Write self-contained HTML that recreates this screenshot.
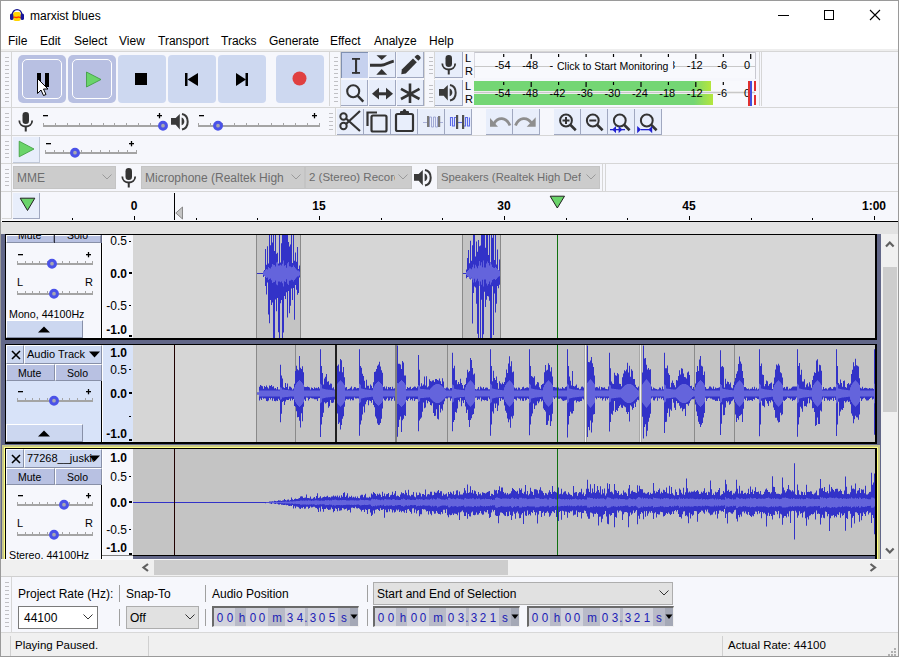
<!DOCTYPE html>
<html><head><meta charset="utf-8"><style>
html,body{margin:0;padding:0;width:899px;height:657px;overflow:hidden;background:#fff;}
body>div,body>svg{position:absolute;}
.t{position:absolute;font-family:"Liberation Sans", sans-serif;white-space:nowrap;line-height:1;}
svg{position:absolute;}
</style></head><body>
<div style="left:0px;top:0px;width:899px;height:657px;background:#fff;"></div>
<svg style="left:8px;top:8px" width="18" height="15" viewBox="0 0 18 15">
<path d="M4.3 7 C4.3 -0.2 13.8 -0.2 13.8 7" fill="none" stroke="#14148c" stroke-width="1.4"/>
<rect x="5.2" y="4" width="7.6" height="9" rx="2.2" fill="#ffd400"/>
<path d="M5.2 9.3 C7 8.6 8.5 10.2 9.5 9.2 C10.5 8.5 11.5 9.8 12.8 9.3" stroke="#ff3000" stroke-width="1.4" fill="none"/>
<rect x="2" y="5.5" width="3.4" height="6.5" rx="1.6" fill="#16169c"/>
<rect x="12.6" y="5.5" width="3.4" height="6.5" rx="1.6" fill="#16169c"/>
</svg>
<div class="t" style="left:30px;top:10px;font-size:12px;color:#000;">marxist blues</div>
<div style="left:778px;top:15px;width:11px;height:1px;background:#000;"></div>
<div style="left:824px;top:10px;width:10px;height:10px;border:1px solid #000;box-sizing:border-box;"></div>
<svg style="left:869px;top:9px" width="12" height="12"><path d="M1 1 L11 11 M11 1 L1 11" stroke="#000" stroke-width="1.1"/></svg>
<div class="t" style="left:8px;top:35px;font-size:12px;">File</div>
<div class="t" style="left:40px;top:35px;font-size:12px;">Edit</div>
<div class="t" style="left:74px;top:35px;font-size:12px;">Select</div>
<div class="t" style="left:119px;top:35px;font-size:12px;">View</div>
<div class="t" style="left:158px;top:35px;font-size:12px;">Transport</div>
<div class="t" style="left:221px;top:35px;font-size:12px;">Tracks</div>
<div class="t" style="left:269px;top:35px;font-size:12px;">Generate</div>
<div class="t" style="left:330px;top:35px;font-size:12px;">Effect</div>
<div class="t" style="left:374px;top:35px;font-size:12px;">Analyze</div>
<div class="t" style="left:429px;top:35px;font-size:12px;">Help</div>
<div style="left:1px;top:49px;width:897px;height:143px;background:#f6f7fc;"></div>
<div style="left:1px;top:49px;width:897px;height:2px;background:#eeeeee;"></div>
<div style="left:1px;top:51px;width:897px;height:1px;background:#d6d6d6;"></div>
<div style="left:1px;top:107px;width:897px;height:1px;background:#d6d6d6;"></div>
<div style="left:1px;top:135px;width:897px;height:1px;background:#d6d6d6;"></div>
<div style="left:1px;top:163px;width:897px;height:1px;background:#d6d6d6;"></div>
<div style="left:1px;top:191px;width:897px;height:1px;background:#d6d6d6;"></div>
<div style="left:1px;top:52px;width:10px;height:55px;background:#f6f7fc;"></div>
<div style="left:11px;top:52px;width:1px;height:55px;background:#d6d6d6;"></div>
<svg style="left:0;top:0" width="899" height="657"><rect x="5" y="57" width="4" height="1" fill="#c0c0c4"/><rect x="5" y="61" width="4" height="1" fill="#c0c0c4"/><rect x="5" y="65" width="4" height="1" fill="#c0c0c4"/><rect x="5" y="69" width="4" height="1" fill="#c0c0c4"/><rect x="5" y="73" width="4" height="1" fill="#c0c0c4"/><rect x="5" y="77" width="4" height="1" fill="#c0c0c4"/><rect x="5" y="81" width="4" height="1" fill="#c0c0c4"/><rect x="5" y="85" width="4" height="1" fill="#c0c0c4"/><rect x="5" y="89" width="4" height="1" fill="#c0c0c4"/><rect x="5" y="93" width="4" height="1" fill="#c0c0c4"/><rect x="5" y="97" width="4" height="1" fill="#c0c0c4"/><rect x="5" y="101" width="4" height="1" fill="#c0c0c4"/></svg>
<div style="left:18px;top:55px;width:48px;height:48px;background:#b8c0e2;border-radius:5px;"></div>
<div style="left:22px;top:59px;width:40px;height:40px;border:1px solid #fff;border-radius:5px;box-sizing:border-box;"></div>
<div style="left:68px;top:55px;width:48px;height:48px;background:#b8c0e2;border-radius:5px;"></div>
<div style="left:72px;top:59px;width:40px;height:40px;border:1px solid #fff;border-radius:5px;box-sizing:border-box;"></div>
<div style="left:118px;top:55px;width:48px;height:48px;background:#cdd8f0;border-radius:4px;"></div>
<div style="left:168px;top:55px;width:48px;height:48px;background:#cdd8f0;border-radius:4px;"></div>
<div style="left:218px;top:55px;width:48px;height:48px;background:#cdd8f0;border-radius:4px;"></div>
<div style="left:276px;top:55px;width:48px;height:48px;background:#cdd8f0;border-radius:4px;"></div>
<div style="left:37px;top:73px;width:4px;height:14px;background:#000;"></div>
<div style="left:45px;top:73px;width:4px;height:14px;background:#000;"></div>
<svg style="left:85px;top:71px" width="17" height="18"><path d="M1.5 1 L16 8.5 L1.5 16 Z" fill="#6ad46a" stroke="#3a9a3a" stroke-width="0.8"/></svg>
<div style="left:135px;top:73px;width:12px;height:12px;background:#000;"></div>
<svg style="left:185px;top:73px" width="14" height="14"><rect x="0" y="0" width="2.5" height="13" fill="#000"/><path d="M2.5 6.5 L13 0 L13 13 Z" fill="#000"/></svg>
<svg style="left:236px;top:73px" width="14" height="14"><path d="M0 0 L10 6.5 L0 13 Z" fill="#000"/><rect x="9.5" y="0" width="2.5" height="13" fill="#000"/></svg>
<svg style="left:292px;top:71px" width="16" height="16"><circle cx="7.5" cy="7.5" r="7" fill="#e04040"/></svg>
<svg style="left:36px;top:77px" width="14" height="22"><path d="M1.5 1.5 L1.5 16.5 L5 13 L7.5 18.5 L10 17.5 L7.5 12 L12 12 Z" fill="#fff" stroke="#000" stroke-width="1"/></svg>
<div style="left:329px;top:51px;width:1px;height:55px;background:#d6d6d6;"></div>
<div style="left:330px;top:52px;width:10px;height:55px;background:#f6f7fc;"></div>
<div style="left:340px;top:52px;width:1px;height:55px;background:#d6d6d6;"></div>
<svg style="left:0;top:0" width="899" height="657"><rect x="334" y="57" width="4" height="1" fill="#c0c0c4"/><rect x="334" y="61" width="4" height="1" fill="#c0c0c4"/><rect x="334" y="65" width="4" height="1" fill="#c0c0c4"/><rect x="334" y="69" width="4" height="1" fill="#c0c0c4"/><rect x="334" y="73" width="4" height="1" fill="#c0c0c4"/><rect x="334" y="77" width="4" height="1" fill="#c0c0c4"/><rect x="334" y="81" width="4" height="1" fill="#c0c0c4"/><rect x="334" y="85" width="4" height="1" fill="#c0c0c4"/><rect x="334" y="89" width="4" height="1" fill="#c0c0c4"/><rect x="334" y="93" width="4" height="1" fill="#c0c0c4"/><rect x="334" y="97" width="4" height="1" fill="#c0c0c4"/><rect x="334" y="101" width="4" height="1" fill="#c0c0c4"/></svg>
<div style="left:341px;top:52px;width:27px;height:26px;background:#c6d1ee;border-left:1px solid #8090b0;border-top:1px solid #8090b0;box-sizing:border-box;"></div>
<div style="left:341px;top:80px;width:27px;height:26px;background:#e8eefb;border-right:1px solid #a0a8c0;border-bottom:1px solid #a0a8c0;box-sizing:border-box;"></div>
<div style="left:369px;top:52px;width:27px;height:26px;background:#e8eefb;border-right:1px solid #a0a8c0;border-bottom:1px solid #a0a8c0;box-sizing:border-box;"></div>
<div style="left:369px;top:80px;width:27px;height:26px;background:#e8eefb;border-right:1px solid #a0a8c0;border-bottom:1px solid #a0a8c0;box-sizing:border-box;"></div>
<div style="left:397px;top:52px;width:27px;height:26px;background:#e8eefb;border-right:1px solid #a0a8c0;border-bottom:1px solid #a0a8c0;box-sizing:border-box;"></div>
<div style="left:397px;top:80px;width:27px;height:26px;background:#e8eefb;border-right:1px solid #a0a8c0;border-bottom:1px solid #a0a8c0;box-sizing:border-box;"></div>
<div style="left:424px;top:51px;width:1px;height:55px;background:#d6d6d6;"></div>
<div style="left:425px;top:52px;width:9px;height:27px;background:#f6f7fc;"></div>
<div style="left:434px;top:52px;width:1px;height:27px;background:#d6d6d6;"></div>
<svg style="left:0;top:0" width="899" height="657"><rect x="429" y="57" width="4" height="1" fill="#c0c0c4"/><rect x="429" y="61" width="4" height="1" fill="#c0c0c4"/><rect x="429" y="65" width="4" height="1" fill="#c0c0c4"/><rect x="429" y="69" width="4" height="1" fill="#c0c0c4"/><rect x="429" y="73" width="4" height="1" fill="#c0c0c4"/></svg>
<div style="left:425px;top:80px;width:9px;height:27px;background:#f6f7fc;"></div>
<div style="left:434px;top:80px;width:1px;height:27px;background:#d6d6d6;"></div>
<svg style="left:0;top:0" width="899" height="657"><rect x="429" y="85" width="4" height="1" fill="#c0c0c4"/><rect x="429" y="89" width="4" height="1" fill="#c0c0c4"/><rect x="429" y="93" width="4" height="1" fill="#c0c0c4"/><rect x="429" y="97" width="4" height="1" fill="#c0c0c4"/><rect x="429" y="101" width="4" height="1" fill="#c0c0c4"/></svg>
<div style="left:435px;top:52px;width:28px;height:26px;background:#e8eefb;border-right:1px solid #a0a8c0;border-bottom:1px solid #a0a8c0;box-sizing:border-box;"></div>
<div style="left:435px;top:80px;width:28px;height:26px;background:#e8eefb;border-right:1px solid #a0a8c0;border-bottom:1px solid #a0a8c0;box-sizing:border-box;"></div>
<svg style="left:0;top:0" width="899" height="657">
<g fill="#333">
<rect x="352" y="58" width="8" height="1.8"/><rect x="352" y="72" width="8" height="1.8"/><rect x="355" y="58" width="2.1" height="15.5"/>
<path d="M376.5 55.3 H387 L381.7 60 Z"/><path d="M376.3 74.8 H387.2 L381.7 69 Z"/>
<path d="M370 63.8 H381 C385 63.5 389 61 393.5 59.8 L394 62.5 C389 64 385 66.5 381 66.8 H370 Z"/>
<path d="M401.3 74.3 L401.8 69.5 L413 58.5 L416.8 62.3 L405.8 73.5 Z"/><path d="M414.5 57 L416.3 55.2 C417 54.5 418 54.5 418.8 55.2 L420.1 56.5 C420.8 57.3 420.8 58.3 420.1 59 L418.3 60.8 Z"/>
<path d="M372 93.7 L379 87.8 V99.6 Z"/><path d="M393 93.7 L386 87.8 V99.6 Z"/><rect x="378" y="92.3" width="9" height="3"/>
</g>
<g fill="none" stroke="#333">
<circle cx="353.2" cy="91.3" r="6" stroke-width="2.1"/><path d="M357.8 95.9 L363.3 101.6" stroke-width="2.4"/>
<path d="M410 83.6 V103 M401 88.8 L419.5 99 M419.5 88.8 L401 99" stroke-width="2.6"/>
</g>
</svg>
<svg style="left:441px;top:55px" width="16" height="21" viewBox="0 0 16 21"><rect x="4.5" y="0" width="6.5" height="12" rx="3.25" fill="#333"/><path d="M1.3 8.5 C1.3 16.5 14.2 16.5 14.2 8.5" fill="none" stroke="#333" stroke-width="1.8"/><rect x="6.75" y="14.5" width="2" height="5" fill="#333"/></svg>
<svg style="left:439px;top:84px" width="19" height="18" viewBox="0 0 19 18"><path d="M0 5 H4.7 L8.8 1 V16.5 L4.7 11.8 H0 Z" fill="#3a3a3a"/><path d="M10.6 4.6 C14.2 5.6 14.2 11.4 10.6 12.3 Z" fill="#3a3a3a"/><path d="M11 1 C18.6 2.6 18.6 14.8 11 16.5" fill="none" stroke="#3a3a3a" stroke-width="2"/></svg>
<div class="t" style="left:465px;top:53px;font-size:11px;color:#000;">L</div>
<div class="t" style="left:465px;top:66px;font-size:11px;color:#000;">R</div>
<div class="t" style="left:465px;top:81px;font-size:11px;color:#000;">L</div>
<div class="t" style="left:465px;top:94px;font-size:11px;color:#000;">R</div>
<div style="left:474px;top:52px;width:281px;height:26px;background:#f8f9fd;border-top:1px solid #c4c4cc;border-left:1px solid #d8d8e0;box-sizing:border-box;"></div>
<div style="left:474px;top:66px;width:281px;height:1px;background:#c8c8c8;"></div>
<div style="left:755px;top:52px;width:1px;height:27px;background:#c8c8d0;"></div>
<div style="left:474px;top:81px;width:281px;height:25px;background:#f8f9fd;"></div>
<div style="left:474px;top:81px;width:237px;height:10px;background:linear-gradient(to right,#74d674 0%,#74d674 92%,#b4e63c 100%);"></div>
<div style="left:474px;top:94px;width:239px;height:11px;background:linear-gradient(to right,#74d674 0%,#74d674 92%,#b4e63c 100%);"></div>
<div style="left:474px;top:91px;width:281px;height:3px;background:#ececec;"></div>
<div style="left:474px;top:92px;width:281px;height:1px;background:#c8c8c8;"></div>
<div class="t" style="left:490.6px;top:60px;width:24px;text-align:center;font-size:11px;color:#000;">-54</div>
<div class="t" style="left:490.6px;top:88px;width:24px;text-align:center;font-size:11px;color:#000;">-54</div>
<div class="t" style="left:518.1px;top:60px;width:24px;text-align:center;font-size:11px;color:#000;">-48</div>
<div class="t" style="left:518.1px;top:88px;width:24px;text-align:center;font-size:11px;color:#000;">-48</div>
<div class="t" style="left:545.5px;top:60px;width:24px;text-align:center;font-size:11px;color:#000;">-42</div>
<div class="t" style="left:545.5px;top:88px;width:24px;text-align:center;font-size:11px;color:#000;">-42</div>
<div class="t" style="left:573.0px;top:60px;width:24px;text-align:center;font-size:11px;color:#000;">-36</div>
<div class="t" style="left:573.0px;top:88px;width:24px;text-align:center;font-size:11px;color:#000;">-36</div>
<div class="t" style="left:600.4px;top:60px;width:24px;text-align:center;font-size:11px;color:#000;">-30</div>
<div class="t" style="left:600.4px;top:88px;width:24px;text-align:center;font-size:11px;color:#000;">-30</div>
<div class="t" style="left:627.9px;top:60px;width:24px;text-align:center;font-size:11px;color:#000;">-24</div>
<div class="t" style="left:627.9px;top:88px;width:24px;text-align:center;font-size:11px;color:#000;">-24</div>
<div class="t" style="left:655.3px;top:60px;width:24px;text-align:center;font-size:11px;color:#000;">-18</div>
<div class="t" style="left:655.3px;top:88px;width:24px;text-align:center;font-size:11px;color:#000;">-18</div>
<div class="t" style="left:682.8px;top:60px;width:24px;text-align:center;font-size:11px;color:#000;">-12</div>
<div class="t" style="left:682.8px;top:88px;width:24px;text-align:center;font-size:11px;color:#000;">-12</div>
<div class="t" style="left:710.2px;top:60px;width:24px;text-align:center;font-size:11px;color:#000;">-6</div>
<div class="t" style="left:710.2px;top:88px;width:24px;text-align:center;font-size:11px;color:#000;">-6</div>
<div class="t" style="left:735.0px;top:60px;width:24px;text-align:center;font-size:11px;color:#000;">0</div>
<div class="t" style="left:735.0px;top:88px;width:24px;text-align:center;font-size:11px;color:#000;">0</div>
<svg style="left:0;top:0" width="899" height="657"><rect x="503.1" y="54" width="1.2" height="3" fill="#000"/><rect x="503.1" y="82" width="1.2" height="3" fill="#000"/><rect x="530.6" y="54" width="1.2" height="5" fill="#000"/><rect x="530.6" y="82" width="1.2" height="5" fill="#000"/><rect x="558.0" y="54" width="1.2" height="3" fill="#000"/><rect x="558.0" y="82" width="1.2" height="3" fill="#000"/><rect x="585.5" y="54" width="1.2" height="5" fill="#000"/><rect x="585.5" y="82" width="1.2" height="5" fill="#000"/><rect x="612.9" y="54" width="1.2" height="3" fill="#000"/><rect x="612.9" y="82" width="1.2" height="3" fill="#000"/><rect x="640.4" y="54" width="1.2" height="5" fill="#000"/><rect x="640.4" y="82" width="1.2" height="5" fill="#000"/><rect x="667.8" y="54" width="1.2" height="3" fill="#000"/><rect x="667.8" y="82" width="1.2" height="3" fill="#000"/><rect x="695.2" y="54" width="1.2" height="5" fill="#000"/><rect x="695.2" y="82" width="1.2" height="5" fill="#000"/><rect x="722.7" y="54" width="1.2" height="3" fill="#000"/><rect x="722.7" y="82" width="1.2" height="3" fill="#000"/><rect x="750.1" y="54" width="1.2" height="5" fill="#000"/><rect x="750.1" y="82" width="1.2" height="5" fill="#000"/></svg>
<div style="left:553px;top:57px;width:120px;height:19px;background:#f8f9fd;"></div>
<div class="t" style="left:557px;top:61px;font-size:10.5px;color:#000;">Click to Start Monitoring</div>
<div style="left:748px;top:81px;width:2px;height:25px;background:#e03030;"></div>
<div style="left:750px;top:81px;width:2px;height:25px;background:#4050e0;"></div>
<div style="left:754px;top:81px;width:2px;height:10px;background:#e03030;"></div>
<div style="left:754px;top:95px;width:2px;height:10px;background:#e03030;"></div>
<div style="left:759px;top:51px;width:1px;height:55px;background:#d6d6d6;"></div>
<div style="left:761px;top:51px;width:1px;height:55px;background:#d6d6d6;"></div>
<div style="left:1px;top:108px;width:10px;height:27px;background:#f6f7fc;"></div>
<div style="left:11px;top:108px;width:1px;height:27px;background:#d6d6d6;"></div>
<svg style="left:0;top:0" width="899" height="657"><rect x="5" y="113" width="4" height="1" fill="#c0c0c4"/><rect x="5" y="117" width="4" height="1" fill="#c0c0c4"/><rect x="5" y="121" width="4" height="1" fill="#c0c0c4"/><rect x="5" y="125" width="4" height="1" fill="#c0c0c4"/><rect x="5" y="129" width="4" height="1" fill="#c0c0c4"/></svg>
<svg style="left:18px;top:112px" width="16" height="21" viewBox="0 0 16 21"><rect x="4.5" y="0" width="6.5" height="12" rx="3.25" fill="#333"/><path d="M1.3 8.5 C1.3 16.5 14.2 16.5 14.2 8.5" fill="none" stroke="#333" stroke-width="1.8"/><rect x="6.75" y="14.5" width="2" height="5" fill="#333"/></svg>
<svg style="left:0;top:0" width="899" height="657"><rect x="43" y="125" width="120" height="2" fill="#a4a4a4"/><rect x="43" y="123" width="1" height="2" fill="#a4a4a4"/><rect x="55" y="123" width="1" height="2" fill="#a4a4a4"/><rect x="67" y="123" width="1" height="2" fill="#a4a4a4"/><rect x="79" y="123" width="1" height="2" fill="#a4a4a4"/><rect x="91" y="123" width="1" height="2" fill="#a4a4a4"/><rect x="103" y="123" width="1" height="2" fill="#a4a4a4"/><rect x="114" y="123" width="1" height="2" fill="#a4a4a4"/><rect x="126" y="123" width="1" height="2" fill="#a4a4a4"/><rect x="138" y="123" width="1" height="2" fill="#a4a4a4"/><rect x="150" y="123" width="1" height="2" fill="#a4a4a4"/><rect x="162" y="123" width="1" height="2" fill="#a4a4a4"/><circle cx="163" cy="125.7" r="3.4" fill="#a8a8b0" stroke="#4a52e8" stroke-width="3.1"/></svg>
<svg style="left:0;top:0" width="899" height="657"><rect x="43" y="115" width="5" height="1.3" fill="#000"/></svg>
<svg style="left:0;top:0" width="899" height="657"><rect x="157" y="115" width="5" height="1.3" fill="#000"/><rect x="158.85" y="113" width="1.3" height="5.3" fill="#000"/></svg>
<svg style="left:171px;top:113px" width="19" height="18" viewBox="0 0 19 18"><path d="M0 5 H4.7 L8.8 1 V16.5 L4.7 11.8 H0 Z" fill="#3a3a3a"/><path d="M10.6 4.6 C14.2 5.6 14.2 11.4 10.6 12.3 Z" fill="#3a3a3a"/><path d="M11 1 C18.6 2.6 18.6 14.8 11 16.5" fill="none" stroke="#3a3a3a" stroke-width="2"/></svg>
<svg style="left:0;top:0" width="899" height="657"><rect x="198" y="125" width="122" height="2" fill="#a4a4a4"/><rect x="198" y="123" width="1" height="2" fill="#a4a4a4"/><rect x="210" y="123" width="1" height="2" fill="#a4a4a4"/><rect x="222" y="123" width="1" height="2" fill="#a4a4a4"/><rect x="234" y="123" width="1" height="2" fill="#a4a4a4"/><rect x="246" y="123" width="1" height="2" fill="#a4a4a4"/><rect x="258" y="123" width="1" height="2" fill="#a4a4a4"/><rect x="271" y="123" width="1" height="2" fill="#a4a4a4"/><rect x="283" y="123" width="1" height="2" fill="#a4a4a4"/><rect x="295" y="123" width="1" height="2" fill="#a4a4a4"/><rect x="307" y="123" width="1" height="2" fill="#a4a4a4"/><rect x="319" y="123" width="1" height="2" fill="#a4a4a4"/><circle cx="218" cy="125.7" r="3.4" fill="#a8a8b0" stroke="#4a52e8" stroke-width="3.1"/></svg>
<svg style="left:0;top:0" width="899" height="657"><rect x="199" y="115" width="5" height="1.3" fill="#000"/></svg>
<svg style="left:0;top:0" width="899" height="657"><rect x="312" y="115" width="5" height="1.3" fill="#000"/><rect x="313.85" y="113" width="1.3" height="5.3" fill="#000"/></svg>
<div style="left:325px;top:107px;width:1px;height:28px;background:#d6d6d6;"></div>
<div style="left:325px;top:108px;width:10px;height:27px;background:#f6f7fc;"></div>
<div style="left:335px;top:108px;width:1px;height:27px;background:#d6d6d6;"></div>
<svg style="left:0;top:0" width="899" height="657"><rect x="329" y="113" width="4" height="1" fill="#c0c0c4"/><rect x="329" y="117" width="4" height="1" fill="#c0c0c4"/><rect x="329" y="121" width="4" height="1" fill="#c0c0c4"/><rect x="329" y="125" width="4" height="1" fill="#c0c0c4"/><rect x="329" y="129" width="4" height="1" fill="#c0c0c4"/></svg>
<div style="left:337px;top:109px;width:27px;height:26px;background:#e8eefb;border-right:1px solid #a0a8c0;border-bottom:1px solid #a0a8c0;box-sizing:border-box;"></div>
<div style="left:364px;top:109px;width:27px;height:26px;background:#e8eefb;border-right:1px solid #a0a8c0;border-bottom:1px solid #a0a8c0;box-sizing:border-box;"></div>
<div style="left:391px;top:109px;width:27px;height:26px;background:#e8eefb;border-right:1px solid #a0a8c0;border-bottom:1px solid #a0a8c0;box-sizing:border-box;"></div>
<div style="left:418px;top:109px;width:27px;height:26px;background:#e8eefb;border-right:1px solid #a0a8c0;border-bottom:1px solid #a0a8c0;box-sizing:border-box;"></div>
<div style="left:445px;top:109px;width:27px;height:26px;background:#e8eefb;border-right:1px solid #a0a8c0;border-bottom:1px solid #a0a8c0;box-sizing:border-box;"></div>
<div style="left:486px;top:109px;width:27px;height:26px;background:#e8eefb;border-right:1px solid #a0a8c0;border-bottom:1px solid #a0a8c0;box-sizing:border-box;"></div>
<div style="left:513px;top:109px;width:27px;height:26px;background:#e8eefb;border-right:1px solid #a0a8c0;border-bottom:1px solid #a0a8c0;box-sizing:border-box;"></div>
<div style="left:554px;top:109px;width:27px;height:26px;background:#e8eefb;border-right:1px solid #a0a8c0;border-bottom:1px solid #a0a8c0;box-sizing:border-box;"></div>
<div style="left:581px;top:109px;width:27px;height:26px;background:#e8eefb;border-right:1px solid #a0a8c0;border-bottom:1px solid #a0a8c0;box-sizing:border-box;"></div>
<div style="left:608px;top:109px;width:27px;height:26px;background:#e8eefb;border-right:1px solid #a0a8c0;border-bottom:1px solid #a0a8c0;box-sizing:border-box;"></div>
<div style="left:635px;top:109px;width:27px;height:26px;background:#e8eefb;border-right:1px solid #a0a8c0;border-bottom:1px solid #a0a8c0;box-sizing:border-box;"></div>
<svg style="left:0;top:0" width="899" height="657">
<g fill="none" stroke="#333" stroke-width="2">
<circle cx="343.5" cy="126" r="3.2"/><circle cx="343.5" cy="116.5" r="3.2"/>
<path d="M346 124 L360 111 M346 118.5 L360 131" stroke-width="2.2"/>
<path d="M367.5 126 V112.5 H377" stroke-width="2.2"/>
<rect x="371.5" y="115.5" width="15" height="16" rx="1.5" stroke-width="2.2"/>
<rect x="396" y="114" width="17" height="17" rx="1.5" stroke-width="2.2"/>
</g>
<rect x="400" y="111" width="9" height="4" rx="1" fill="#333"/>
<circle cx="404.5" cy="110.5" r="1.6" fill="#333"/>
<path d="M423 122.5 H427 M440 122.5 H443" stroke="#a8b0d8" stroke-width="1.2"/>
<path d="M429.5 127 V117 H431.5 V127 H433.5 V117 H435.5 V127 H437.5 V117" fill="none" stroke="#98a0d0" stroke-width="0.9"/>
<rect x="427" y="116" width="2.2" height="11" fill="#7a7a7a"/><rect x="438" y="116" width="2.2" height="11" fill="#7a7a7a"/>
<path d="M450.5 126 V117.5 H452.5 V126 H454.5 V117.5 H456 M464 126 H465.5 V117.5 H467.5 V126 H469.5 V117.5" fill="none" stroke="#5a6ae8" stroke-width="1.1"/>
<path d="M458 122.5 H462" stroke="#5a6ae8" stroke-width="1.1"/>
<rect x="456" y="115" width="2.2" height="14" fill="#505050"/><rect x="462" y="115" width="2.2" height="14" fill="#505050"/>
<path d="M490 118 V126.7 H498 Z" fill="#8e8e8e"/>
<path d="M494 123.5 C498 117 506 116.5 510 125.5" fill="none" stroke="#8e8e8e" stroke-width="2.8"/>
<path d="M535.7 117.3 V126.7 H526.7 Z" fill="#8e8e8e"/>
<path d="M515.5 125.5 C519 117 527 116.5 531.5 123" fill="none" stroke="#8e8e8e" stroke-width="2.8"/>
<g fill="none" stroke="#333" stroke-width="2">
<circle cx="566" cy="120.5" r="5.9"/><path d="M570.3 124.8 L575.8 130.2" stroke-width="2.6"/>
<path d="M562.5 120.5 H569.5 M566 117 V124"/>
<circle cx="592.8" cy="120.5" r="5.9"/><path d="M597.1 124.8 L602.6 130.2" stroke-width="2.6"/>
<path d="M589.3 120.5 H596.3"/>
<circle cx="619.8" cy="120.5" r="5.9"/><path d="M624.1 124.8 L629.6 130.2" stroke-width="2.6"/>
<circle cx="646.8" cy="120.5" r="5.9"/><path d="M651.1 124.8 L656.6 130.2" stroke-width="2.6"/>
</g>
<g fill="#2020d0">
<rect x="610" y="129" width="15" height="1.3"/>
<path d="M612.3 129.6 L616 126 V133.2 Z"/><path d="M622.3 129.6 L618.6 126 V133.2 Z"/>
<rect x="641" y="129" width="10" height="1.3"/>
<path d="M637.2 126 V133.2 L641 129.6 Z"/><path d="M652.2 126 V133.2 L648.4 129.6 Z"/>
</g>
</svg>
<div style="left:1px;top:136px;width:10px;height:27px;background:#f6f7fc;"></div>
<div style="left:11px;top:136px;width:1px;height:27px;background:#d6d6d6;"></div>
<svg style="left:0;top:0" width="899" height="657"><rect x="5" y="141" width="4" height="1" fill="#c0c0c4"/><rect x="5" y="145" width="4" height="1" fill="#c0c0c4"/><rect x="5" y="149" width="4" height="1" fill="#c0c0c4"/><rect x="5" y="153" width="4" height="1" fill="#c0c0c4"/><rect x="5" y="157" width="4" height="1" fill="#c0c0c4"/></svg>
<div style="left:13px;top:137px;width:27px;height:26px;background:#e8eefb;border-right:1px solid #c0c8d8;border-bottom:1px solid #c0c8d8;box-sizing:border-box;"></div>
<svg style="left:18px;top:140px" width="18" height="19"><path d="M1.2 1.2 L16 9 L1.2 16.8 Z" fill="#6ad46a" stroke="#3a9a3a" stroke-width="0.8"/></svg>
<svg style="left:0;top:0" width="899" height="657"><rect x="45" y="152" width="92" height="2" fill="#a4a4a4"/><rect x="45" y="150" width="1" height="2" fill="#a4a4a4"/><rect x="54" y="150" width="1" height="2" fill="#a4a4a4"/><rect x="63" y="150" width="1" height="2" fill="#a4a4a4"/><rect x="72" y="150" width="1" height="2" fill="#a4a4a4"/><rect x="81" y="150" width="1" height="2" fill="#a4a4a4"/><rect x="91" y="150" width="1" height="2" fill="#a4a4a4"/><rect x="100" y="150" width="1" height="2" fill="#a4a4a4"/><rect x="109" y="150" width="1" height="2" fill="#a4a4a4"/><rect x="118" y="150" width="1" height="2" fill="#a4a4a4"/><rect x="127" y="150" width="1" height="2" fill="#a4a4a4"/><rect x="136" y="150" width="1" height="2" fill="#a4a4a4"/><circle cx="75" cy="152.7" r="3.4" fill="#a8a8b0" stroke="#4a52e8" stroke-width="3.1"/></svg>
<svg style="left:0;top:0" width="899" height="657"><rect x="46" y="143" width="5" height="1.3" fill="#000"/></svg>
<svg style="left:0;top:0" width="899" height="657"><rect x="129" y="143" width="5" height="1.3" fill="#000"/><rect x="130.85" y="141" width="1.3" height="5.3" fill="#000"/></svg>
<div style="left:1px;top:164px;width:10px;height:27px;background:#f6f7fc;"></div>
<div style="left:11px;top:164px;width:1px;height:27px;background:#d6d6d6;"></div>
<svg style="left:0;top:0" width="899" height="657"><rect x="5" y="169" width="4" height="1" fill="#c0c0c4"/><rect x="5" y="173" width="4" height="1" fill="#c0c0c4"/><rect x="5" y="177" width="4" height="1" fill="#c0c0c4"/><rect x="5" y="181" width="4" height="1" fill="#c0c0c4"/><rect x="5" y="185" width="4" height="1" fill="#c0c0c4"/></svg>
<div style="left:13px;top:166px;width:103px;height:23px;background:#cccccc;border:1px solid #c4c4c4;box-sizing:border-box;"></div>
<div style="left:17px;top:166px;width:81px;height:23px;overflow:hidden;"><div class="t" style="left:0;top:6px;font-size:12px;color:#6d6d6d;">MME</div></div>
<svg style="left:102px;top:174px" width="10" height="6"><path d="M0.5 0.5 L5 5 L9.5 0.5" fill="none" stroke="#9a9a9a" stroke-width="1"/></svg>
<svg style="left:121px;top:168px" width="16" height="21" viewBox="0 0 16 21"><rect x="4.5" y="0" width="6.5" height="12" rx="3.25" fill="#333"/><path d="M1.3 8.5 C1.3 16.5 14.2 16.5 14.2 8.5" fill="none" stroke="#333" stroke-width="1.8"/><rect x="6.75" y="14.5" width="2" height="5" fill="#333"/></svg>
<div style="left:141px;top:166px;width:164px;height:23px;background:#cccccc;border:1px solid #c4c4c4;box-sizing:border-box;"></div>
<div style="left:145px;top:166px;width:141px;height:23px;overflow:hidden;"><div class="t" style="left:0;top:6px;font-size:12px;color:#6d6d6d;">Microphone (Realtek High</div></div>
<svg style="left:291px;top:174px" width="10" height="6"><path d="M0.5 0.5 L5 5 L9.5 0.5" fill="none" stroke="#9a9a9a" stroke-width="1"/></svg>
<div style="left:305px;top:166px;width:107px;height:23px;background:#cccccc;border:1px solid #c4c4c4;box-sizing:border-box;"></div>
<div style="left:309px;top:166px;width:86px;height:23px;overflow:hidden;"><div class="t" style="left:0;top:6px;font-size:11.5px;color:#6d6d6d;">2 (Stereo) Recording Control</div></div>
<svg style="left:398px;top:174px" width="10" height="6"><path d="M0.5 0.5 L5 5 L9.5 0.5" fill="none" stroke="#9a9a9a" stroke-width="1"/></svg>
<svg style="left:414px;top:169px" width="19" height="18" viewBox="0 0 19 18"><path d="M0 5 H4.7 L8.8 1 V16.5 L4.7 11.8 H0 Z" fill="#3a3a3a"/><path d="M10.6 4.6 C14.2 5.6 14.2 11.4 10.6 12.3 Z" fill="#3a3a3a"/><path d="M11 1 C18.6 2.6 18.6 14.8 11 16.5" fill="none" stroke="#3a3a3a" stroke-width="2"/></svg>
<div style="left:437px;top:166px;width:163px;height:23px;background:#cccccc;border:1px solid #c4c4c4;box-sizing:border-box;"></div>
<div style="left:441px;top:166px;width:140px;height:23px;overflow:hidden;"><div class="t" style="left:0;top:6px;font-size:11.3px;color:#6d6d6d;">Speakers (Realtek High Definition Audio)</div></div>
<svg style="left:586px;top:174px" width="10" height="6"><path d="M0.5 0.5 L5 5 L9.5 0.5" fill="none" stroke="#9a9a9a" stroke-width="1"/></svg>
<div style="left:602px;top:164px;width:1px;height:27px;background:#d6d6d6;"></div>
<div style="left:605px;top:164px;width:1px;height:27px;background:#d6d6d6;"></div>
<div style="left:1px;top:192px;width:897px;height:28px;background:#f6f7fc;"></div>
<div style="left:11px;top:192px;width:1px;height:27px;background:#d6d6d6;"></div>
<div style="left:2px;top:218px;width:9px;height:1px;background:#d6d6d6;"></div>
<div style="left:13px;top:193px;width:27px;height:26px;background:#e8eefb;border-right:1px solid #a0a8c0;border-bottom:1px solid #a0a8c0;box-sizing:border-box;"></div>
<svg style="left:19px;top:197px" width="18" height="15"><path d="M1.2 1.2 L15.8 1.2 L8.5 13.5 Z" fill="#6ad46a" stroke="#202020" stroke-width="1"/></svg>
<div style="left:2px;top:220px;width:896px;height:1px;background:#fcfcfe;"></div>
<div style="left:2px;top:221px;width:896px;height:1px;background:#000;"></div>
<svg style="left:0;top:0" width="899" height="657"><rect x="72" y="218" width="1" height="2" fill="#000"/><rect x="134" y="216" width="1" height="4" fill="#000"/><rect x="196" y="218" width="1" height="2" fill="#000"/><rect x="257" y="218" width="1" height="2" fill="#000"/><rect x="319" y="216" width="1" height="4" fill="#000"/><rect x="381" y="218" width="1" height="2" fill="#000"/><rect x="442" y="218" width="1" height="2" fill="#000"/><rect x="504" y="216" width="1" height="4" fill="#000"/><rect x="566" y="218" width="1" height="2" fill="#000"/><rect x="627" y="218" width="1" height="2" fill="#000"/><rect x="689" y="216" width="1" height="4" fill="#000"/><rect x="751" y="218" width="1" height="2" fill="#000"/><rect x="812" y="218" width="1" height="2" fill="#000"/><rect x="874" y="216" width="1" height="4" fill="#000"/></svg>
<div class="t" style="left:104px;top:200px;width:60px;text-align:center;font-size:12px;font-weight:bold;">0</div>
<div class="t" style="left:289px;top:200px;width:60px;text-align:center;font-size:12px;font-weight:bold;">15</div>
<div class="t" style="left:474px;top:200px;width:60px;text-align:center;font-size:12px;font-weight:bold;">30</div>
<div class="t" style="left:659px;top:200px;width:60px;text-align:center;font-size:12px;font-weight:bold;">45</div>
<div class="t" style="left:844px;top:200px;width:60px;text-align:center;font-size:12px;font-weight:bold;">1:00</div>
<div style="left:174px;top:193px;width:1px;height:27px;background:#000;"></div>
<svg style="left:175px;top:206px" width="9" height="15"><path d="M0.8 7 L7.5 1 V13 Z" fill="#c4c4c4" stroke="#808080" stroke-width="0.9"/></svg>
<svg style="left:549px;top:195px" width="17" height="15"><path d="M1.2 1.2 L15.5 1.2 L8.3 13 Z" fill="#6ad46a" stroke="#202020" stroke-width="1"/></svg>
<div style="left:1px;top:222px;width:897px;height:12px;background:#e2e2e2;"></div>
<div style="left:1px;top:234px;width:880px;height:325px;background:#626788;"></div>
<div style="left:881px;top:234px;width:17px;height:325px;background:#f0f0f0;"></div>
<div style="left:883px;top:267px;width:14px;height:145px;background:#cdcdcd;"></div>
<svg style="left:885px;top:240px" width="10" height="8"><path d="M1 6.5 L4.8 2.5 L8.6 6.5" fill="none" stroke="#606060" stroke-width="2.2"/></svg>
<svg style="left:885px;top:547px" width="10" height="8"><path d="M1 1.5 L4.8 5.5 L8.6 1.5" fill="none" stroke="#606060" stroke-width="2.2"/></svg>
<div style="left:5px;top:234px;width:872px;height:1px;background:#000;"></div>
<div style="left:5px;top:234px;width:1px;height:106px;background:#000;"></div>
<div style="left:5px;top:338px;width:872px;height:2px;background:#000;"></div>
<div style="left:875px;top:234px;width:2px;height:106px;background:#000;"></div>
<div style="left:6px;top:235px;width:95px;height:103px;background:#f6f7fc;"></div>
<div style="left:101px;top:243px;width:1px;height:95px;background:#000;"></div>
<div style="left:102px;top:235px;width:31px;height:103px;background:#f6f7fc;border-left:1px solid #fff;box-sizing:border-box;"></div>
<div style="left:6px;top:235px;width:48px;height:8px;background:#b8c1e2;border-left:1px solid #fff;border-top:1px solid #fff;border-right:1px solid #8890a8;border-bottom:1px solid #8890a8;box-sizing:border-box;"></div>
<div style="left:54px;top:235px;width:47px;height:8px;background:#b8c1e2;border-left:1px solid #fff;border-top:1px solid #fff;border-right:1px solid #8890a8;border-bottom:1px solid #8890a8;box-sizing:border-box;"></div>
<div style="left:54px;top:235px;width:1px;height:8px;background:#303040;"></div>
<div style="left:6px;top:235px;width:95px;height:7px;overflow:hidden;"><div class="t" style="left:12px;top:-5px;font-size:10.5px;">Mute</div><div class="t" style="left:61px;top:-5px;font-size:10.5px;">Solo</div></div>
<div style="left:5px;top:234px;width:872px;height:1px;background:#000;"></div>
<svg style="left:0;top:0" width="899" height="657"><rect x="17" y="263" width="76" height="2" fill="#a4a4a4"/><rect x="17" y="261" width="1" height="2" fill="#a4a4a4"/><rect x="25" y="261" width="1" height="2" fill="#a4a4a4"/><rect x="32" y="261" width="1" height="2" fill="#a4a4a4"/><rect x="39" y="261" width="1" height="2" fill="#a4a4a4"/><rect x="47" y="261" width="1" height="2" fill="#a4a4a4"/><rect x="55" y="261" width="1" height="2" fill="#a4a4a4"/><rect x="62" y="261" width="1" height="2" fill="#a4a4a4"/><rect x="69" y="261" width="1" height="2" fill="#a4a4a4"/><rect x="77" y="261" width="1" height="2" fill="#a4a4a4"/><rect x="85" y="261" width="1" height="2" fill="#a4a4a4"/><rect x="92" y="261" width="1" height="2" fill="#a4a4a4"/><circle cx="52" cy="263.7" r="3.4" fill="#a8a8b0" stroke="#4a52e8" stroke-width="3.1"/></svg>
<svg style="left:0;top:0" width="899" height="657"><rect x="18" y="254" width="5" height="1.3" fill="#000"/></svg>
<svg style="left:0;top:0" width="899" height="657"><rect x="86" y="254" width="5" height="1.3" fill="#000"/><rect x="87.85" y="252" width="1.3" height="5.3" fill="#000"/></svg>
<svg style="left:0;top:0" width="899" height="657"><rect x="17" y="293" width="76" height="2" fill="#a4a4a4"/><rect x="17" y="291" width="1" height="2" fill="#a4a4a4"/><rect x="25" y="291" width="1" height="2" fill="#a4a4a4"/><rect x="32" y="291" width="1" height="2" fill="#a4a4a4"/><rect x="39" y="291" width="1" height="2" fill="#a4a4a4"/><rect x="47" y="291" width="1" height="2" fill="#a4a4a4"/><rect x="55" y="291" width="1" height="2" fill="#a4a4a4"/><rect x="62" y="291" width="1" height="2" fill="#a4a4a4"/><rect x="69" y="291" width="1" height="2" fill="#a4a4a4"/><rect x="77" y="291" width="1" height="2" fill="#a4a4a4"/><rect x="85" y="291" width="1" height="2" fill="#a4a4a4"/><rect x="92" y="291" width="1" height="2" fill="#a4a4a4"/><circle cx="54" cy="293.7" r="3.4" fill="#a8a8b0" stroke="#4a52e8" stroke-width="3.1"/></svg>
<div class="t" style="left:17px;top:277px;font-size:11px;">L</div>
<div class="t" style="left:85px;top:277px;font-size:11px;">R</div>
<div class="t" style="left:9px;top:309px;font-size:10.7px;">Mono, 44100Hz</div>
<div style="left:6px;top:320px;width:77px;height:18px;background:#ccd7f0;border-left:1px solid #fff;border-top:1px solid #fff;border-right:1px solid #8890a8;border-bottom:1px solid #8890a8;box-sizing:border-box;"></div>
<svg style="left:38px;top:326px" width="12" height="7"><path d="M0 6.5 L6 0.5 L12 6.5 Z" fill="#000"/></svg>
<div class="t" style="left:97px;top:235.0px;width:30px;text-align:right;font-size:12px;font-weight:normal;">0.5</div>
<div class="t" style="left:97px;top:268.2px;width:30px;text-align:right;font-size:12px;font-weight:bold;">0.0</div>
<div class="t" style="left:97px;top:299.5px;width:30px;text-align:right;font-size:12px;font-weight:normal;">-0.5</div>
<div class="t" style="left:97px;top:323.5px;width:30px;text-align:right;font-size:12px;font-weight:bold;">-1.0</div>
<svg style="left:0;top:0" width="899" height="657"><rect x="129" y="241" width="2" height="1" fill="#000"/><rect x="129" y="272" width="3" height="2" fill="#000"/><rect x="129" y="305" width="2" height="1" fill="#000"/><rect x="129" y="335" width="3" height="2" fill="#000"/></svg>
<div style="left:5px;top:344px;width:872px;height:1px;background:#000;"></div>
<div style="left:5px;top:344px;width:1px;height:100px;background:#000;"></div>
<div style="left:5px;top:442px;width:872px;height:2px;background:#000;"></div>
<div style="left:875px;top:344px;width:2px;height:100px;background:#000;"></div>
<div style="left:6px;top:345px;width:95px;height:97px;background:#d8e3f9;"></div>
<div style="left:101px;top:345px;width:1px;height:97px;background:#000;"></div>
<div style="left:102px;top:345px;width:31px;height:97px;background:#d8e3f9;border-left:1px solid #fff;box-sizing:border-box;"></div>
<div style="left:6px;top:345px;width:18px;height:19px;background:#ccd7f0;border-left:1px solid #fff;border-top:1px solid #fff;border-right:1px solid #8890a8;border-bottom:1px solid #8890a8;box-sizing:border-box;"></div>
<div style="left:24px;top:345px;width:78px;height:19px;background:#ccd7f0;border-left:1px solid #fff;border-top:1px solid #fff;border-right:1px solid #8890a8;border-bottom:1px solid #8890a8;box-sizing:border-box;"></div>
<svg style="left:11px;top:350px" width="10" height="10"><path d="M1 1 L9 9 M9 1 L1 9" stroke="#000" stroke-width="1.6"/></svg>
<div class="t" style="left:27px;top:349px;font-size:11px;">Audio Track</div>
<svg style="left:89px;top:351px" width="11" height="7"><path d="M0 0.5 H11 L5.5 6.5 Z" fill="#000"/></svg>
<div style="left:6px;top:364px;width:49px;height:17px;background:#b8c1e2;border-left:1px solid #fff;border-top:1px solid #fff;border-right:1px solid #8890a8;border-bottom:1px solid #8890a8;box-sizing:border-box;"></div>
<div style="left:55px;top:364px;width:47px;height:17px;background:#b8c1e2;border-left:1px solid #fff;border-top:1px solid #fff;border-right:1px solid #8890a8;border-bottom:1px solid #8890a8;box-sizing:border-box;"></div>
<div class="t" style="left:18px;top:368px;font-size:10.5px;">Mute</div>
<div class="t" style="left:67px;top:368px;font-size:10.5px;">Solo</div>
<svg style="left:0;top:0" width="899" height="657"><rect x="17" y="400" width="76" height="2" fill="#a4a4a4"/><rect x="17" y="398" width="1" height="2" fill="#a4a4a4"/><rect x="25" y="398" width="1" height="2" fill="#a4a4a4"/><rect x="32" y="398" width="1" height="2" fill="#a4a4a4"/><rect x="39" y="398" width="1" height="2" fill="#a4a4a4"/><rect x="47" y="398" width="1" height="2" fill="#a4a4a4"/><rect x="55" y="398" width="1" height="2" fill="#a4a4a4"/><rect x="62" y="398" width="1" height="2" fill="#a4a4a4"/><rect x="69" y="398" width="1" height="2" fill="#a4a4a4"/><rect x="77" y="398" width="1" height="2" fill="#a4a4a4"/><rect x="85" y="398" width="1" height="2" fill="#a4a4a4"/><rect x="92" y="398" width="1" height="2" fill="#a4a4a4"/><circle cx="54" cy="400.7" r="3.4" fill="#a8a8b0" stroke="#4a52e8" stroke-width="3.1"/></svg>
<svg style="left:0;top:0" width="899" height="657"><rect x="18" y="391" width="5" height="1.3" fill="#000"/></svg>
<svg style="left:0;top:0" width="899" height="657"><rect x="86" y="391" width="5" height="1.3" fill="#000"/><rect x="87.85" y="389" width="1.3" height="5.3" fill="#000"/></svg>
<div style="left:6px;top:424px;width:77px;height:18px;background:#ccd7f0;border-left:1px solid #fff;border-top:1px solid #fff;border-right:1px solid #8890a8;border-bottom:1px solid #8890a8;box-sizing:border-box;"></div>
<svg style="left:38px;top:430px" width="12" height="7"><path d="M0 6.5 L6 0.5 L12 6.5 Z" fill="#000"/></svg>
<div class="t" style="left:97px;top:347.2px;width:30px;text-align:right;font-size:12px;font-weight:bold;">1.0</div>
<div class="t" style="left:97px;top:363.5px;width:30px;text-align:right;font-size:12px;font-weight:normal;">0.5</div>
<div class="t" style="left:97px;top:387.5px;width:30px;text-align:right;font-size:12px;font-weight:bold;">0.0</div>
<div class="t" style="left:97px;top:427.5px;width:30px;text-align:right;font-size:12px;font-weight:bold;">-1.0</div>
<svg style="left:0;top:0" width="899" height="657"><rect x="129" y="369" width="2" height="1" fill="#000"/><rect x="129" y="392" width="3" height="2" fill="#000"/><rect x="129" y="416" width="2" height="1" fill="#000"/><rect x="129" y="439" width="3" height="2" fill="#000"/></svg>
<div style="left:2px;top:445px;width:878px;height:3px;background:#c8c88c;"></div>
<div style="left:2px;top:445px;width:3px;height:114px;background:#c8c88c;"></div>
<div style="left:877px;top:445px;width:3px;height:114px;background:#c8c88c;"></div>
<div style="left:4px;top:447px;width:874px;height:1px;background:#ffff80;"></div>
<div style="left:4px;top:447px;width:1px;height:112px;background:#ffff80;"></div>
<div style="left:877px;top:447px;width:1px;height:112px;background:#ffff80;"></div>
<div style="left:5px;top:448px;width:872px;height:1px;background:#000;"></div>
<div style="left:5px;top:448px;width:1px;height:111px;background:#000;"></div>
<div style="left:875px;top:448px;width:2px;height:111px;background:#000;"></div>
<div style="left:6px;top:449px;width:95px;height:110px;background:#f6f7fc;"></div>
<div style="left:101px;top:449px;width:1px;height:110px;background:#000;"></div>
<div style="left:102px;top:449px;width:31px;height:110px;background:#f6f7fc;border-left:1px solid #fff;box-sizing:border-box;"></div>
<div style="left:6px;top:449px;width:18px;height:19px;background:#ccd7f0;border-left:1px solid #fff;border-top:1px solid #fff;border-right:1px solid #8890a8;border-bottom:1px solid #8890a8;box-sizing:border-box;"></div>
<div style="left:24px;top:449px;width:78px;height:19px;background:#ccd7f0;border-left:1px solid #fff;border-top:1px solid #fff;border-right:1px solid #8890a8;border-bottom:1px solid #8890a8;box-sizing:border-box;"></div>
<svg style="left:11px;top:454px" width="10" height="10"><path d="M1 1 L9 9 M9 1 L1 9" stroke="#000" stroke-width="1.6"/></svg>
<div style="left:24px;top:449px;width:70px;height:18px;overflow:hidden;"><div class="t" style="left:3px;top:4px;font-size:11px;">77268__juskiddink__...</div></div>
<svg style="left:89px;top:455px" width="11" height="7"><path d="M0 0.5 H11 L5.5 6.5 Z" fill="#000"/></svg>
<div style="left:6px;top:468px;width:49px;height:17px;background:#b8c1e2;border-left:1px solid #fff;border-top:1px solid #fff;border-right:1px solid #8890a8;border-bottom:1px solid #8890a8;box-sizing:border-box;"></div>
<div style="left:55px;top:468px;width:47px;height:17px;background:#b8c1e2;border-left:1px solid #fff;border-top:1px solid #fff;border-right:1px solid #8890a8;border-bottom:1px solid #8890a8;box-sizing:border-box;"></div>
<div class="t" style="left:18px;top:472px;font-size:10.5px;">Mute</div>
<div class="t" style="left:67px;top:472px;font-size:10.5px;">Solo</div>
<svg style="left:0;top:0" width="899" height="657"><rect x="17" y="504" width="76" height="2" fill="#a4a4a4"/><rect x="17" y="502" width="1" height="2" fill="#a4a4a4"/><rect x="25" y="502" width="1" height="2" fill="#a4a4a4"/><rect x="32" y="502" width="1" height="2" fill="#a4a4a4"/><rect x="39" y="502" width="1" height="2" fill="#a4a4a4"/><rect x="47" y="502" width="1" height="2" fill="#a4a4a4"/><rect x="55" y="502" width="1" height="2" fill="#a4a4a4"/><rect x="62" y="502" width="1" height="2" fill="#a4a4a4"/><rect x="69" y="502" width="1" height="2" fill="#a4a4a4"/><rect x="77" y="502" width="1" height="2" fill="#a4a4a4"/><rect x="85" y="502" width="1" height="2" fill="#a4a4a4"/><rect x="92" y="502" width="1" height="2" fill="#a4a4a4"/><circle cx="64" cy="504.7" r="3.4" fill="#a8a8b0" stroke="#4a52e8" stroke-width="3.1"/></svg>
<svg style="left:0;top:0" width="899" height="657"><rect x="18" y="495" width="5" height="1.3" fill="#000"/></svg>
<svg style="left:0;top:0" width="899" height="657"><rect x="86" y="495" width="5" height="1.3" fill="#000"/><rect x="87.85" y="493" width="1.3" height="5.3" fill="#000"/></svg>
<svg style="left:0;top:0" width="899" height="657"><rect x="17" y="534" width="76" height="2" fill="#a4a4a4"/><rect x="17" y="532" width="1" height="2" fill="#a4a4a4"/><rect x="25" y="532" width="1" height="2" fill="#a4a4a4"/><rect x="32" y="532" width="1" height="2" fill="#a4a4a4"/><rect x="39" y="532" width="1" height="2" fill="#a4a4a4"/><rect x="47" y="532" width="1" height="2" fill="#a4a4a4"/><rect x="55" y="532" width="1" height="2" fill="#a4a4a4"/><rect x="62" y="532" width="1" height="2" fill="#a4a4a4"/><rect x="69" y="532" width="1" height="2" fill="#a4a4a4"/><rect x="77" y="532" width="1" height="2" fill="#a4a4a4"/><rect x="85" y="532" width="1" height="2" fill="#a4a4a4"/><rect x="92" y="532" width="1" height="2" fill="#a4a4a4"/><circle cx="54" cy="534.7" r="3.4" fill="#a8a8b0" stroke="#4a52e8" stroke-width="3.1"/></svg>
<div class="t" style="left:17px;top:518px;font-size:11px;">L</div>
<div class="t" style="left:85px;top:518px;font-size:11px;">R</div>
<div class="t" style="left:9px;top:550px;font-size:10.7px;">Stereo, 44100Hz</div>
<div class="t" style="left:97px;top:452.2px;width:30px;text-align:right;font-size:12px;font-weight:bold;">1.0</div>
<div class="t" style="left:97px;top:470.5px;width:30px;text-align:right;font-size:12px;font-weight:normal;">0.5</div>
<div class="t" style="left:97px;top:497.0px;width:30px;text-align:right;font-size:12px;font-weight:bold;">0.0</div>
<div class="t" style="left:97px;top:523.5px;width:30px;text-align:right;font-size:12px;font-weight:normal;">-0.5</div>
<div class="t" style="left:97px;top:541.8px;width:30px;text-align:right;font-size:12px;font-weight:bold;">-1.0</div>
<svg style="left:0;top:0" width="899" height="657"><rect x="129" y="476" width="2" height="1" fill="#000"/><rect x="129" y="501" width="3" height="2" fill="#000"/><rect x="129" y="529" width="2" height="1" fill="#000"/><rect x="129" y="553" width="3" height="2" fill="#000"/></svg>
<div style="left:133px;top:555px;width:742px;height:1px;background:#000;"></div>
<div style="left:133px;top:556px;width:742px;height:3px;background:#626788;"></div>
<div style="left:102px;top:555px;width:31px;height:1px;background:#808080;"></div>
<svg style="left:0;top:0" width="899" height="657"><rect x="133" y="235" width="742" height="103" fill="#d6d6d6"/><rect x="257" y="235" width="43" height="103" fill="#c4c4c4"/><rect x="463" y="235" width="37" height="103" fill="#c4c4c4"/><rect x="256" y="235" width="1" height="103" fill="#8a8a8a"/><rect x="300" y="235" width="1" height="103" fill="#8a8a8a"/><rect x="462" y="235" width="1" height="103" fill="#8a8a8a"/><rect x="500" y="235" width="1" height="103" fill="#8a8a8a"/><polygon points="257,273.0 258,273.0 258,273.0 259,273.0 259,273.0 260,273.0 260,273.0 261,273.0 261,273.0 262,273.0 262,273.0 263,273.0 263,271.5 264,271.5 264,269.9 265,269.9 265,248.9 266,248.9 266,264.7 267,264.7 267,246.3 268,246.3 268,263.6 269,263.6 269,235.0 270,235.0 270,245.3 271,245.3 271,235.0 272,235.0 272,242.4 273,242.4 273,235.0 274,235.0 274,251.1 275,251.1 275,235.0 276,235.0 276,253.8 277,253.8 277,252.8 278,252.8 278,263.4 279,263.4 279,235.0 280,235.0 280,262.4 281,262.4 281,243.2 282,243.2 282,235.0 283,235.0 283,235.0 284,235.0 284,235.0 285,235.0 285,235.0 286,235.0 286,235.0 287,235.0 287,235.0 288,235.0 288,242.0 289,242.0 289,246.4 290,246.4 290,244.6 291,244.6 291,235.0 292,235.0 292,263.1 293,263.1 293,235.0 294,235.0 294,260.7 295,260.7 295,252.6 296,252.6 296,261.7 297,261.7 297,247.1 298,247.1 298,269.0 299,269.0 299,265.6 300,265.6 300,277.4 299,277.4 299,293.1 298,293.1 298,294.8 297,294.8 297,289.7 296,289.7 296,285.0 295,285.0 295,319.7 294,319.7 294,288.1 293,288.1 293,300.1 292,300.1 292,288.4 291,288.4 291,305.7 290,305.7 290,313.2 289,313.2 289,291.1 288,291.1 288,317.6 287,317.6 287,292.3 286,292.3 286,299.0 285,299.0 285,295.9 284,295.9 284,332.5 283,332.5 283,338.0 282,338.0 282,300.0 281,300.0 281,303.2 280,303.2 280,338.0 279,338.0 279,332.3 278,332.3 278,298.1 277,298.1 277,311.3 276,311.3 276,299.6 275,299.6 275,338.0 274,338.0 274,338.0 273,338.0 273,302.6 272,302.6 272,304.9 271,304.9 271,300.0 270,300.0 270,323.3 269,323.3 269,314.4 268,314.4 268,282.5 267,282.5 267,294.5 266,294.5 266,285.9 265,285.9 265,275.7 264,275.7 264,277.0 263,277.0 263,274.0 262,274.0 262,274.0 261,274.0 261,274.0 260,274.0 260,274.0 259,274.0 259,274.0 258,274.0 258,274.0 257,274.0" fill="#3232c8"/><polygon points="257,273.5 258,273.5 258,273.5 259,273.5 259,273.5 260,273.5 260,273.5 261,273.5 261,273.5 262,273.5 262,273.5 263,273.5 263,271.9 264,271.9 264,271.3 265,271.3 265,270.1 266,270.1 266,269.1 267,269.1 267,269.6 268,269.6 268,267.0 269,267.0 269,268.0 270,268.0 270,268.5 271,268.5 271,266.7 272,266.7 272,263.9 273,263.9 273,264.7 274,264.7 274,265.0 275,265.0 275,266.5 276,266.5 276,262.6 277,262.6 277,261.7 278,261.7 278,265.6 279,265.6 279,265.6 280,265.6 280,264.8 281,264.8 281,265.5 282,265.5 282,263.8 283,263.8 283,260.6 284,260.6 284,265.7 285,265.7 285,264.9 286,264.9 286,267.8 287,267.8 287,263.3 288,263.3 288,261.9 289,261.9 289,266.3 290,266.3 290,266.5 291,266.5 291,267.3 292,267.3 292,267.0 293,267.0 293,265.6 294,265.6 294,267.1 295,267.1 295,268.2 296,268.2 296,269.6 297,269.6 297,270.5 298,270.5 298,270.5 299,270.5 299,271.4 300,271.4 300,275.6 299,275.6 299,276.5 298,276.5 298,276.5 297,276.5 297,277.4 296,277.4 296,278.8 295,278.8 295,279.9 294,279.9 294,281.4 293,281.4 293,280.0 292,280.0 292,279.7 291,279.7 291,280.5 290,280.5 290,280.7 289,280.7 289,285.1 288,285.1 288,283.7 287,283.7 287,279.2 286,279.2 286,282.1 285,282.1 285,281.3 284,281.3 284,286.4 283,286.4 283,283.2 282,283.2 282,281.5 281,281.5 281,282.2 280,282.2 280,281.4 279,281.4 279,281.4 278,281.4 278,285.3 277,285.3 277,284.4 276,284.4 276,280.5 275,280.5 275,282.0 274,282.0 274,282.3 273,282.3 273,283.1 272,283.1 272,280.3 271,280.3 271,278.5 270,278.5 270,279.0 269,279.0 269,280.0 268,280.0 268,277.4 267,277.4 267,277.9 266,277.9 266,276.9 265,276.9 265,275.7 264,275.7 264,275.1 263,275.1 263,273.5 262,273.5 262,273.5 261,273.5 261,273.5 260,273.5 260,273.5 259,273.5 259,273.5 258,273.5 258,273.5 257,273.5" fill="#6464dc"/><polygon points="463,273.0 464,273.0 464,273.0 465,273.0 465,273.0 466,273.0 466,269.5 467,269.5 467,257.9 468,257.9 468,250.0 469,250.0 469,263.3 470,263.3 470,240.7 471,240.7 471,260.7 472,260.7 472,245.2 473,245.2 473,235.0 474,235.0 474,235.0 475,235.0 475,256.6 476,256.6 476,241.5 477,241.5 477,251.8 478,251.8 478,240.1 479,240.1 479,246.2 480,246.2 480,245.5 481,245.5 481,235.0 482,235.0 482,235.0 483,235.0 483,235.0 484,235.0 484,235.0 485,235.0 485,247.8 486,247.8 486,235.0 487,235.0 487,235.0 488,235.0 488,254.9 489,254.9 489,235.0 490,235.0 490,262.2 491,262.2 491,235.0 492,235.0 492,237.8 493,237.8 493,235.0 494,235.0 494,260.0 495,260.0 495,235.0 496,235.0 496,264.6 497,264.6 497,249.4 498,249.4 498,270.3 499,270.3 499,259.5 500,259.5 500,284.8 499,284.8 499,288.3 498,288.3 498,286.1 497,286.1 497,303.8 496,303.8 496,312.6 495,312.6 495,293.5 494,293.5 494,335.0 493,335.0 493,286.2 492,286.2 492,338.0 491,338.0 491,338.0 490,338.0 490,300.7 489,300.7 489,296.6 488,296.6 488,296.0 487,296.0 487,299.7 486,299.7 486,306.9 485,306.9 485,291.8 484,291.8 484,334.2 483,334.2 483,338.0 482,338.0 482,299.8 481,299.8 481,338.0 480,338.0 480,285.9 479,285.9 479,338.0 478,338.0 478,333.8 477,333.8 477,303.8 476,303.8 476,287.5 475,287.5 475,286.4 474,286.4 474,292.9 473,292.9 473,323.6 472,323.6 472,278.5 471,278.5 471,279.4 470,279.4 470,278.6 469,278.6 469,276.9 468,276.9 468,277.0 467,277.0 467,278.2 466,278.2 466,274.0 465,274.0 465,274.0 464,274.0 464,274.0 463,274.0" fill="#3232c8"/><polygon points="463,273.5 464,273.5 464,273.5 465,273.5 465,273.5 466,273.5 466,271.9 467,271.9 467,270.9 468,270.9 468,270.1 469,270.1 469,268.4 470,268.4 470,268.4 471,268.4 471,269.2 472,269.2 472,267.3 473,267.3 473,264.5 474,264.5 474,268.3 475,268.3 475,264.8 476,264.8 476,266.6 477,266.6 477,268.3 478,268.3 478,265.7 479,265.7 479,261.1 480,261.1 480,265.5 481,265.5 481,262.2 482,262.2 482,267.3 483,267.3 483,260.6 484,260.6 484,267.4 485,267.4 485,267.6 486,267.6 486,263.5 487,263.5 487,261.4 488,261.4 488,263.1 489,263.1 489,265.5 490,265.5 490,262.2 491,262.2 491,264.5 492,264.5 492,267.0 493,267.0 493,267.7 494,267.7 494,268.1 495,268.1 495,267.1 496,267.1 496,267.9 497,267.9 497,269.3 498,269.3 498,270.3 499,270.3 499,270.8 500,270.8 500,276.2 499,276.2 499,276.7 498,276.7 498,277.7 497,277.7 497,279.1 496,279.1 496,279.9 495,279.9 495,278.9 494,278.9 494,279.3 493,279.3 493,280.0 492,280.0 492,282.5 491,282.5 491,284.8 490,284.8 490,281.5 489,281.5 489,283.9 488,283.9 488,285.6 487,285.6 487,283.5 486,283.5 486,279.4 485,279.4 485,279.6 484,279.6 484,286.4 483,286.4 483,279.7 482,279.7 482,284.8 481,284.8 481,281.5 480,281.5 480,285.9 479,285.9 479,281.3 478,281.3 478,278.7 477,278.7 477,280.4 476,280.4 476,282.2 475,282.2 475,278.7 474,278.7 474,282.5 473,282.5 473,279.7 472,279.7 472,277.8 471,277.8 471,278.6 470,278.6 470,278.6 469,278.6 469,276.9 468,276.9 468,276.1 467,276.1 467,275.1 466,275.1 466,273.5 465,273.5 465,273.5 464,273.5 464,273.5 463,273.5" fill="#6464dc"/><rect x="133" y="345" width="742" height="97" fill="#d6d6d6"/><rect x="257" y="345" width="618" height="97" fill="#c4c4c4"/><rect x="256" y="345" width="1" height="97" fill="#8a8a8a"/><rect x="295" y="345" width="1" height="97" fill="#8a8a8a"/><rect x="447" y="345" width="1" height="97" fill="#8a8a8a"/><rect x="694" y="345" width="1" height="97" fill="#8a8a8a"/><rect x="734" y="345" width="1" height="97" fill="#8a8a8a"/><polygon points="257,392.5 258,392.5 258,392.5 259,392.5 259,386.8 260,386.8 260,385.0 261,385.0 261,385.8 262,385.8 262,386.2 263,386.2 263,388.8 264,388.8 264,385.9 265,385.9 265,386.9 266,386.9 266,385.5 267,385.5 267,387.3 268,387.3 268,388.6 269,388.6 269,385.4 270,385.4 270,386.0 271,386.0 271,385.0 272,385.0 272,386.7 273,386.7 273,386.3 274,386.3 274,388.6 275,388.6 275,388.1 276,388.1 276,389.2 277,389.2 277,386.9 278,386.9 278,389.6 279,389.6 279,389.5 280,389.5 280,364.7 281,364.7 281,375.6 282,375.6 282,378.5 283,378.5 283,387.2 284,387.2 284,387.9 285,387.9 285,383.0 286,383.0 286,386.9 287,386.9 287,383.4 288,383.4 288,389.2 289,389.2 289,386.6 290,386.6 290,386.8 291,386.8 291,387.7 292,387.7 292,389.6 293,389.6 293,388.5 294,388.5 294,383.7 295,383.7 295,370.9 296,370.9 296,365.8 297,365.8 297,369.3 298,369.3 298,370.3 299,370.3 299,356.0 300,356.0 300,367.8 301,367.8 301,369.1 302,369.1 302,366.3 303,366.3 303,372.2 304,372.2 304,386.8 305,386.8 305,387.0 306,387.0 306,386.9 307,386.9 307,386.5 308,386.5 308,387.1 309,387.1 309,387.5 310,387.5 310,389.4 311,389.4 311,387.5 312,387.5 312,387.9 313,387.9 313,389.1 314,389.1 314,387.2 315,387.2 315,388.3 316,388.3 316,387.8 317,387.8 317,388.2 318,388.2 318,387.1 319,387.1 319,388.6 320,388.6 320,349.3 321,349.3 321,366.1 322,366.1 322,373.0 323,373.0 323,384.4 324,384.4 324,378.5 325,378.5 325,376.8 326,376.8 326,373.9 327,373.9 327,381.8 328,381.8 328,381.3 329,381.3 329,384.7 330,384.7 330,383.5 331,383.5 331,383.7 332,383.7 332,388.2 333,388.2 333,387.3 334,387.3 334,389.6 335,389.6 335,379.5 336,379.5 336,373.1 337,373.1 337,365.7 338,365.7 338,364.6 339,364.6 339,371.6 340,371.6 340,358.9 341,358.9 341,360.2 342,360.2 342,372.3 343,372.3 343,367.0 344,367.0 344,377.2 345,377.2 345,387.5 346,387.5 346,387.0 347,387.0 347,389.5 348,389.5 348,389.0 349,389.0 349,388.8 350,388.8 350,387.8 351,387.8 351,386.4 352,386.4 352,389.6 353,389.6 353,388.5 354,388.5 354,386.9 355,386.9 355,387.2 356,387.2 356,388.6 357,388.6 357,387.9 358,387.9 358,388.0 359,388.0 359,349.3 360,349.3 360,366.1 361,366.1 361,367.7 362,367.7 362,373.8 363,373.8 363,376.0 364,376.0 364,380.8 365,380.8 365,387.8 366,387.8 366,379.8 367,379.8 367,385.7 368,385.7 368,385.7 369,385.7 369,388.6 370,388.6 370,384.5 371,384.5 371,385.7 372,385.7 372,387.9 373,387.9 373,382.2 374,382.2 374,372.0 375,372.0 375,371.4 376,371.4 376,369.1 377,369.1 377,365.7 378,365.7 378,364.6 379,364.6 379,361.7 380,361.7 380,366.6 381,366.6 381,370.3 382,370.3 382,372.7 383,372.7 383,387.1 384,387.1 384,386.4 385,386.4 385,388.6 386,388.6 386,386.6 387,386.6 387,389.2 388,389.2 388,386.9 389,386.9 389,387.5 390,387.5 390,387.0 391,387.0 391,388.9 392,388.9 392,386.8 393,386.8 393,388.8 394,388.8 394,388.3 395,388.3 395,389.0 396,389.0 396,378.9 397,378.9 397,345.5 398,345.5 398,363.7 399,363.7 399,363.8 400,363.8 400,364.5 401,364.5 401,368.9 402,368.9 402,361.1 403,361.1 403,362.5 404,362.5 404,375.4 405,375.4 405,375.4 406,375.4 406,389.0 407,389.0 407,387.0 408,387.0 408,388.0 409,388.0 409,387.5 410,387.5 410,386.7 411,386.7 411,388.9 412,388.9 412,388.0 413,388.0 413,387.3 414,387.3 414,386.5 415,386.5 415,386.8 416,386.8 416,388.1 417,388.1 417,386.4 418,386.4 418,355.1 419,355.1 419,369.7 420,369.7 420,386.5 421,386.5 421,383.3 422,383.3 422,385.7 423,385.7 423,384.6 424,384.6 424,376.5 425,376.5 425,385.6 426,385.6 426,376.3 427,376.3 427,387.3 428,387.3 428,386.3 429,386.3 429,379.2 430,379.2 430,380.9 431,380.9 431,381.6 432,381.6 432,380.6 433,380.6 433,380.3 434,380.3 434,382.1 435,382.1 435,378.9 436,378.9 436,379.0 437,379.0 437,380.1 438,380.1 438,380.6 439,380.6 439,378.6 440,378.6 440,381.3 441,381.3 441,384.0 442,384.0 442,378.2 443,378.2 443,381.4 444,381.4 444,388.2 445,388.2 445,388.5 446,388.5 446,387.6 447,387.6 447,387.5 448,387.5 448,388.5 449,388.5 449,389.4 450,389.4 450,388.1 451,388.1 451,387.9 452,387.9 452,352.7 453,352.7 453,368.2 454,368.2 454,365.8 455,365.8 455,380.3 456,380.3 456,380.1 457,380.1 457,384.3 458,384.3 458,382.0 459,382.0 459,383.9 460,383.9 460,378.8 461,378.8 461,383.0 462,383.0 462,385.1 463,385.1 463,388.4 464,388.4 464,385.0 465,385.0 465,383.9 466,383.9 466,377.8 467,377.8 467,369.8 468,369.8 468,372.2 469,372.2 469,371.1 470,371.1 470,358.0 471,358.0 471,360.0 472,360.0 472,368.0 473,368.0 473,374.6 474,374.6 474,373.6 475,373.6 475,389.0 476,389.0 476,389.6 477,389.6 477,388.8 478,388.8 478,386.9 479,386.9 479,389.5 480,389.5 480,386.5 481,386.5 481,387.5 482,387.5 482,388.6 483,388.6 483,386.9 484,386.9 484,389.1 485,389.1 485,387.7 486,387.7 486,387.6 487,387.6 487,387.7 488,387.7 488,389.3 489,389.3 489,389.2 490,389.2 490,349.3 491,349.3 491,366.1 492,366.1 492,381.3 493,381.3 493,370.7 494,370.7 494,377.9 495,377.9 495,380.1 496,380.1 496,376.6 497,376.6 497,382.9 498,382.9 498,388.8 499,388.8 499,381.2 500,381.2 500,383.3 501,383.3 501,384.3 502,384.3 502,382.4 503,382.4 503,384.1 504,384.1 504,381.9 505,381.9 505,377.4 506,377.4 506,369.4 507,369.4 507,373.1 508,373.1 508,363.4 509,363.4 509,356.2 510,356.2 510,366.3 511,366.3 511,361.3 512,361.3 512,372.2 513,372.2 513,371.4 514,371.4 514,387.5 515,387.5 515,388.5 516,388.5 516,387.7 517,387.7 517,389.5 518,389.5 518,387.6 519,387.6 519,387.7 520,387.7 520,389.5 521,389.5 521,389.0 522,389.0 522,387.2 523,387.2 523,386.8 524,386.8 524,388.6 525,388.6 525,388.1 526,388.1 526,387.5 527,387.5 527,387.3 528,387.3 528,387.8 529,387.8 529,349.3 530,349.3 530,366.1 531,366.1 531,376.1 532,376.1 532,376.7 533,376.7 533,377.7 534,377.7 534,376.3 535,376.3 535,385.5 536,385.5 536,384.3 537,384.3 537,381.9 538,381.9 538,382.6 539,382.6 539,387.3 540,387.3 540,388.8 541,388.8 541,384.9 542,384.9 542,383.9 543,383.9 543,383.4 544,383.4 544,372.2 545,372.2 545,365.0 546,365.0 546,370.6 547,370.6 547,369.8 548,369.8 548,363.2 549,363.2 549,365.0 550,365.0 550,371.6 551,371.6 551,367.3 552,367.3 552,376.4 553,376.4 553,387.0 554,387.0 554,387.1 555,387.1 555,387.4 556,387.4 556,387.5 557,387.5 557,388.7 558,388.7 558,387.5 559,387.5 559,388.8 560,388.8 560,388.6 561,388.6 561,388.8 562,388.8 562,387.1 563,387.1 563,388.3 564,388.3 564,388.5 565,388.5 565,386.9 566,386.9 566,386.6 567,386.6 567,349.3 568,349.3 568,366.1 569,366.1 569,376.6 570,376.6 570,380.8 571,380.8 571,385.5 572,385.5 572,371.0 573,371.0 573,385.9 574,385.9 574,386.6 575,386.6 575,385.8 576,385.8 576,384.4 577,384.4 577,387.9 578,387.9 578,387.8 579,387.8 579,389.2 580,389.2 580,388.8 581,388.8 581,386.7 582,386.7 582,386.6 583,386.6 583,387.5 584,387.5 584,387.9 585,387.9 585,382.7 586,382.7 586,373.6 587,373.6 587,345.5 588,345.5 588,362.1 589,362.1 589,362.3 590,362.3 590,360.4 591,360.4 591,357.0 592,357.0 592,363.2 593,363.2 593,367.0 594,367.0 594,375.4 595,375.4 595,387.4 596,387.4 596,387.1 597,387.1 597,387.3 598,387.3 598,388.3 599,388.3 599,386.5 600,386.5 600,389.6 601,389.6 601,386.9 602,386.9 602,387.4 603,387.4 603,387.7 604,387.7 604,387.2 605,387.2 605,388.8 606,388.8 606,388.9 607,388.9 607,389.2 608,389.2 608,386.5 609,386.5 609,352.7 610,352.7 610,368.2 611,368.2 611,381.6 612,381.6 612,383.6 613,383.6 613,383.9 614,383.9 614,372.7 615,372.7 615,375.3 616,375.3 616,375.8 617,375.8 617,373.0 618,373.0 618,374.2 619,374.2 619,383.8 620,383.8 620,384.1 621,384.1 621,386.3 622,386.3 622,377.2 623,377.2 623,373.5 624,373.5 624,370.3 625,370.3 625,371.3 626,371.3 626,369.5 627,369.5 627,362.8 628,362.8 628,372.6 629,372.6 629,365.7 630,365.7 630,376.8 631,376.8 631,369.3 632,369.3 632,370.7 633,370.7 633,379.1 634,379.1 634,379.0 635,379.0 635,384.7 636,384.7 636,387.0 637,387.0 637,387.7 638,387.7 638,386.6 639,386.6 639,388.6 640,388.6 640,388.5 641,388.5 641,383.4 642,383.4 642,372.4 643,372.4 643,345.5 644,345.5 644,358.6 645,358.6 645,358.1 646,358.1 646,364.8 647,364.8 647,369.5 648,369.5 648,368.1 649,368.1 649,369.7 650,369.7 650,369.3 651,369.3 651,386.6 652,386.6 652,389.2 653,389.2 653,387.5 654,387.5 654,388.2 655,388.2 655,388.8 656,388.8 656,388.9 657,388.9 657,389.6 658,389.6 658,389.2 659,389.2 659,387.5 660,387.5 660,387.8 661,387.8 661,389.5 662,389.5 662,386.5 663,386.5 663,389.2 664,389.2 664,352.7 665,352.7 665,368.2 666,368.2 666,368.3 667,368.3 667,365.4 668,365.4 668,373.3 669,373.3 669,375.0 670,375.0 670,387.3 671,387.3 671,382.7 672,382.7 672,380.4 673,380.4 673,383.0 674,383.0 674,385.3 675,385.3 675,387.3 676,387.3 676,380.1 677,380.1 677,380.4 678,380.4 678,375.9 679,375.9 679,370.2 680,370.2 680,374.4 681,374.4 681,368.3 682,368.3 682,368.7 683,368.7 683,373.6 684,373.6 684,377.0 685,377.0 685,377.3 686,377.3 686,378.4 687,378.4 687,372.5 688,372.5 688,371.4 689,371.4 689,375.0 690,375.0 690,386.1 691,386.1 691,385.7 692,385.7 692,388.8 693,388.8 693,387.1 694,387.1 694,389.5 695,389.5 695,383.6 696,383.6 696,371.9 697,371.9 697,365.9 698,365.9 698,371.1 699,371.1 699,359.6 700,359.6 700,355.9 701,355.9 701,365.8 702,365.8 702,366.5 703,366.5 703,374.9 704,374.9 704,371.6 705,371.6 705,386.9 706,386.9 706,388.8 707,388.8 707,388.9 708,388.9 708,388.6 709,388.6 709,386.6 710,386.6 710,386.5 711,386.5 711,387.4 712,387.4 712,388.7 713,388.7 713,386.5 714,386.5 714,389.0 715,389.0 715,387.4 716,387.4 716,388.3 717,388.3 717,388.1 718,388.1 718,387.8 719,387.8 719,387.3 720,387.3 720,350.3 721,350.3 721,366.7 722,366.7 722,366.1 723,366.1 723,367.2 724,367.2 724,387.4 725,387.4 725,378.7 726,378.7 726,383.7 727,383.7 727,381.4 728,381.4 728,381.9 729,381.9 729,384.3 730,384.3 730,382.4 731,382.4 731,387.5 732,387.5 732,388.2 733,388.2 733,384.9 734,384.9 734,381.6 735,381.6 735,378.0 736,378.0 736,373.8 737,373.8 737,371.2 738,371.2 738,364.1 739,364.1 739,356.5 740,356.5 740,361.5 741,361.5 741,363.8 742,363.8 742,371.0 743,371.0 743,378.0 744,378.0 744,386.9 745,386.9 745,387.1 746,387.1 746,388.3 747,388.3 747,388.9 748,388.9 748,388.5 749,388.5 749,389.4 750,389.4 750,388.7 751,388.7 751,388.7 752,388.7 752,387.3 753,387.3 753,389.0 754,389.0 754,386.7 755,386.7 755,389.3 756,389.3 756,387.7 757,387.7 757,389.4 758,389.4 758,388.7 759,388.7 759,349.3 760,349.3 760,366.1 761,366.1 761,363.4 762,363.4 762,374.6 763,374.6 763,375.0 764,375.0 764,386.3 765,386.3 765,384.0 766,384.0 766,380.4 767,380.4 767,381.3 768,381.3 768,385.7 769,385.7 769,384.0 770,384.0 770,383.2 771,383.2 771,382.4 772,382.4 772,389.0 773,389.0 773,383.8 774,383.8 774,377.6 775,377.6 775,369.5 776,369.5 776,364.4 777,364.4 777,365.5 778,365.5 778,363.7 779,363.7 779,365.5 780,365.5 780,372.2 781,372.2 781,373.2 782,373.2 782,377.6 783,377.6 783,387.7 784,387.7 784,386.9 785,386.9 785,388.7 786,388.7 786,386.7 787,386.7 787,386.7 788,386.7 788,389.4 789,389.4 789,388.5 790,388.5 790,388.8 791,388.8 791,387.7 792,387.7 792,386.7 793,386.7 793,386.4 794,386.4 794,386.4 795,386.4 795,386.5 796,386.5 796,386.4 797,386.4 797,349.3 798,349.3 798,366.1 799,366.1 799,363.1 800,363.1 800,374.7 801,374.7 801,369.7 802,369.7 802,381.5 803,381.5 803,381.6 804,381.6 804,379.3 805,379.3 805,387.2 806,387.2 806,384.5 807,384.5 807,383.2 808,383.2 808,386.5 809,386.5 809,382.3 810,382.3 810,384.4 811,384.4 811,387.8 812,387.8 812,379.9 813,379.9 813,375.8 814,375.8 814,372.3 815,372.3 815,373.0 816,373.0 816,360.6 817,360.6 817,359.3 818,359.3 818,371.6 819,371.6 819,364.7 820,364.7 820,365.2 821,365.2 821,370.8 822,370.8 822,389.4 823,389.4 823,386.9 824,386.9 824,389.1 825,389.1 825,388.2 826,388.2 826,388.4 827,388.4 827,389.6 828,389.6 828,388.3 829,388.3 829,387.4 830,387.4 830,386.9 831,386.9 831,388.4 832,388.4 832,388.9 833,388.9 833,387.3 834,387.3 834,386.7 835,386.7 835,387.2 836,387.2 836,349.3 837,349.3 837,366.1 838,366.1 838,383.0 839,383.0 839,384.6 840,384.6 840,379.4 841,379.4 841,383.0 842,383.0 842,386.8 843,386.8 843,380.9 844,380.9 844,380.4 845,380.4 845,386.9 846,386.9 846,387.8 847,387.8 847,384.0 848,384.0 848,383.0 849,383.0 849,384.5 850,384.5 850,383.6 851,383.6 851,374.0 852,374.0 852,369.8 853,369.8 853,362.3 854,362.3 854,366.2 855,366.2 855,358.7 856,358.7 856,365.2 857,365.2 857,365.8 858,365.8 858,366.6 859,366.6 859,378.3 860,378.3 860,387.8 861,387.8 861,388.4 862,388.4 862,386.7 863,386.7 863,388.7 864,388.7 864,387.9 865,387.9 865,387.8 866,387.8 866,388.1 867,388.1 867,388.4 868,388.4 868,388.8 869,388.8 869,388.1 870,388.1 870,388.4 871,388.4 871,388.5 872,388.5 872,388.3 873,388.3 873,389.1 874,389.1 874,349.3 875,349.3 875,434.7 874,434.7 874,398.7 873,398.7 873,399.6 872,399.6 872,397.4 871,397.4 871,398.1 870,398.1 870,399.0 869,399.0 869,400.3 868,400.3 868,400.5 867,400.5 867,400.4 866,400.4 866,399.3 865,399.3 865,397.7 864,397.7 864,398.2 863,398.2 863,399.2 862,399.2 862,401.1 861,401.1 861,398.3 860,398.3 860,414.6 859,414.6 859,419.8 858,419.8 858,417.6 857,417.6 857,417.2 856,417.2 856,415.8 855,415.8 855,419.3 854,419.3 854,423.3 853,423.3 853,415.8 852,415.8 852,413.4 851,413.4 851,404.3 850,404.3 850,401.5 849,401.5 849,401.9 848,401.9 848,400.6 847,400.6 847,401.5 846,401.5 846,402.5 845,402.5 845,400.9 844,400.9 844,407.9 843,407.9 843,409.9 842,409.9 842,409.4 841,409.4 841,411.6 840,411.6 840,415.7 839,415.7 839,401.7 838,401.7 838,424.4 837,424.4 837,436.0 836,436.0 836,400.1 835,400.1 835,397.7 834,397.7 834,401.0 833,401.0 833,398.0 832,398.0 832,399.7 831,399.7 831,399.5 830,399.5 830,401.0 829,401.0 829,399.7 828,399.7 828,400.5 827,400.5 827,398.6 826,398.6 826,398.1 825,398.1 825,400.9 824,400.9 824,397.6 823,397.6 823,399.6 822,399.6 822,411.6 821,411.6 821,410.6 820,410.6 820,424.0 819,424.0 819,423.9 818,423.9 818,417.5 817,417.5 817,425.1 816,425.1 816,426.1 815,426.1 815,412.1 814,412.1 814,408.0 813,408.0 813,408.3 812,408.3 812,400.5 811,400.5 811,399.4 810,399.4 810,403.3 809,403.3 809,398.3 808,398.3 808,403.6 807,403.6 807,406.8 806,406.8 806,406.1 805,406.1 805,406.2 804,406.2 804,401.1 803,401.1 803,411.8 802,411.8 802,408.6 801,408.6 801,406.8 800,406.8 800,417.3 799,417.3 799,424.4 798,424.4 798,436.8 797,436.8 797,397.4 796,397.4 796,399.2 795,399.2 795,400.2 794,400.2 794,400.1 793,400.1 793,401.1 792,401.1 792,398.5 791,398.5 791,399.4 790,399.4 790,398.2 789,398.2 789,398.1 788,398.1 788,397.6 787,397.6 787,398.9 786,398.9 786,399.9 785,399.9 785,401.0 784,401.0 784,400.6 783,400.6 783,414.2 782,414.2 782,415.2 781,415.2 781,412.8 780,412.8 780,421.9 779,421.9 779,422.5 778,422.5 778,420.6 777,420.6 777,417.7 776,417.7 776,417.7 775,417.7 775,410.1 774,410.1 774,407.5 773,407.5 773,401.4 772,401.4 772,400.2 771,400.2 771,402.4 770,402.4 770,401.0 769,401.0 769,406.0 768,406.0 768,403.5 767,403.5 767,401.0 766,401.0 766,399.5 765,399.5 765,407.2 764,407.2 764,406.1 763,406.1 763,405.5 762,405.5 762,400.8 761,400.8 761,424.4 760,424.4 760,436.3 759,436.3 759,399.2 758,399.2 758,399.1 757,399.1 757,397.9 756,397.9 756,397.7 755,397.7 755,399.8 754,399.8 754,398.9 753,398.9 753,401.1 752,401.1 752,400.2 751,400.2 751,399.9 750,399.9 750,400.4 749,400.4 749,400.3 748,400.3 748,401.0 747,401.0 747,397.8 746,397.8 746,400.3 745,400.3 745,398.8 744,398.8 744,408.8 743,408.8 743,422.0 742,422.0 742,414.3 741,414.3 741,415.3 740,415.3 740,416.0 739,416.0 739,419.8 738,419.8 738,418.1 737,418.1 737,422.1 736,422.1 736,414.4 735,414.4 735,402.5 734,402.5 734,399.2 733,399.2 733,400.5 732,400.5 732,401.3 731,401.3 731,403.8 730,403.8 730,404.7 729,404.7 729,401.3 728,401.3 728,402.4 727,402.4 727,401.0 726,401.0 726,407.6 725,407.6 725,414.9 724,414.9 724,415.3 723,415.3 723,404.5 722,404.5 722,423.7 721,423.7 721,434.9 720,434.9 720,400.9 719,400.9 719,398.4 718,398.4 718,401.1 717,401.1 717,400.8 716,400.8 716,401.1 715,401.1 715,399.7 714,399.7 714,399.8 713,399.8 713,399.6 712,399.6 712,398.6 711,398.6 711,398.6 710,398.6 710,397.7 709,397.7 709,397.9 708,397.9 708,398.8 707,398.8 707,400.9 706,400.9 706,397.8 705,397.8 705,413.0 704,413.0 704,417.4 703,417.4 703,423.0 702,423.0 702,424.8 701,424.8 701,427.0 700,427.0 700,424.1 699,424.1 699,421.8 698,421.8 698,415.9 697,415.9 697,411.5 696,411.5 696,404.4 695,404.4 695,398.4 694,398.4 694,399.2 693,399.2 693,399.2 692,399.2 692,399.5 691,399.5 691,400.8 690,400.8 690,403.3 689,403.3 689,405.7 688,405.7 688,404.3 687,404.3 687,404.0 686,404.0 686,416.1 685,416.1 685,408.8 684,408.8 684,409.2 683,409.2 683,411.3 682,411.3 682,407.8 681,407.8 681,408.4 680,408.4 680,405.8 679,405.8 679,403.1 678,403.1 678,403.2 677,403.2 677,401.0 676,401.0 676,409.9 675,409.9 675,407.8 674,407.8 674,402.7 673,402.7 673,398.9 672,398.9 672,410.8 671,410.8 671,409.4 670,409.4 670,416.7 669,416.7 669,408.4 668,408.4 668,413.1 667,413.1 667,421.7 666,421.7 666,422.1 665,422.1 665,433.0 664,433.0 664,400.3 663,400.3 663,398.0 662,398.0 662,399.2 661,399.2 661,397.5 660,397.5 660,398.6 659,398.6 659,397.7 658,397.7 658,400.7 657,400.7 657,397.4 656,397.4 656,398.6 655,398.6 655,400.4 654,400.4 654,400.3 653,400.3 653,397.6 652,397.6 652,398.6 651,398.6 651,413.7 650,413.7 650,417.7 649,417.7 649,421.8 648,421.8 648,430.8 647,430.8 647,436.2 646,436.2 646,424.2 645,424.2 645,427.1 644,427.1 644,438.5 643,438.5 643,416.8 642,416.8 642,406.2 641,406.2 641,398.3 640,398.3 640,399.0 639,399.0 639,400.2 638,400.2 638,399.8 637,399.8 637,401.7 636,401.7 636,407.0 635,407.0 635,403.5 634,403.5 634,408.0 633,408.0 633,409.8 632,409.8 632,406.6 631,406.6 631,405.2 630,405.2 630,421.4 629,421.4 629,412.0 628,412.0 628,414.1 627,414.1 627,412.1 626,412.1 626,407.2 625,407.2 625,406.5 624,406.5 624,405.5 623,405.5 623,407.9 622,407.9 622,407.6 621,407.6 621,404.8 620,404.8 620,405.9 619,405.9 619,408.1 618,408.1 618,410.9 617,410.9 617,409.9 616,409.9 616,411.9 615,411.9 615,401.0 614,401.0 614,410.8 613,410.8 613,414.8 612,414.8 612,413.7 611,413.7 611,422.1 610,422.1 610,431.6 609,431.6 609,397.9 608,397.9 608,399.4 607,399.4 607,398.3 606,398.3 606,400.7 605,400.7 605,397.8 604,397.8 604,398.8 603,398.8 603,400.4 602,400.4 602,398.1 601,398.1 601,398.6 600,398.6 600,397.5 599,397.5 599,398.1 598,398.1 598,397.4 597,397.4 597,399.2 596,399.2 596,397.7 595,397.7 595,414.1 594,414.1 594,414.4 593,414.4 593,422.6 592,422.6 592,432.4 591,432.4 591,420.4 590,420.4 590,430.3 589,430.3 589,427.1 588,427.1 588,437.0 587,437.0 587,409.6 586,409.6 586,406.5 585,406.5 585,399.4 584,399.4 584,399.5 583,399.5 583,398.4 582,398.4 582,401.1 581,401.1 581,401.0 580,401.0 580,401.7 579,401.7 579,401.4 578,401.4 578,400.9 577,400.9 577,402.4 576,402.4 576,400.3 575,400.3 575,400.8 574,400.8 574,410.9 573,410.9 573,413.6 572,413.6 572,413.6 571,413.6 571,411.7 570,411.7 570,416.1 569,416.1 569,424.4 568,424.4 568,437.5 567,437.5 567,399.7 566,399.7 566,400.2 565,400.2 565,400.5 564,400.5 564,401.0 563,401.0 563,400.5 562,400.5 562,399.2 561,399.2 561,398.2 560,398.2 560,398.7 559,398.7 559,398.7 558,398.7 558,399.7 557,399.7 557,397.6 556,397.6 556,397.4 555,397.4 555,398.9 554,398.9 554,397.4 553,397.4 553,413.8 552,413.8 552,421.2 551,421.2 551,426.1 550,426.1 550,415.3 549,415.3 549,420.8 548,420.8 548,424.7 547,424.7 547,424.9 546,424.9 546,411.6 545,411.6 545,409.9 544,409.9 544,408.5 543,408.5 543,400.4 542,400.4 542,401.6 541,401.6 541,399.1 540,399.1 540,401.4 539,401.4 539,403.2 538,403.2 538,401.2 537,401.2 537,405.3 536,405.3 536,405.4 535,405.4 535,408.9 534,408.9 534,403.6 533,403.6 533,413.4 532,413.4 532,416.2 531,416.2 531,424.4 530,424.4 530,435.2 529,435.2 529,399.0 528,399.0 528,398.2 527,398.2 527,399.7 526,399.7 526,400.5 525,400.5 525,398.2 524,398.2 524,400.9 523,400.9 523,400.8 522,400.8 522,398.6 521,398.6 521,400.5 520,400.5 520,398.8 519,398.8 519,398.4 518,398.4 518,397.7 517,397.7 517,400.6 516,400.6 516,399.4 515,399.4 515,398.9 514,398.9 514,415.8 513,415.8 513,418.6 512,418.6 512,416.5 511,416.5 511,427.7 510,427.7 510,419.5 509,419.5 509,422.3 508,422.3 508,418.5 507,418.5 507,412.8 506,412.8 506,410.7 505,410.7 505,405.5 504,405.5 504,399.5 503,399.5 503,399.8 502,399.8 502,398.3 501,398.3 501,401.1 500,401.1 500,398.0 499,398.0 499,405.4 498,405.4 498,410.9 497,410.9 497,403.5 496,403.5 496,408.1 495,408.1 495,403.5 494,403.5 494,413.5 493,413.5 493,411.5 492,411.5 492,424.4 491,424.4 491,435.7 490,435.7 490,399.3 489,399.3 489,397.4 488,397.4 488,400.9 487,400.9 487,400.5 486,400.5 486,399.9 485,399.9 485,400.4 484,400.4 484,399.9 483,399.9 483,399.6 482,399.6 482,401.2 481,401.2 481,397.4 480,397.4 480,399.5 479,399.5 479,398.8 478,398.8 478,400.1 477,400.1 477,397.5 476,397.5 476,397.8 475,397.8 475,408.5 474,408.5 474,413.9 473,413.9 473,414.7 472,414.7 472,418.2 471,418.2 471,420.1 470,420.1 470,427.1 469,427.1 469,420.0 468,420.0 468,409.7 467,409.7 467,413.0 466,413.0 466,406.4 465,406.4 465,399.9 464,399.9 464,402.9 463,402.9 463,400.5 462,400.5 462,406.3 461,406.3 461,398.1 460,398.1 460,401.4 459,401.4 459,400.0 458,400.0 458,408.6 457,408.6 457,412.8 456,412.8 456,411.9 455,411.9 455,419.9 454,419.9 454,422.1 453,422.1 453,431.2 452,431.2 452,398.6 451,398.6 451,400.7 450,400.7 450,397.4 449,397.4 449,397.4 448,397.4 448,398.5 447,398.5 447,398.5 446,398.5 446,398.2 445,398.2 445,401.2 444,401.2 444,404.3 443,404.3 443,410.5 442,410.5 442,408.8 441,408.8 441,412.4 440,412.4 440,405.1 439,405.1 439,419.5 438,419.5 438,418.7 437,418.7 437,409.3 436,409.3 436,415.7 435,415.7 435,416.1 434,416.1 434,413.1 433,413.1 433,403.3 432,403.3 432,405.5 431,405.5 431,404.9 430,404.9 430,401.9 429,401.9 429,400.9 428,400.9 428,403.3 427,403.3 427,400.3 426,400.3 426,407.6 425,407.6 425,408.3 424,408.3 424,402.6 423,402.6 423,411.8 422,411.8 422,417.4 421,417.4 421,418.7 420,418.7 420,420.4 419,420.4 419,431.2 418,431.2 418,399.2 417,399.2 417,398.9 416,398.9 416,399.2 415,399.2 415,400.9 414,400.9 414,398.3 413,398.3 413,400.6 412,400.6 412,398.9 411,398.9 411,400.3 410,400.3 410,397.8 409,397.8 409,399.0 408,399.0 408,400.9 407,400.9 407,400.1 406,400.1 406,415.9 405,415.9 405,415.3 404,415.3 404,418.7 403,418.7 403,420.3 402,420.3 402,432.1 401,432.1 401,416.6 400,416.6 400,419.8 399,419.8 399,427.1 398,427.1 398,436.8 397,436.8 397,406.2 396,406.2 396,398.6 395,398.6 395,400.8 394,400.8 394,397.6 393,397.6 393,399.0 392,399.0 392,400.7 391,400.7 391,398.3 390,398.3 390,400.3 389,400.3 389,400.7 388,400.7 388,397.7 387,397.7 387,399.3 386,399.3 386,400.7 385,400.7 385,400.2 384,400.2 384,398.6 383,398.6 383,408.5 382,408.5 382,418.7 381,418.7 381,423.0 380,423.0 380,424.8 379,424.8 379,425.1 378,425.1 378,423.4 377,423.4 377,418.5 376,418.5 376,416.4 375,416.4 375,407.3 374,407.3 374,404.9 373,404.9 373,400.1 372,400.1 372,402.7 371,402.7 371,401.0 370,401.0 370,400.4 369,400.4 369,405.2 368,405.2 368,399.9 367,399.9 367,401.6 366,401.6 366,404.3 365,404.3 365,412.5 364,412.5 364,406.6 363,406.6 363,414.6 362,414.6 362,420.6 361,420.6 361,424.4 360,424.4 360,435.8 359,435.8 359,398.4 358,398.4 358,398.3 357,398.3 357,398.6 356,398.6 356,398.4 355,398.4 355,397.5 354,397.5 354,400.2 353,400.2 353,400.2 352,400.2 352,398.9 351,398.9 351,400.5 350,400.5 350,398.7 349,398.7 349,399.4 348,399.4 348,399.4 347,399.4 347,399.0 346,399.0 346,400.6 345,400.6 345,406.7 344,406.7 344,416.2 343,416.2 343,418.8 342,418.8 342,424.9 341,424.9 341,429.5 340,429.5 340,422.6 339,422.6 339,424.0 338,424.0 338,413.5 337,413.5 337,412.3 336,412.3 336,404.8 335,404.8 335,399.6 334,399.6 334,402.5 333,402.5 333,403.1 332,403.1 332,402.8 331,402.8 331,400.0 330,400.0 330,406.3 329,406.3 329,407.8 328,407.8 328,402.1 327,402.1 327,402.8 326,402.8 326,403.4 325,403.4 325,402.3 324,402.3 324,412.8 323,412.8 323,417.1 322,417.1 322,424.4 321,424.4 321,436.9 320,436.9 320,398.1 319,398.1 319,398.2 318,398.2 318,401.1 317,401.1 317,399.3 316,399.3 316,399.2 315,399.2 315,399.2 314,399.2 314,398.5 313,398.5 313,398.4 312,398.4 312,398.3 311,398.3 311,397.7 310,397.7 310,398.9 309,398.9 309,400.6 308,400.6 308,397.7 307,397.7 307,397.5 306,397.5 306,400.9 305,400.9 305,399.4 304,399.4 304,406.7 303,406.7 303,421.2 302,421.2 302,413.3 301,413.3 301,427.6 300,427.6 300,420.7 299,420.7 299,417.0 298,417.0 298,417.3 297,417.3 297,411.2 296,411.2 296,406.8 295,406.8 295,406.0 294,406.0 294,399.1 293,399.1 293,400.2 292,400.2 292,398.4 291,398.4 291,400.8 290,400.8 290,398.7 289,398.7 289,399.9 288,399.9 288,400.0 287,400.0 287,399.7 286,399.7 286,401.4 285,401.4 285,405.1 284,405.1 284,401.0 283,401.0 283,401.9 282,401.9 282,413.7 281,413.7 281,422.3 280,422.3 280,400.2 279,400.2 279,398.8 278,398.8 278,400.9 277,400.9 277,400.5 276,400.5 276,401.2 275,401.2 275,400.9 274,400.9 274,398.5 273,398.5 273,400.7 272,400.7 272,398.1 271,398.1 271,399.5 270,399.5 270,397.9 269,397.9 269,400.5 268,400.5 268,401.2 267,401.2 267,401.0 266,401.0 266,398.6 265,398.6 265,398.3 264,398.3 264,398.8 263,398.8 263,397.8 262,397.8 262,400.0 261,400.0 261,398.5 260,398.5 260,400.4 259,400.4 259,394.5 258,394.5 258,394.5 257,394.5" fill="#3232c8"/><polygon points="257,393.0 258,393.0 258,393.0 259,393.0 259,390.6 260,390.6 260,390.6 261,390.6 261,390.6 262,390.6 262,390.6 263,390.6 263,390.6 264,390.6 264,390.6 265,390.6 265,390.6 266,390.6 266,390.6 267,390.6 267,390.6 268,390.6 268,390.6 269,390.6 269,390.6 270,390.6 270,390.6 271,390.6 271,390.6 272,390.6 272,390.6 273,390.6 273,390.6 274,390.6 274,390.6 275,390.6 275,390.6 276,390.6 276,390.6 277,390.6 277,390.6 278,390.6 278,390.6 279,390.6 279,390.6 280,390.6 280,387.2 281,387.2 281,387.7 282,387.7 282,389.4 283,389.4 283,389.6 284,389.6 284,389.7 285,389.7 285,389.9 286,389.9 286,390.0 287,390.0 287,390.1 288,390.1 288,390.2 289,390.2 289,390.3 290,390.3 290,390.4 291,390.4 291,390.4 292,390.4 292,390.5 293,390.5 293,390.6 294,390.6 294,387.2 295,387.2 295,384.7 296,384.7 296,383.2 297,383.2 297,382.0 298,382.0 298,380.9 299,380.9 299,380.1 300,380.1 300,380.9 301,380.9 301,382.0 302,382.0 302,383.2 303,383.2 303,384.7 304,384.7 304,390.6 305,390.6 305,390.6 306,390.6 306,390.6 307,390.6 307,390.6 308,390.6 308,390.6 309,390.6 309,390.6 310,390.6 310,390.6 311,390.6 311,390.6 312,390.6 312,390.6 313,390.6 313,390.6 314,390.6 314,390.6 315,390.6 315,390.6 316,390.6 316,390.6 317,390.6 317,390.6 318,390.6 318,390.6 319,390.6 319,390.6 320,390.6 320,383.8 321,383.8 321,384.7 322,384.7 322,388.6 323,388.6 323,388.8 324,388.8 324,389.0 325,389.0 325,389.2 326,389.2 326,389.4 327,389.4 327,389.6 328,389.6 328,389.7 329,389.7 329,389.8 330,389.8 330,390.0 331,390.0 331,390.1 332,390.1 332,390.2 333,390.2 333,390.3 334,390.3 334,390.3 335,390.3 335,387.3 336,387.3 336,384.9 337,384.9 337,383.4 338,383.4 338,382.2 339,382.2 339,381.2 340,381.2 340,380.3 341,380.3 341,381.2 342,381.2 342,382.2 343,382.2 343,383.4 344,383.4 344,384.9 345,384.9 345,390.6 346,390.6 346,390.6 347,390.6 347,390.6 348,390.6 348,390.6 349,390.6 349,390.6 350,390.6 350,390.6 351,390.6 351,390.6 352,390.6 352,390.6 353,390.6 353,390.6 354,390.6 354,390.6 355,390.6 355,390.6 356,390.6 356,390.6 357,390.6 357,390.6 358,390.6 358,390.6 359,390.6 359,383.8 360,383.8 360,384.7 361,384.7 361,388.6 362,388.6 362,388.8 363,388.8 363,389.0 364,389.0 364,389.2 365,389.2 365,389.4 366,389.4 366,389.6 367,389.6 367,389.7 368,389.7 368,389.8 369,389.8 369,390.0 370,390.0 370,390.1 371,390.1 371,390.2 372,390.2 372,390.3 373,390.3 373,387.6 374,387.6 374,385.4 375,385.4 375,384.0 376,384.0 376,382.9 377,382.9 377,382.0 378,382.0 378,381.2 379,381.2 379,382.0 380,382.0 380,382.9 381,382.9 381,384.0 382,384.0 382,385.4 383,385.4 383,390.6 384,390.6 384,390.6 385,390.6 385,390.6 386,390.6 386,390.6 387,390.6 387,390.6 388,390.6 388,390.6 389,390.6 389,390.6 390,390.6 390,390.6 391,390.6 391,390.6 392,390.6 392,390.6 393,390.6 393,390.6 394,390.6 394,390.6 395,390.6 395,390.6 396,390.6 396,387.2 397,387.2 397,382.9 398,382.9 398,383.2 399,383.2 399,382.0 400,382.0 400,380.9 401,380.9 401,380.1 402,380.1 402,380.9 403,380.9 403,382.0 404,382.0 404,383.2 405,383.2 405,384.7 406,384.7 406,390.6 407,390.6 407,390.6 408,390.6 408,390.6 409,390.6 409,390.6 410,390.6 410,390.6 411,390.6 411,390.6 412,390.6 412,390.6 413,390.6 413,390.6 414,390.6 414,390.6 415,390.6 415,390.6 416,390.6 416,390.6 417,390.6 417,390.6 418,390.6 418,385.1 419,385.1 419,385.8 420,385.8 420,388.7 421,388.7 421,388.9 422,388.9 422,389.0 423,389.0 423,389.1 424,389.1 424,389.2 425,389.2 425,389.3 426,389.3 426,389.4 427,389.4 427,389.5 428,389.5 428,389.6 429,389.6 429,389.7 430,389.7 430,388.6 431,388.6 431,387.5 432,387.5 432,386.5 433,386.5 433,385.6 434,385.6 434,384.9 435,384.9 435,384.3 436,384.3 436,384.0 437,384.0 437,383.9 438,383.9 438,384.0 439,384.0 439,384.3 440,384.3 440,384.9 441,384.9 441,385.6 442,385.6 442,386.5 443,386.5 443,387.5 444,387.5 444,388.6 445,388.6 445,389.8 446,389.8 446,390.6 447,390.6 447,390.6 448,390.6 448,390.6 449,390.6 449,390.6 450,390.6 450,390.6 451,390.6 451,390.6 452,390.6 452,384.5 453,384.5 453,385.3 454,385.3 454,388.8 455,388.8 455,389.0 456,389.0 456,389.2 457,389.2 457,389.4 458,389.4 458,389.5 459,389.5 459,389.7 460,389.7 460,389.8 461,389.8 461,389.9 462,389.9 462,390.0 463,390.0 463,390.1 464,390.1 464,390.2 465,390.2 465,387.3 466,387.3 466,384.9 467,384.9 467,383.4 468,383.4 468,382.2 469,382.2 469,381.2 470,381.2 470,380.3 471,380.3 471,381.2 472,381.2 472,382.2 473,382.2 473,383.4 474,383.4 474,384.9 475,384.9 475,390.6 476,390.6 476,390.6 477,390.6 477,390.6 478,390.6 478,390.6 479,390.6 479,390.6 480,390.6 480,390.6 481,390.6 481,390.6 482,390.6 482,390.6 483,390.6 483,390.6 484,390.6 484,390.6 485,390.6 485,390.6 486,390.6 486,390.6 487,390.6 487,390.6 488,390.6 488,390.6 489,390.6 489,390.6 490,390.6 490,383.8 491,383.8 491,384.7 492,384.7 492,388.6 493,388.6 493,388.8 494,388.8 494,389.0 495,389.0 495,389.2 496,389.2 496,389.4 497,389.4 497,389.6 498,389.6 498,389.7 499,389.7 499,389.8 500,389.8 500,390.0 501,390.0 501,390.1 502,390.1 502,390.2 503,390.2 503,390.3 504,390.3 504,387.3 505,387.3 505,384.9 506,384.9 506,383.4 507,383.4 507,382.2 508,382.2 508,381.2 509,381.2 509,380.3 510,380.3 510,381.2 511,381.2 511,382.2 512,382.2 512,383.4 513,383.4 513,384.9 514,384.9 514,390.6 515,390.6 515,390.6 516,390.6 516,390.6 517,390.6 517,390.6 518,390.6 518,390.6 519,390.6 519,390.6 520,390.6 520,390.6 521,390.6 521,390.6 522,390.6 522,390.6 523,390.6 523,390.6 524,390.6 524,390.6 525,390.6 525,390.6 526,390.6 526,390.6 527,390.6 527,390.6 528,390.6 528,390.6 529,390.6 529,383.8 530,383.8 530,384.7 531,384.7 531,388.6 532,388.6 532,388.8 533,388.8 533,389.0 534,389.0 534,389.2 535,389.2 535,389.4 536,389.4 536,389.6 537,389.6 537,389.7 538,389.7 538,389.8 539,389.8 539,390.0 540,390.0 540,390.1 541,390.1 541,390.2 542,390.2 542,390.3 543,390.3 543,387.3 544,387.3 544,384.9 545,384.9 545,383.4 546,383.4 546,382.2 547,382.2 547,381.2 548,381.2 548,380.3 549,380.3 549,381.2 550,381.2 550,382.2 551,382.2 551,383.4 552,383.4 552,384.9 553,384.9 553,390.6 554,390.6 554,390.6 555,390.6 555,390.6 556,390.6 556,390.6 557,390.6 557,390.6 558,390.6 558,390.6 559,390.6 559,390.6 560,390.6 560,390.6 561,390.6 561,390.6 562,390.6 562,390.6 563,390.6 563,390.6 564,390.6 564,390.6 565,390.6 565,390.6 566,390.6 566,390.6 567,390.6 567,383.8 568,383.8 568,384.7 569,384.7 569,388.6 570,388.6 570,388.8 571,388.8 571,389.0 572,389.0 572,389.2 573,389.2 573,389.4 574,389.4 574,389.6 575,389.6 575,389.7 576,389.7 576,389.8 577,389.8 577,390.0 578,390.0 578,390.1 579,390.1 579,390.2 580,390.2 580,390.3 581,390.3 581,390.3 582,390.3 582,390.6 583,390.6 583,390.6 584,390.6 584,390.6 585,390.6 585,386.9 586,386.9 586,384.3 587,384.3 587,382.7 588,382.7 588,381.4 589,381.4 589,380.3 590,380.3 590,379.3 591,379.3 591,380.3 592,380.3 592,381.4 593,381.4 593,382.7 594,382.7 594,384.3 595,384.3 595,390.6 596,390.6 596,390.6 597,390.6 597,390.6 598,390.6 598,390.6 599,390.6 599,390.6 600,390.6 600,390.6 601,390.6 601,390.6 602,390.6 602,390.6 603,390.6 603,390.6 604,390.6 604,390.6 605,390.6 605,390.6 606,390.6 606,390.6 607,390.6 607,390.6 608,390.6 608,390.6 609,390.6 609,384.5 610,384.5 610,385.3 611,385.3 611,388.6 612,388.6 612,388.7 613,388.7 613,388.8 614,388.8 614,389.0 615,389.0 615,389.1 616,389.1 616,389.2 617,389.2 617,389.3 618,389.3 618,389.4 619,389.4 619,389.5 620,389.5 620,389.6 621,389.6 621,388.8 622,388.8 622,387.7 623,387.7 623,386.7 624,386.7 624,385.8 625,385.8 625,385.1 626,385.1 626,384.5 627,384.5 627,384.1 628,384.1 628,383.9 629,383.9 629,383.9 630,383.9 630,384.1 631,384.1 631,384.5 632,384.5 632,385.1 633,385.1 633,385.8 634,385.8 634,386.7 635,386.7 635,387.7 636,387.7 636,388.8 637,388.8 637,389.9 638,389.9 638,390.6 639,390.6 639,390.6 640,390.6 640,390.6 641,390.6 641,386.9 642,386.9 642,384.3 643,384.3 643,382.7 644,382.7 644,381.4 645,381.4 645,380.3 646,380.3 646,379.3 647,379.3 647,380.3 648,380.3 648,381.4 649,381.4 649,382.7 650,382.7 650,384.3 651,384.3 651,390.6 652,390.6 652,390.6 653,390.6 653,390.6 654,390.6 654,390.6 655,390.6 655,390.6 656,390.6 656,390.6 657,390.6 657,390.6 658,390.6 658,390.6 659,390.6 659,390.6 660,390.6 660,390.6 661,390.6 661,390.6 662,390.6 662,390.6 663,390.6 663,390.6 664,390.6 664,384.5 665,384.5 665,385.3 666,385.3 666,388.6 667,388.6 667,388.7 668,388.7 668,388.8 669,388.8 669,389.0 670,389.0 670,389.1 671,389.1 671,389.2 672,389.2 672,389.3 673,389.3 673,389.4 674,389.4 674,389.5 675,389.5 675,389.6 676,389.6 676,388.8 677,388.8 677,387.7 678,387.7 678,386.7 679,386.7 679,385.8 680,385.8 680,385.1 681,385.1 681,384.5 682,384.5 682,384.1 683,384.1 683,383.9 684,383.9 684,383.9 685,383.9 685,384.1 686,384.1 686,384.5 687,384.5 687,385.1 688,385.1 688,385.8 689,385.8 689,386.7 690,386.7 690,387.7 691,387.7 691,388.8 692,388.8 692,389.9 693,389.9 693,390.6 694,390.6 694,390.6 695,390.6 695,387.2 696,387.2 696,384.7 697,384.7 697,383.2 698,383.2 698,382.0 699,382.0 699,380.9 700,380.9 700,380.1 701,380.1 701,380.9 702,380.9 702,382.0 703,382.0 703,383.2 704,383.2 704,384.7 705,384.7 705,390.6 706,390.6 706,390.6 707,390.6 707,390.6 708,390.6 708,390.6 709,390.6 709,390.6 710,390.6 710,390.6 711,390.6 711,390.6 712,390.6 712,390.6 713,390.6 713,390.6 714,390.6 714,390.6 715,390.6 715,390.6 716,390.6 716,390.6 717,390.6 717,390.6 718,390.6 718,390.6 719,390.6 719,390.6 720,390.6 720,384.0 721,384.0 721,384.9 722,384.9 722,388.6 723,388.6 723,388.9 724,388.9 724,389.1 725,389.1 725,389.3 726,389.3 726,389.4 727,389.4 727,389.6 728,389.6 728,389.7 729,389.7 729,389.9 730,389.9 730,390.0 731,390.0 731,390.1 732,390.1 732,390.2 733,390.2 733,390.3 734,390.3 734,387.3 735,387.3 735,384.9 736,384.9 736,383.4 737,383.4 737,382.2 738,382.2 738,381.2 739,381.2 739,380.3 740,380.3 740,381.2 741,381.2 741,382.2 742,382.2 742,383.4 743,383.4 743,384.9 744,384.9 744,390.6 745,390.6 745,390.6 746,390.6 746,390.6 747,390.6 747,390.6 748,390.6 748,390.6 749,390.6 749,390.6 750,390.6 750,390.6 751,390.6 751,390.6 752,390.6 752,390.6 753,390.6 753,390.6 754,390.6 754,390.6 755,390.6 755,390.6 756,390.6 756,390.6 757,390.6 757,390.6 758,390.6 758,390.6 759,390.6 759,383.8 760,383.8 760,384.7 761,384.7 761,388.6 762,388.6 762,388.8 763,388.8 763,389.0 764,389.0 764,389.2 765,389.2 765,389.4 766,389.4 766,389.6 767,389.6 767,389.7 768,389.7 768,389.8 769,389.8 769,390.0 770,390.0 770,390.1 771,390.1 771,390.2 772,390.2 772,390.3 773,390.3 773,387.3 774,387.3 774,384.9 775,384.9 775,383.4 776,383.4 776,382.2 777,382.2 777,381.2 778,381.2 778,380.3 779,380.3 779,381.2 780,381.2 780,382.2 781,382.2 781,383.4 782,383.4 782,384.9 783,384.9 783,390.6 784,390.6 784,390.6 785,390.6 785,390.6 786,390.6 786,390.6 787,390.6 787,390.6 788,390.6 788,390.6 789,390.6 789,390.6 790,390.6 790,390.6 791,390.6 791,390.6 792,390.6 792,390.6 793,390.6 793,390.6 794,390.6 794,390.6 795,390.6 795,390.6 796,390.6 796,390.6 797,390.6 797,383.8 798,383.8 798,384.7 799,384.7 799,388.6 800,388.6 800,388.8 801,388.8 801,389.0 802,389.0 802,389.2 803,389.2 803,389.4 804,389.4 804,389.6 805,389.6 805,389.7 806,389.7 806,389.8 807,389.8 807,390.0 808,390.0 808,390.1 809,390.1 809,390.2 810,390.2 810,390.3 811,390.3 811,390.3 812,390.3 812,387.3 813,387.3 813,384.9 814,384.9 814,383.4 815,383.4 815,382.2 816,382.2 816,381.2 817,381.2 817,380.3 818,380.3 818,381.2 819,381.2 819,382.2 820,382.2 820,383.4 821,383.4 821,384.9 822,384.9 822,390.6 823,390.6 823,390.6 824,390.6 824,390.6 825,390.6 825,390.6 826,390.6 826,390.6 827,390.6 827,390.6 828,390.6 828,390.6 829,390.6 829,390.6 830,390.6 830,390.6 831,390.6 831,390.6 832,390.6 832,390.6 833,390.6 833,390.6 834,390.6 834,390.6 835,390.6 835,390.6 836,390.6 836,383.8 837,383.8 837,384.7 838,384.7 838,388.6 839,388.6 839,388.8 840,388.8 840,389.0 841,389.0 841,389.2 842,389.2 842,389.4 843,389.4 843,389.6 844,389.6 844,389.7 845,389.7 845,389.8 846,389.8 846,390.0 847,390.0 847,390.1 848,390.1 848,390.2 849,390.2 849,390.3 850,390.3 850,387.3 851,387.3 851,384.9 852,384.9 852,383.4 853,383.4 853,382.2 854,382.2 854,381.2 855,381.2 855,380.3 856,380.3 856,381.2 857,381.2 857,382.2 858,382.2 858,383.4 859,383.4 859,384.9 860,384.9 860,390.6 861,390.6 861,390.6 862,390.6 862,390.6 863,390.6 863,390.6 864,390.6 864,390.6 865,390.6 865,390.6 866,390.6 866,390.6 867,390.6 867,390.6 868,390.6 868,390.6 869,390.6 869,390.6 870,390.6 870,390.6 871,390.6 871,390.6 872,390.6 872,390.6 873,390.6 873,390.6 874,390.6 874,383.8 875,383.8 875,403.2 874,403.2 874,396.4 873,396.4 873,396.4 872,396.4 872,396.4 871,396.4 871,396.4 870,396.4 870,396.4 869,396.4 869,396.4 868,396.4 868,396.4 867,396.4 867,396.4 866,396.4 866,396.4 865,396.4 865,396.4 864,396.4 864,396.4 863,396.4 863,396.4 862,396.4 862,396.4 861,396.4 861,396.4 860,396.4 860,402.1 859,402.1 859,403.6 858,403.6 858,404.8 857,404.8 857,405.8 856,405.8 856,406.7 855,406.7 855,405.8 854,405.8 854,404.8 853,404.8 853,403.6 852,403.6 852,402.1 851,402.1 851,399.7 850,399.7 850,396.7 849,396.7 849,396.8 848,396.8 848,396.9 847,396.9 847,397.0 846,397.0 846,397.2 845,397.2 845,397.3 844,397.3 844,397.4 843,397.4 843,397.6 842,397.6 842,397.8 841,397.8 841,398.0 840,398.0 840,398.2 839,398.2 839,398.4 838,398.4 838,402.3 837,402.3 837,403.2 836,403.2 836,396.4 835,396.4 835,396.4 834,396.4 834,396.4 833,396.4 833,396.4 832,396.4 832,396.4 831,396.4 831,396.4 830,396.4 830,396.4 829,396.4 829,396.4 828,396.4 828,396.4 827,396.4 827,396.4 826,396.4 826,396.4 825,396.4 825,396.4 824,396.4 824,396.4 823,396.4 823,396.4 822,396.4 822,402.1 821,402.1 821,403.6 820,403.6 820,404.8 819,404.8 819,405.8 818,405.8 818,406.7 817,406.7 817,405.8 816,405.8 816,404.8 815,404.8 815,403.6 814,403.6 814,402.1 813,402.1 813,399.7 812,399.7 812,396.7 811,396.7 811,396.7 810,396.7 810,396.8 809,396.8 809,396.9 808,396.9 808,397.0 807,397.0 807,397.2 806,397.2 806,397.3 805,397.3 805,397.4 804,397.4 804,397.6 803,397.6 803,397.8 802,397.8 802,398.0 801,398.0 801,398.2 800,398.2 800,398.4 799,398.4 799,402.3 798,402.3 798,403.2 797,403.2 797,396.4 796,396.4 796,396.4 795,396.4 795,396.4 794,396.4 794,396.4 793,396.4 793,396.4 792,396.4 792,396.4 791,396.4 791,396.4 790,396.4 790,396.4 789,396.4 789,396.4 788,396.4 788,396.4 787,396.4 787,396.4 786,396.4 786,396.4 785,396.4 785,396.4 784,396.4 784,396.4 783,396.4 783,402.1 782,402.1 782,403.6 781,403.6 781,404.8 780,404.8 780,405.8 779,405.8 779,406.7 778,406.7 778,405.8 777,405.8 777,404.8 776,404.8 776,403.6 775,403.6 775,402.1 774,402.1 774,399.7 773,399.7 773,396.7 772,396.7 772,396.8 771,396.8 771,396.9 770,396.9 770,397.0 769,397.0 769,397.2 768,397.2 768,397.3 767,397.3 767,397.4 766,397.4 766,397.6 765,397.6 765,397.8 764,397.8 764,398.0 763,398.0 763,398.2 762,398.2 762,398.4 761,398.4 761,402.3 760,402.3 760,403.2 759,403.2 759,396.4 758,396.4 758,396.4 757,396.4 757,396.4 756,396.4 756,396.4 755,396.4 755,396.4 754,396.4 754,396.4 753,396.4 753,396.4 752,396.4 752,396.4 751,396.4 751,396.4 750,396.4 750,396.4 749,396.4 749,396.4 748,396.4 748,396.4 747,396.4 747,396.4 746,396.4 746,396.4 745,396.4 745,396.4 744,396.4 744,402.1 743,402.1 743,403.6 742,403.6 742,404.8 741,404.8 741,405.8 740,405.8 740,406.7 739,406.7 739,405.8 738,405.8 738,404.8 737,404.8 737,403.6 736,403.6 736,402.1 735,402.1 735,399.7 734,399.7 734,396.7 733,396.7 733,396.8 732,396.8 732,396.9 731,396.9 731,397.0 730,397.0 730,397.1 729,397.1 729,397.3 728,397.3 728,397.4 727,397.4 727,397.6 726,397.6 726,397.7 725,397.7 725,397.9 724,397.9 724,398.1 723,398.1 723,398.4 722,398.4 722,402.1 721,402.1 721,403.0 720,403.0 720,396.4 719,396.4 719,396.4 718,396.4 718,396.4 717,396.4 717,396.4 716,396.4 716,396.4 715,396.4 715,396.4 714,396.4 714,396.4 713,396.4 713,396.4 712,396.4 712,396.4 711,396.4 711,396.4 710,396.4 710,396.4 709,396.4 709,396.4 708,396.4 708,396.4 707,396.4 707,396.4 706,396.4 706,396.4 705,396.4 705,402.3 704,402.3 704,403.8 703,403.8 703,405.0 702,405.0 702,406.1 701,406.1 701,406.9 700,406.9 700,406.1 699,406.1 699,405.0 698,405.0 698,403.8 697,403.8 697,402.3 696,402.3 696,399.8 695,399.8 695,396.4 694,396.4 694,396.4 693,396.4 693,397.1 692,397.1 692,398.2 691,398.2 691,399.3 690,399.3 690,400.3 689,400.3 689,401.2 688,401.2 688,401.9 687,401.9 687,402.5 686,402.5 686,402.9 685,402.9 685,403.1 684,403.1 684,403.1 683,403.1 683,402.9 682,402.9 682,402.5 681,402.5 681,401.9 680,401.9 680,401.2 679,401.2 679,400.3 678,400.3 678,399.3 677,399.3 677,398.2 676,398.2 676,397.4 675,397.4 675,397.5 674,397.5 674,397.6 673,397.6 673,397.7 672,397.7 672,397.8 671,397.8 671,397.9 670,397.9 670,398.0 669,398.0 669,398.2 668,398.2 668,398.3 667,398.3 667,398.4 666,398.4 666,401.7 665,401.7 665,402.5 664,402.5 664,396.4 663,396.4 663,396.4 662,396.4 662,396.4 661,396.4 661,396.4 660,396.4 660,396.4 659,396.4 659,396.4 658,396.4 658,396.4 657,396.4 657,396.4 656,396.4 656,396.4 655,396.4 655,396.4 654,396.4 654,396.4 653,396.4 653,396.4 652,396.4 652,396.4 651,396.4 651,402.7 650,402.7 650,404.3 649,404.3 649,405.6 648,405.6 648,406.7 647,406.7 647,407.7 646,407.7 646,406.7 645,406.7 645,405.6 644,405.6 644,404.3 643,404.3 643,402.7 642,402.7 642,400.1 641,400.1 641,396.4 640,396.4 640,396.4 639,396.4 639,396.4 638,396.4 638,397.1 637,397.1 637,398.2 636,398.2 636,399.3 635,399.3 635,400.3 634,400.3 634,401.2 633,401.2 633,401.9 632,401.9 632,402.5 631,402.5 631,402.9 630,402.9 630,403.1 629,403.1 629,403.1 628,403.1 628,402.9 627,402.9 627,402.5 626,402.5 626,401.9 625,401.9 625,401.2 624,401.2 624,400.3 623,400.3 623,399.3 622,399.3 622,398.2 621,398.2 621,397.4 620,397.4 620,397.5 619,397.5 619,397.6 618,397.6 618,397.7 617,397.7 617,397.8 616,397.8 616,397.9 615,397.9 615,398.0 614,398.0 614,398.2 613,398.2 613,398.3 612,398.3 612,398.4 611,398.4 611,401.7 610,401.7 610,402.5 609,402.5 609,396.4 608,396.4 608,396.4 607,396.4 607,396.4 606,396.4 606,396.4 605,396.4 605,396.4 604,396.4 604,396.4 603,396.4 603,396.4 602,396.4 602,396.4 601,396.4 601,396.4 600,396.4 600,396.4 599,396.4 599,396.4 598,396.4 598,396.4 597,396.4 597,396.4 596,396.4 596,396.4 595,396.4 595,402.7 594,402.7 594,404.3 593,404.3 593,405.6 592,405.6 592,406.7 591,406.7 591,407.7 590,407.7 590,406.7 589,406.7 589,405.6 588,405.6 588,404.3 587,404.3 587,402.7 586,402.7 586,400.1 585,400.1 585,396.4 584,396.4 584,396.4 583,396.4 583,396.4 582,396.4 582,396.7 581,396.7 581,396.7 580,396.7 580,396.8 579,396.8 579,396.9 578,396.9 578,397.0 577,397.0 577,397.2 576,397.2 576,397.3 575,397.3 575,397.4 574,397.4 574,397.6 573,397.6 573,397.8 572,397.8 572,398.0 571,398.0 571,398.2 570,398.2 570,398.4 569,398.4 569,402.3 568,402.3 568,403.2 567,403.2 567,396.4 566,396.4 566,396.4 565,396.4 565,396.4 564,396.4 564,396.4 563,396.4 563,396.4 562,396.4 562,396.4 561,396.4 561,396.4 560,396.4 560,396.4 559,396.4 559,396.4 558,396.4 558,396.4 557,396.4 557,396.4 556,396.4 556,396.4 555,396.4 555,396.4 554,396.4 554,396.4 553,396.4 553,402.1 552,402.1 552,403.6 551,403.6 551,404.8 550,404.8 550,405.8 549,405.8 549,406.7 548,406.7 548,405.8 547,405.8 547,404.8 546,404.8 546,403.6 545,403.6 545,402.1 544,402.1 544,399.7 543,399.7 543,396.7 542,396.7 542,396.8 541,396.8 541,396.9 540,396.9 540,397.0 539,397.0 539,397.2 538,397.2 538,397.3 537,397.3 537,397.4 536,397.4 536,397.6 535,397.6 535,397.8 534,397.8 534,398.0 533,398.0 533,398.2 532,398.2 532,398.4 531,398.4 531,402.3 530,402.3 530,403.2 529,403.2 529,396.4 528,396.4 528,396.4 527,396.4 527,396.4 526,396.4 526,396.4 525,396.4 525,396.4 524,396.4 524,396.4 523,396.4 523,396.4 522,396.4 522,396.4 521,396.4 521,396.4 520,396.4 520,396.4 519,396.4 519,396.4 518,396.4 518,396.4 517,396.4 517,396.4 516,396.4 516,396.4 515,396.4 515,396.4 514,396.4 514,402.1 513,402.1 513,403.6 512,403.6 512,404.8 511,404.8 511,405.8 510,405.8 510,406.7 509,406.7 509,405.8 508,405.8 508,404.8 507,404.8 507,403.6 506,403.6 506,402.1 505,402.1 505,399.7 504,399.7 504,396.7 503,396.7 503,396.8 502,396.8 502,396.9 501,396.9 501,397.0 500,397.0 500,397.2 499,397.2 499,397.3 498,397.3 498,397.4 497,397.4 497,397.6 496,397.6 496,397.8 495,397.8 495,398.0 494,398.0 494,398.2 493,398.2 493,398.4 492,398.4 492,402.3 491,402.3 491,403.2 490,403.2 490,396.4 489,396.4 489,396.4 488,396.4 488,396.4 487,396.4 487,396.4 486,396.4 486,396.4 485,396.4 485,396.4 484,396.4 484,396.4 483,396.4 483,396.4 482,396.4 482,396.4 481,396.4 481,396.4 480,396.4 480,396.4 479,396.4 479,396.4 478,396.4 478,396.4 477,396.4 477,396.4 476,396.4 476,396.4 475,396.4 475,402.1 474,402.1 474,403.6 473,403.6 473,404.8 472,404.8 472,405.8 471,405.8 471,406.7 470,406.7 470,405.8 469,405.8 469,404.8 468,404.8 468,403.6 467,403.6 467,402.1 466,402.1 466,399.7 465,399.7 465,396.8 464,396.8 464,396.9 463,396.9 463,397.0 462,397.0 462,397.1 461,397.1 461,397.2 460,397.2 460,397.3 459,397.3 459,397.5 458,397.5 458,397.6 457,397.6 457,397.8 456,397.8 456,398.0 455,398.0 455,398.2 454,398.2 454,401.7 453,401.7 453,402.5 452,402.5 452,396.4 451,396.4 451,396.4 450,396.4 450,396.4 449,396.4 449,396.4 448,396.4 448,396.4 447,396.4 447,396.4 446,396.4 446,397.2 445,397.2 445,398.4 444,398.4 444,399.5 443,399.5 443,400.5 442,400.5 442,401.4 441,401.4 441,402.1 440,402.1 440,402.7 439,402.7 439,403.0 438,403.0 438,403.1 437,403.1 437,403.0 436,403.0 436,402.7 435,402.7 435,402.1 434,402.1 434,401.4 433,401.4 433,400.5 432,400.5 432,399.5 431,399.5 431,398.4 430,398.4 430,397.3 429,397.3 429,397.4 428,397.4 428,397.5 427,397.5 427,397.6 426,397.6 426,397.7 425,397.7 425,397.8 424,397.8 424,397.9 423,397.9 423,398.0 422,398.0 422,398.1 421,398.1 421,398.3 420,398.3 420,401.2 419,401.2 419,401.9 418,401.9 418,396.4 417,396.4 417,396.4 416,396.4 416,396.4 415,396.4 415,396.4 414,396.4 414,396.4 413,396.4 413,396.4 412,396.4 412,396.4 411,396.4 411,396.4 410,396.4 410,396.4 409,396.4 409,396.4 408,396.4 408,396.4 407,396.4 407,396.4 406,396.4 406,402.3 405,402.3 405,403.8 404,403.8 404,405.0 403,405.0 403,406.1 402,406.1 402,406.9 401,406.9 401,406.1 400,406.1 400,405.0 399,405.0 399,403.8 398,403.8 398,404.1 397,404.1 397,399.8 396,399.8 396,396.4 395,396.4 395,396.4 394,396.4 394,396.4 393,396.4 393,396.4 392,396.4 392,396.4 391,396.4 391,396.4 390,396.4 390,396.4 389,396.4 389,396.4 388,396.4 388,396.4 387,396.4 387,396.4 386,396.4 386,396.4 385,396.4 385,396.4 384,396.4 384,396.4 383,396.4 383,401.6 382,401.6 382,403.0 381,403.0 381,404.1 380,404.1 380,405.0 379,405.0 379,405.8 378,405.8 378,405.0 377,405.0 377,404.1 376,404.1 376,403.0 375,403.0 375,401.6 374,401.6 374,399.4 373,399.4 373,396.7 372,396.7 372,396.8 371,396.8 371,396.9 370,396.9 370,397.0 369,397.0 369,397.2 368,397.2 368,397.3 367,397.3 367,397.4 366,397.4 366,397.6 365,397.6 365,397.8 364,397.8 364,398.0 363,398.0 363,398.2 362,398.2 362,398.4 361,398.4 361,402.3 360,402.3 360,403.2 359,403.2 359,396.4 358,396.4 358,396.4 357,396.4 357,396.4 356,396.4 356,396.4 355,396.4 355,396.4 354,396.4 354,396.4 353,396.4 353,396.4 352,396.4 352,396.4 351,396.4 351,396.4 350,396.4 350,396.4 349,396.4 349,396.4 348,396.4 348,396.4 347,396.4 347,396.4 346,396.4 346,396.4 345,396.4 345,402.1 344,402.1 344,403.6 343,403.6 343,404.8 342,404.8 342,405.8 341,405.8 341,406.7 340,406.7 340,405.8 339,405.8 339,404.8 338,404.8 338,403.6 337,403.6 337,402.1 336,402.1 336,399.7 335,399.7 335,396.7 334,396.7 334,396.7 333,396.7 333,396.8 332,396.8 332,396.9 331,396.9 331,397.0 330,397.0 330,397.2 329,397.2 329,397.3 328,397.3 328,397.4 327,397.4 327,397.6 326,397.6 326,397.8 325,397.8 325,398.0 324,398.0 324,398.2 323,398.2 323,398.4 322,398.4 322,402.3 321,402.3 321,403.2 320,403.2 320,396.4 319,396.4 319,396.4 318,396.4 318,396.4 317,396.4 317,396.4 316,396.4 316,396.4 315,396.4 315,396.4 314,396.4 314,396.4 313,396.4 313,396.4 312,396.4 312,396.4 311,396.4 311,396.4 310,396.4 310,396.4 309,396.4 309,396.4 308,396.4 308,396.4 307,396.4 307,396.4 306,396.4 306,396.4 305,396.4 305,396.4 304,396.4 304,402.3 303,402.3 303,403.8 302,403.8 302,405.0 301,405.0 301,406.1 300,406.1 300,406.9 299,406.9 299,406.1 298,406.1 298,405.0 297,405.0 297,403.8 296,403.8 296,402.3 295,402.3 295,399.8 294,399.8 294,396.4 293,396.4 293,396.5 292,396.5 292,396.6 291,396.6 291,396.6 290,396.6 290,396.7 289,396.7 289,396.8 288,396.8 288,396.9 287,396.9 287,397.0 286,397.0 286,397.1 285,397.1 285,397.3 284,397.3 284,397.4 283,397.4 283,397.6 282,397.6 282,399.3 281,399.3 281,399.8 280,399.8 280,396.4 279,396.4 279,396.4 278,396.4 278,396.4 277,396.4 277,396.4 276,396.4 276,396.4 275,396.4 275,396.4 274,396.4 274,396.4 273,396.4 273,396.4 272,396.4 272,396.4 271,396.4 271,396.4 270,396.4 270,396.4 269,396.4 269,396.4 268,396.4 268,396.4 267,396.4 267,396.4 266,396.4 266,396.4 265,396.4 265,396.4 264,396.4 264,396.4 263,396.4 263,396.4 262,396.4 262,396.4 261,396.4 261,396.4 260,396.4 260,396.4 259,396.4 259,394.0 258,394.0 258,394.0 257,394.0" fill="#6464dc"/><rect x="335" y="345" width="2" height="97" fill="#202020"/><rect x="395" y="345" width="2" height="97" fill="#808080"/><rect x="584" y="345" width="3" height="97" fill="#a8a8a8"/><rect x="585" y="345" width="1" height="97" fill="#f0f0f0"/><rect x="639" y="345" width="3" height="97" fill="#a8a8a8"/><rect x="640" y="345" width="1" height="97" fill="#f0f0f0"/><rect x="133" y="449" width="742" height="106" fill="#c4c4c4"/><polygon points="133,502.0 134,502.0 134,502.0 135,502.0 135,502.0 136,502.0 136,502.0 137,502.0 137,502.0 138,502.0 138,502.0 139,502.0 139,502.0 140,502.0 140,502.0 141,502.0 141,502.0 142,502.0 142,502.0 143,502.0 143,502.0 144,502.0 144,502.0 145,502.0 145,502.0 146,502.0 146,502.0 147,502.0 147,502.0 148,502.0 148,502.0 149,502.0 149,502.0 150,502.0 150,502.0 151,502.0 151,502.0 152,502.0 152,502.0 153,502.0 153,502.0 154,502.0 154,502.0 155,502.0 155,502.0 156,502.0 156,502.0 157,502.0 157,502.0 158,502.0 158,502.0 159,502.0 159,502.0 160,502.0 160,502.0 161,502.0 161,502.0 162,502.0 162,502.0 163,502.0 163,502.0 164,502.0 164,502.0 165,502.0 165,502.0 166,502.0 166,502.0 167,502.0 167,502.0 168,502.0 168,502.0 169,502.0 169,502.0 170,502.0 170,502.0 171,502.0 171,502.0 172,502.0 172,502.0 173,502.0 173,502.0 174,502.0 174,502.0 175,502.0 175,502.0 176,502.0 176,502.0 177,502.0 177,502.0 178,502.0 178,502.0 179,502.0 179,502.0 180,502.0 180,502.0 181,502.0 181,502.0 182,502.0 182,502.0 183,502.0 183,502.0 184,502.0 184,502.0 185,502.0 185,502.0 186,502.0 186,502.0 187,502.0 187,502.0 188,502.0 188,502.0 189,502.0 189,502.0 190,502.0 190,502.0 191,502.0 191,502.0 192,502.0 192,502.0 193,502.0 193,502.0 194,502.0 194,502.0 195,502.0 195,502.0 196,502.0 196,502.0 197,502.0 197,502.0 198,502.0 198,502.0 199,502.0 199,502.0 200,502.0 200,502.0 201,502.0 201,502.0 202,502.0 202,502.0 203,502.0 203,502.0 204,502.0 204,502.0 205,502.0 205,502.0 206,502.0 206,502.0 207,502.0 207,502.0 208,502.0 208,502.0 209,502.0 209,502.0 210,502.0 210,502.0 211,502.0 211,502.0 212,502.0 212,502.0 213,502.0 213,502.0 214,502.0 214,502.0 215,502.0 215,502.0 216,502.0 216,502.0 217,502.0 217,502.0 218,502.0 218,502.0 219,502.0 219,502.0 220,502.0 220,502.0 221,502.0 221,502.0 222,502.0 222,502.0 223,502.0 223,502.0 224,502.0 224,502.0 225,502.0 225,502.0 226,502.0 226,502.0 227,502.0 227,502.0 228,502.0 228,502.0 229,502.0 229,502.0 230,502.0 230,502.0 231,502.0 231,502.0 232,502.0 232,502.0 233,502.0 233,502.0 234,502.0 234,502.0 235,502.0 235,502.0 236,502.0 236,502.0 237,502.0 237,502.0 238,502.0 238,502.0 239,502.0 239,502.0 240,502.0 240,502.0 241,502.0 241,502.0 242,502.0 242,502.0 243,502.0 243,502.0 244,502.0 244,502.0 245,502.0 245,502.0 246,502.0 246,502.0 247,502.0 247,502.0 248,502.0 248,502.0 249,502.0 249,502.0 250,502.0 250,502.0 251,502.0 251,502.0 252,502.0 252,502.0 253,502.0 253,502.0 254,502.0 254,502.0 255,502.0 255,502.0 256,502.0 256,502.0 257,502.0 257,502.0 258,502.0 258,502.0 259,502.0 259,502.0 260,502.0 260,502.0 261,502.0 261,502.0 262,502.0 262,502.0 263,502.0 263,502.0 264,502.0 264,502.0 265,502.0 265,502.1 266,502.1 266,502.0 267,502.0 267,502.0 268,502.0 268,501.9 269,501.9 269,501.4 270,501.4 270,501.6 271,501.6 271,501.6 272,501.6 272,501.3 273,501.3 273,501.4 274,501.4 274,500.7 275,500.7 275,501.1 276,501.1 276,501.3 277,501.3 277,500.9 278,500.9 278,500.2 279,500.2 279,500.4 280,500.4 280,500.5 281,500.5 281,501.0 282,501.0 282,500.4 283,500.4 283,500.2 284,500.2 284,498.9 285,498.9 285,500.1 286,500.1 286,500.6 287,500.6 287,499.7 288,499.7 288,499.4 289,499.4 289,500.4 290,500.4 290,500.1 291,500.1 291,497.5 292,497.5 292,499.3 293,499.3 293,500.1 294,500.1 294,499.0 295,499.0 295,498.4 296,498.4 296,498.9 297,498.9 297,498.9 298,498.9 298,498.4 299,498.4 299,497.9 300,497.9 300,496.4 301,496.4 301,496.2 302,496.2 302,496.5 303,496.5 303,498.0 304,498.0 304,497.8 305,497.8 305,497.6 306,497.6 306,494.4 307,494.4 307,498.1 308,498.1 308,498.1 309,498.1 309,498.3 310,498.3 310,496.5 311,496.5 311,498.8 312,498.8 312,498.8 313,498.8 313,497.7 314,497.7 314,497.1 315,497.1 315,498.4 316,498.4 316,495.9 317,495.9 317,493.2 318,493.2 318,497.9 319,497.9 319,497.4 320,497.4 320,496.3 321,496.3 321,498.3 322,498.3 322,497.4 323,497.4 323,496.9 324,496.9 324,496.5 325,496.5 325,497.0 326,497.0 326,496.4 327,496.4 327,495.8 328,495.8 328,497.3 329,497.3 329,497.0 330,497.0 330,497.6 331,497.6 331,496.5 332,496.5 332,496.6 333,496.6 333,495.5 334,495.5 334,496.4 335,496.4 335,495.7 336,495.7 336,496.7 337,496.7 337,495.4 338,495.4 338,497.2 339,497.2 339,495.7 340,495.7 340,497.8 341,497.8 341,495.3 342,495.3 342,496.7 343,496.7 343,493.1 344,493.1 344,492.3 345,492.3 345,497.0 346,497.0 346,495.6 347,495.6 347,493.2 348,493.2 348,497.8 349,497.8 349,496.4 350,496.4 350,496.9 351,496.9 351,495.8 352,495.8 352,497.6 353,497.6 353,496.7 354,496.7 354,497.4 355,497.4 355,496.4 356,496.4 356,498.1 357,498.1 357,496.6 358,496.6 358,498.0 359,498.0 359,498.2 360,498.2 360,495.6 361,495.6 361,494.7 362,494.7 362,494.8 363,494.8 363,497.2 364,497.2 364,495.2 365,495.2 365,493.7 366,493.7 366,497.5 367,497.5 367,497.6 368,497.6 368,497.7 369,497.7 369,496.8 370,496.8 370,497.5 371,497.5 371,493.6 372,493.6 372,494.6 373,494.6 373,491.9 374,491.9 374,493.0 375,493.0 375,494.0 376,494.0 376,495.7 377,495.7 377,493.7 378,493.7 378,494.7 379,494.7 379,493.6 380,493.6 380,494.8 381,494.8 381,497.0 382,497.0 382,491.7 383,491.7 383,495.9 384,495.9 384,493.5 385,493.5 385,496.3 386,496.3 386,494.3 387,494.3 387,494.0 388,494.0 388,493.0 389,493.0 389,497.0 390,497.0 390,495.3 391,495.3 391,494.7 392,494.7 392,491.7 393,491.7 393,495.1 394,495.1 394,493.4 395,493.4 395,491.1 396,491.1 396,496.3 397,496.3 397,495.4 398,495.4 398,496.1 399,496.1 399,497.0 400,497.0 400,494.5 401,494.5 401,492.3 402,492.3 402,493.3 403,493.3 403,493.1 404,493.1 404,494.2 405,494.2 405,490.3 406,490.3 406,492.8 407,492.8 407,495.2 408,495.2 408,489.7 409,489.7 409,495.2 410,495.2 410,496.2 411,496.2 411,494.8 412,494.8 412,494.8 413,494.8 413,491.9 414,491.9 414,496.6 415,496.6 415,497.2 416,497.2 416,492.6 417,492.6 417,495.2 418,495.2 418,495.1 419,495.1 419,492.6 420,492.6 420,493.5 421,493.5 421,496.4 422,496.4 422,494.1 423,494.1 423,494.0 424,494.0 424,495.1 425,495.1 425,489.4 426,489.4 426,496.5 427,496.5 427,494.4 428,494.4 428,494.1 429,494.1 429,494.5 430,494.5 430,491.8 431,491.8 431,491.7 432,491.7 432,495.3 433,495.3 433,494.9 434,494.9 434,491.8 435,491.8 435,492.8 436,492.8 436,492.7 437,492.7 437,491.2 438,491.2 438,490.1 439,490.1 439,493.0 440,493.0 440,491.3 441,491.3 441,491.3 442,491.3 442,495.8 443,495.8 443,493.5 444,493.5 444,494.8 445,494.8 445,494.3 446,494.3 446,493.6 447,493.6 447,496.5 448,496.5 448,492.1 449,492.1 449,493.9 450,493.9 450,491.7 451,491.7 451,492.8 452,492.8 452,494.3 453,494.3 453,491.3 454,491.3 454,495.0 455,495.0 455,494.2 456,494.2 456,490.5 457,490.5 457,490.3 458,490.3 458,495.2 459,495.2 459,491.6 460,491.6 460,494.4 461,494.4 461,494.4 462,494.4 462,494.4 463,494.4 463,492.7 464,492.7 464,487.9 465,487.9 465,490.4 466,490.4 466,493.3 467,493.3 467,484.6 468,484.6 468,493.0 469,493.0 469,492.3 470,492.3 470,486.3 471,486.3 471,492.7 472,492.7 472,490.0 473,490.0 473,493.4 474,493.4 474,490.5 475,490.5 475,491.3 476,491.3 476,494.1 477,494.1 477,495.4 478,495.4 478,491.9 479,491.9 479,494.3 480,494.3 480,493.4 481,493.4 481,495.2 482,495.2 482,492.2 483,492.2 483,492.7 484,492.7 484,492.9 485,492.9 485,493.5 486,493.5 486,492.8 487,492.8 487,492.0 488,492.0 488,491.5 489,491.5 489,491.1 490,491.1 490,496.0 491,496.0 491,493.7 492,493.7 492,494.1 493,494.1 493,495.1 494,495.1 494,489.8 495,489.8 495,490.4 496,490.4 496,489.9 497,489.9 497,493.6 498,493.6 498,490.1 499,490.1 499,486.3 500,486.3 500,491.2 501,491.2 501,487.5 502,487.5 502,487.4 503,487.4 503,492.1 504,492.1 504,493.5 505,493.5 505,492.8 506,492.8 506,494.4 507,494.4 507,492.9 508,492.9 508,494.4 509,494.4 509,493.8 510,493.8 510,493.3 511,493.3 511,491.2 512,491.2 512,488.1 513,488.1 513,488.9 514,488.9 514,490.1 515,490.1 515,491.0 516,491.0 516,491.8 517,491.8 517,490.7 518,490.7 518,493.8 519,493.8 519,488.2 520,488.2 520,490.0 521,490.0 521,488.6 522,488.6 522,492.9 523,492.9 523,493.7 524,493.7 524,491.7 525,491.7 525,485.0 526,485.0 526,494.3 527,494.3 527,491.1 528,491.1 528,495.2 529,495.2 529,493.8 530,493.8 530,487.7 531,487.7 531,491.2 532,491.2 532,491.9 533,491.9 533,494.9 534,494.9 534,489.2 535,489.2 535,489.3 536,489.3 536,489.4 537,489.4 537,490.2 538,490.2 538,493.4 539,493.4 539,489.8 540,489.8 540,487.3 541,487.3 541,490.4 542,490.4 542,491.3 543,491.3 543,493.1 544,493.1 544,495.2 545,495.2 545,493.1 546,493.1 546,493.5 547,493.5 547,494.7 548,494.7 548,492.5 549,492.5 549,490.2 550,490.2 550,491.9 551,491.9 551,493.9 552,493.9 552,485.9 553,485.9 553,492.1 554,492.1 554,491.2 555,491.2 555,492.1 556,492.1 556,492.4 557,492.4 557,483.5 558,483.5 558,487.5 559,487.5 559,494.3 560,494.3 560,493.7 561,493.7 561,488.8 562,488.8 562,494.2 563,494.2 563,492.4 564,492.4 564,491.4 565,491.4 565,491.2 566,491.2 566,493.8 567,493.8 567,494.7 568,494.7 568,492.2 569,492.2 569,493.7 570,493.7 570,494.7 571,494.7 571,495.1 572,495.1 572,496.2 573,496.2 573,486.1 574,486.1 574,492.7 575,492.7 575,492.2 576,492.2 576,491.9 577,491.9 577,495.7 578,495.7 578,493.2 579,493.2 579,492.0 580,492.0 580,492.3 581,492.3 581,488.8 582,488.8 582,494.3 583,494.3 583,492.4 584,492.4 584,495.9 585,495.9 585,494.3 586,494.3 586,488.7 587,488.7 587,479.7 588,479.7 588,488.8 589,488.8 589,492.1 590,492.1 590,484.3 591,484.3 591,493.2 592,493.2 592,488.4 593,488.4 593,492.2 594,492.2 594,483.9 595,483.9 595,493.0 596,493.0 596,491.6 597,491.6 597,486.1 598,486.1 598,490.1 599,490.1 599,492.4 600,492.4 600,486.2 601,486.2 601,494.5 602,494.5 602,489.3 603,489.3 603,493.3 604,493.3 604,488.6 605,488.6 605,495.4 606,495.4 606,493.6 607,493.6 607,483.2 608,483.2 608,488.8 609,488.8 609,484.0 610,484.0 610,491.9 611,491.9 611,491.5 612,491.5 612,492.4 613,492.4 613,494.3 614,494.3 614,484.0 615,484.0 615,490.1 616,490.1 616,490.7 617,490.7 617,492.9 618,492.9 618,491.0 619,491.0 619,494.9 620,494.9 620,494.5 621,494.5 621,493.5 622,493.5 622,494.9 623,494.9 623,490.4 624,490.4 624,492.6 625,492.6 625,492.3 626,492.3 626,493.4 627,493.4 627,496.1 628,496.1 628,488.4 629,488.4 629,485.1 630,485.1 630,493.8 631,493.8 631,491.2 632,491.2 632,490.5 633,490.5 633,492.0 634,492.0 634,492.0 635,492.0 635,492.5 636,492.5 636,492.9 637,492.9 637,485.3 638,485.3 638,491.6 639,491.6 639,485.8 640,485.8 640,488.9 641,488.9 641,489.3 642,489.3 642,489.2 643,489.2 643,492.8 644,492.8 644,492.5 645,492.5 645,493.4 646,493.4 646,493.8 647,493.8 647,492.7 648,492.7 648,491.9 649,491.9 649,494.8 650,494.8 650,492.8 651,492.8 651,494.1 652,494.1 652,493.4 653,493.4 653,482.9 654,482.9 654,490.7 655,490.7 655,493.3 656,493.3 656,491.6 657,491.6 657,491.9 658,491.9 658,489.9 659,489.9 659,488.5 660,488.5 660,493.6 661,493.6 661,491.7 662,491.7 662,493.0 663,493.0 663,489.8 664,489.8 664,490.3 665,490.3 665,491.9 666,491.9 666,487.6 667,487.6 667,493.2 668,493.2 668,493.6 669,493.6 669,485.7 670,485.7 670,493.9 671,493.9 671,487.1 672,487.1 672,493.3 673,493.3 673,494.8 674,494.8 674,495.4 675,495.4 675,489.5 676,489.5 676,492.1 677,492.1 677,495.0 678,495.0 678,494.9 679,494.9 679,488.5 680,488.5 680,489.8 681,489.8 681,492.8 682,492.8 682,494.2 683,494.2 683,487.7 684,487.7 684,494.7 685,494.7 685,492.3 686,492.3 686,478.6 687,478.6 687,488.2 688,488.2 688,492.5 689,492.5 689,491.5 690,491.5 690,492.6 691,492.6 691,491.5 692,491.5 692,491.8 693,491.8 693,491.4 694,491.4 694,490.5 695,490.5 695,492.0 696,492.0 696,491.0 697,491.0 697,490.0 698,490.0 698,491.6 699,491.6 699,494.1 700,494.1 700,493.8 701,493.8 701,491.8 702,491.8 702,492.8 703,492.8 703,491.3 704,491.3 704,488.3 705,488.3 705,493.0 706,493.0 706,492.2 707,492.2 707,494.9 708,494.9 708,491.8 709,491.8 709,492.2 710,492.2 710,480.6 711,480.6 711,489.3 712,489.3 712,494.9 713,494.9 713,493.6 714,493.6 714,494.9 715,494.9 715,491.7 716,491.7 716,492.4 717,492.4 717,492.0 718,492.0 718,490.0 719,490.0 719,488.0 720,488.0 720,495.6 721,495.6 721,494.5 722,494.5 722,494.1 723,494.1 723,491.0 724,491.0 724,492.6 725,492.6 725,479.7 726,479.7 726,484.2 727,484.2 727,491.1 728,491.1 728,489.7 729,489.7 729,491.9 730,491.9 730,491.0 731,491.0 731,490.8 732,490.8 732,494.8 733,494.8 733,493.3 734,493.3 734,493.5 735,493.5 735,491.5 736,491.5 736,479.8 737,479.8 737,488.7 738,488.7 738,493.4 739,493.4 739,485.8 740,485.8 740,493.4 741,493.4 741,490.7 742,490.7 742,490.8 743,490.8 743,493.9 744,493.9 744,492.9 745,492.9 745,492.8 746,492.8 746,494.3 747,494.3 747,492.9 748,492.9 748,488.7 749,488.7 749,494.0 750,494.0 750,486.5 751,486.5 751,491.9 752,491.9 752,489.5 753,489.5 753,493.9 754,493.9 754,490.9 755,490.9 755,487.2 756,487.2 756,492.0 757,492.0 757,492.0 758,492.0 758,491.4 759,491.4 759,493.8 760,493.8 760,490.9 761,490.9 761,494.4 762,494.4 762,494.8 763,494.8 763,493.9 764,493.9 764,491.7 765,491.7 765,489.4 766,489.4 766,488.4 767,488.4 767,490.1 768,490.1 768,492.0 769,492.0 769,491.9 770,491.9 770,493.6 771,493.6 771,492.3 772,492.3 772,476.3 773,476.3 773,486.8 774,486.8 774,487.0 775,487.0 775,491.9 776,491.9 776,493.8 777,493.8 777,493.7 778,493.7 778,493.7 779,493.7 779,494.0 780,494.0 780,494.5 781,494.5 781,493.6 782,493.6 782,477.6 783,477.6 783,487.6 784,487.6 784,490.3 785,490.3 785,492.5 786,492.5 786,491.2 787,491.2 787,488.9 788,488.9 788,484.9 789,484.9 789,489.5 790,489.5 790,490.2 791,490.2 791,491.4 792,491.4 792,490.3 793,490.3 793,491.6 794,491.6 794,463.3 795,463.3 795,494.3 796,494.3 796,495.0 797,495.0 797,484.5 798,484.5 798,490.3 799,490.3 799,494.6 800,494.6 800,495.0 801,495.0 801,491.6 802,491.6 802,492.1 803,492.1 803,495.0 804,495.0 804,492.2 805,492.2 805,495.0 806,495.0 806,484.8 807,484.8 807,491.9 808,491.9 808,491.7 809,491.7 809,492.0 810,492.0 810,491.3 811,491.3 811,491.5 812,491.5 812,494.1 813,494.1 813,494.4 814,494.4 814,493.4 815,493.4 815,492.5 816,492.5 816,490.6 817,490.6 817,495.3 818,495.3 818,495.2 819,495.2 819,488.6 820,488.6 820,478.9 821,478.9 821,488.4 822,488.4 822,487.9 823,487.9 823,491.1 824,491.1 824,486.9 825,486.9 825,491.9 826,491.9 826,492.2 827,492.2 827,490.9 828,490.9 828,493.2 829,493.2 829,484.4 830,484.4 830,491.6 831,491.6 831,487.0 832,487.0 832,488.8 833,488.8 833,490.0 834,490.0 834,491.6 835,491.6 835,489.1 836,489.1 836,488.8 837,488.8 837,488.8 838,488.8 838,491.6 839,491.6 839,491.0 840,491.0 840,489.5 841,489.5 841,490.9 842,490.9 842,494.0 843,494.0 843,494.3 844,494.3 844,490.6 845,490.6 845,476.4 846,476.4 846,486.8 847,486.8 847,493.9 848,493.9 848,493.7 849,493.7 849,494.3 850,494.3 850,492.3 851,492.3 851,485.6 852,485.6 852,488.7 853,488.7 853,488.6 854,488.6 854,489.3 855,489.3 855,483.6 856,483.6 856,493.6 857,493.6 857,490.8 858,490.8 858,490.3 859,490.3 859,488.0 860,488.0 860,492.9 861,492.9 861,489.2 862,489.2 862,489.7 863,489.7 863,489.6 864,489.6 864,493.2 865,493.2 865,485.8 866,485.8 866,494.5 867,494.5 867,494.6 868,494.6 868,493.6 869,493.6 869,491.9 870,491.9 870,491.7 871,491.7 871,472.8 872,472.8 872,484.7 873,484.7 873,482.4 874,482.4 874,473.4 875,473.4 875,534.3 874,534.3 874,518.0 873,518.0 873,515.0 872,515.0 872,523.0 871,523.0 871,512.4 870,512.4 870,512.7 869,512.7 869,514.5 868,514.5 868,511.0 867,511.0 867,512.2 866,512.2 866,515.9 865,515.9 865,514.0 864,514.0 864,512.5 863,512.5 863,516.1 862,516.1 862,520.2 861,520.2 861,513.3 860,513.3 860,521.8 859,521.8 859,514.9 858,514.9 858,513.3 857,513.3 857,512.3 856,512.3 856,512.3 855,512.3 855,523.4 854,523.4 854,515.9 853,515.9 853,517.7 852,517.7 852,527.7 851,527.7 851,513.7 850,513.7 850,511.0 849,511.0 849,511.3 848,511.3 848,519.1 847,519.1 847,518.0 846,518.0 846,530.7 845,530.7 845,513.2 844,513.2 844,515.0 843,515.0 843,515.7 842,515.7 842,513.6 841,513.6 841,517.7 840,517.7 840,512.3 839,512.3 839,514.9 838,514.9 838,514.2 837,514.2 837,517.3 836,517.3 836,515.9 835,515.9 835,517.6 834,517.6 834,514.9 833,514.9 833,515.8 832,515.8 832,515.8 831,515.8 831,518.2 830,518.2 830,531.1 829,531.1 829,514.1 828,514.1 828,516.3 827,516.3 827,512.1 826,512.1 826,511.6 825,511.6 825,518.2 824,518.2 824,517.7 823,517.7 823,514.8 822,514.8 822,517.8 821,517.8 821,524.6 820,524.6 820,513.9 819,513.9 819,513.6 818,513.6 818,514.0 817,514.0 817,510.4 816,510.4 816,519.4 815,519.4 815,512.6 814,512.6 814,514.1 813,514.1 813,514.6 812,514.6 812,513.9 811,513.9 811,515.2 810,515.2 810,515.7 809,515.7 809,519.4 808,519.4 808,517.2 807,517.2 807,525.7 806,525.7 806,518.2 805,518.2 805,511.5 804,511.5 804,512.6 803,512.6 803,517.4 802,517.4 802,513.0 801,513.0 801,513.8 800,513.8 800,511.3 799,511.3 799,515.6 798,515.6 798,517.7 797,517.7 797,512.6 796,512.6 796,510.8 795,510.8 795,539.6 794,539.6 794,511.0 793,511.0 793,510.8 792,510.8 792,511.3 791,511.3 791,522.9 790,522.9 790,511.3 789,511.3 789,516.5 788,516.5 788,513.8 787,513.8 787,517.5 786,517.5 786,515.9 785,515.9 785,515.9 784,515.9 784,517.7 783,517.7 783,524.7 782,524.7 782,514.5 781,514.5 781,513.7 780,513.7 780,518.3 779,518.3 779,511.0 778,511.0 778,514.2 777,514.2 777,511.7 776,511.7 776,511.0 775,511.0 775,515.0 774,515.0 774,514.7 773,514.7 773,519.4 772,519.4 772,515.9 771,515.9 771,514.1 770,514.1 770,516.0 769,516.0 769,512.7 768,512.7 768,515.7 767,515.7 767,526.6 766,526.6 766,514.3 765,514.3 765,512.8 764,512.8 764,513.6 763,513.6 763,512.0 762,512.0 762,518.3 761,518.3 761,511.9 760,511.9 760,513.5 759,513.5 759,510.9 758,510.9 758,514.3 757,514.3 757,511.8 756,511.8 756,511.4 755,511.4 755,514.1 754,514.1 754,516.2 753,516.2 753,515.5 752,515.5 752,517.0 751,517.0 751,516.1 750,516.1 750,514.9 749,514.9 749,512.1 748,512.1 748,514.8 747,514.8 747,513.7 746,513.7 746,511.5 745,511.5 745,513.2 744,513.2 744,511.5 743,511.5 743,511.7 742,511.7 742,516.4 741,516.4 741,514.4 740,514.4 740,517.2 739,517.2 739,515.1 738,515.1 738,521.4 737,521.4 737,518.8 736,518.8 736,509.7 735,509.7 735,510.3 734,510.3 734,512.2 733,512.2 733,513.7 732,513.7 732,513.5 731,513.5 731,512.6 730,512.6 730,512.1 729,512.1 729,512.5 728,512.5 728,523.4 727,523.4 727,513.8 726,513.8 726,518.1 725,518.1 725,509.0 724,509.0 724,512.0 723,512.0 723,511.1 722,511.1 722,511.5 721,511.5 721,510.4 720,510.4 720,510.4 719,510.4 719,513.7 718,513.7 718,518.6 717,518.6 717,511.1 716,511.1 716,514.5 715,514.5 715,511.4 714,511.4 714,512.5 713,512.5 713,514.5 712,514.5 712,514.7 711,514.7 711,515.3 710,515.3 710,513.6 709,513.6 709,512.6 708,512.6 708,509.5 707,509.5 707,511.6 706,511.6 706,509.8 705,509.8 705,513.8 704,513.8 704,512.4 703,512.4 703,510.7 702,510.7 702,510.5 701,510.5 701,512.0 700,512.0 700,512.7 699,512.7 699,514.0 698,514.0 698,521.7 697,521.7 697,511.2 696,511.2 696,511.1 695,511.1 695,511.0 694,511.0 694,514.7 693,514.7 693,515.7 692,515.7 692,514.3 691,514.3 691,518.6 690,518.6 690,512.8 689,512.8 689,523.3 688,523.3 688,516.5 687,516.5 687,515.3 686,515.3 686,516.0 685,516.0 685,511.2 684,511.2 684,511.5 683,511.5 683,514.2 682,514.2 682,518.6 681,518.6 681,517.0 680,517.0 680,517.1 679,517.1 679,514.1 678,514.1 678,510.1 677,510.1 677,511.6 676,511.6 676,510.1 675,510.1 675,511.0 674,511.0 674,514.1 673,514.1 673,511.5 672,511.5 672,513.9 671,513.9 671,514.9 670,514.9 670,513.8 669,513.8 669,512.6 668,512.6 668,514.0 667,514.0 667,512.9 666,512.9 666,514.7 665,514.7 665,515.9 664,515.9 664,516.5 663,516.5 663,512.2 662,512.2 662,512.1 661,512.1 661,511.7 660,511.7 660,514.4 659,514.4 659,514.4 658,514.4 658,514.1 657,514.1 657,517.4 656,517.4 656,512.3 655,512.3 655,513.2 654,513.2 654,518.9 653,518.9 653,512.7 652,512.7 652,510.9 651,510.9 651,512.7 650,512.7 650,511.5 649,511.5 649,513.5 648,513.5 648,515.7 647,515.7 647,511.1 646,511.1 646,516.8 645,516.8 645,511.3 644,511.3 644,519.3 643,519.3 643,513.2 642,513.2 642,511.9 641,511.9 641,514.0 640,514.0 640,518.8 639,518.8 639,515.8 638,515.8 638,524.2 637,524.2 637,510.0 636,510.0 636,511.5 635,511.5 635,512.9 634,512.9 634,510.5 633,510.5 633,513.6 632,513.6 632,514.7 631,514.7 631,512.5 630,512.5 630,516.2 629,516.2 629,527.3 628,527.3 628,512.7 627,512.7 627,512.0 626,512.0 626,512.1 625,512.1 625,512.2 624,512.2 624,514.3 623,514.3 623,519.9 622,519.9 622,511.5 621,511.5 621,510.5 620,510.5 620,510.8 619,510.8 619,512.4 618,512.4 618,510.6 617,510.6 617,517.8 616,517.8 616,516.9 615,516.9 615,527.3 614,527.3 614,513.0 613,513.0 613,513.1 612,513.1 612,514.9 611,514.9 611,515.8 610,515.8 610,514.2 609,514.2 609,524.2 608,524.2 608,523.8 607,523.8 607,516.6 606,516.6 606,511.1 605,511.1 605,514.1 604,514.1 604,514.8 603,514.8 603,518.8 602,518.8 602,522.3 601,522.3 601,516.4 600,516.4 600,516.7 599,516.7 599,525.4 598,525.4 598,513.9 597,513.9 597,512.8 596,512.8 596,514.0 595,514.0 595,513.8 594,513.8 594,516.8 593,516.8 593,513.4 592,513.4 592,512.8 591,512.8 591,512.6 590,512.6 590,518.8 589,518.8 589,518.8 588,518.8 588,516.5 587,516.5 587,513.4 586,513.4 586,511.1 585,511.1 585,510.4 584,510.4 584,513.1 583,513.1 583,513.1 582,513.1 582,518.4 581,518.4 581,512.0 580,512.0 580,512.4 579,512.4 579,512.1 578,512.1 578,517.1 577,517.1 577,510.4 576,510.4 576,514.5 575,514.5 575,514.8 574,514.8 574,515.4 573,515.4 573,510.4 572,510.4 572,511.4 571,511.4 571,511.2 570,511.2 570,513.0 569,513.0 569,512.3 568,512.3 568,517.8 567,517.8 567,511.8 566,511.8 566,511.4 565,511.4 565,514.9 564,514.9 564,511.3 563,511.3 563,510.7 562,510.7 562,519.8 561,519.8 561,511.1 560,511.1 560,511.9 559,511.9 559,521.1 558,521.1 558,515.2 557,515.2 557,516.9 556,516.9 556,510.0 555,510.0 555,513.0 554,513.0 554,511.8 553,511.8 553,511.3 552,511.3 552,513.2 551,513.2 551,515.4 550,515.4 550,516.7 549,516.7 549,512.8 548,512.8 548,511.3 547,511.3 547,512.6 546,512.6 546,513.1 545,513.1 545,515.7 544,515.7 544,511.7 543,511.7 543,512.9 542,512.9 542,517.1 541,517.1 541,511.0 540,511.0 540,511.1 539,511.1 539,514.6 538,514.6 538,523.4 537,523.4 537,512.5 536,512.5 536,515.3 535,515.3 535,512.0 534,512.0 534,510.3 533,510.3 533,513.1 532,513.1 532,512.0 531,512.0 531,515.6 530,515.6 530,514.0 529,514.0 529,515.2 528,515.2 528,510.5 527,510.5 527,515.9 526,515.9 526,515.4 525,515.4 525,511.4 524,511.4 524,523.9 523,523.9 523,512.9 522,512.9 522,514.6 521,514.6 521,518.0 520,518.0 520,518.3 519,518.3 519,513.5 518,513.5 518,511.4 517,511.4 517,512.8 516,512.8 516,518.7 515,518.7 515,513.7 514,513.7 514,511.8 513,511.8 513,515.8 512,515.8 512,519.9 511,519.9 511,514.9 510,514.9 510,511.5 509,511.5 509,516.0 508,516.0 508,516.2 507,516.2 507,512.1 506,512.1 506,516.1 505,516.1 505,515.5 504,515.5 504,514.3 503,514.3 503,513.0 502,513.0 502,512.6 501,512.6 501,512.6 500,512.6 500,515.5 499,515.5 499,523.2 498,523.2 498,516.1 497,516.1 497,516.0 496,516.0 496,515.2 495,515.2 495,510.1 494,510.1 494,511.5 493,511.5 493,509.7 492,509.7 492,512.5 491,512.5 491,517.1 490,517.1 490,517.9 489,517.9 489,513.8 488,513.8 488,510.0 487,510.0 487,512.3 486,512.3 486,512.3 485,512.3 485,511.2 484,511.2 484,514.4 483,514.4 483,514.7 482,514.7 482,513.4 481,513.4 481,511.1 480,511.1 480,513.1 479,513.1 479,514.4 478,514.4 478,514.8 477,514.8 477,512.4 476,512.4 476,514.7 475,514.7 475,515.2 474,515.2 474,515.1 473,515.1 473,511.5 472,511.5 472,512.5 471,512.5 471,516.6 470,516.6 470,516.3 469,516.3 469,514.0 468,514.0 468,518.8 467,518.8 467,512.4 466,512.4 466,516.0 465,516.0 465,516.0 464,516.0 464,512.2 463,512.2 463,510.4 462,510.4 462,511.4 461,511.4 461,512.3 460,512.3 460,520.0 459,520.0 459,512.5 458,512.5 458,515.3 457,515.3 457,514.1 456,514.1 456,513.7 455,513.7 455,513.6 454,513.6 454,515.0 453,515.0 453,513.5 452,513.5 452,515.1 451,515.1 451,515.2 450,515.2 450,514.4 449,514.4 449,517.3 448,517.3 448,515.2 447,515.2 447,509.2 446,509.2 446,513.0 445,513.0 445,509.7 444,509.7 444,509.8 443,509.8 443,513.7 442,513.7 442,512.1 441,512.1 441,514.6 440,514.6 440,514.1 439,514.1 439,513.9 438,513.9 438,512.7 437,512.7 437,511.0 436,511.0 436,513.4 435,513.4 435,513.7 434,513.7 434,511.5 433,511.5 433,511.0 432,511.0 432,515.3 431,515.3 431,513.7 430,513.7 430,511.3 429,511.3 429,514.6 428,514.6 428,510.9 427,510.9 427,511.4 426,511.4 426,509.8 425,509.8 425,509.3 424,509.3 424,509.5 423,509.5 423,508.9 422,508.9 422,514.2 421,514.2 421,514.2 420,514.2 420,516.3 419,516.3 419,509.9 418,509.9 418,510.7 417,510.7 417,513.6 416,513.6 416,509.5 415,509.5 415,512.7 414,512.7 414,508.2 413,508.2 413,508.6 412,508.6 412,513.8 411,513.8 411,511.9 410,511.9 410,510.7 409,510.7 409,508.9 408,508.9 408,509.4 407,509.4 407,513.0 406,513.0 406,509.9 405,509.9 405,512.8 404,512.8 404,511.5 403,511.5 403,511.0 402,511.0 402,512.2 401,512.2 401,510.7 400,510.7 400,511.9 399,511.9 399,509.4 398,509.4 398,510.5 397,510.5 397,509.5 396,509.5 396,511.8 395,511.8 395,512.4 394,512.4 394,510.2 393,510.2 393,512.5 392,512.5 392,509.5 391,509.5 391,509.0 390,509.0 390,511.4 389,511.4 389,509.3 388,509.3 388,512.3 387,512.3 387,512.2 386,512.2 386,509.8 385,509.8 385,517.7 384,517.7 384,509.1 383,509.1 383,509.7 382,509.7 382,509.9 381,509.9 381,508.2 380,508.2 380,511.1 379,511.1 379,510.0 378,510.0 378,509.1 377,509.1 377,509.4 376,509.4 376,509.7 375,509.7 375,513.5 374,513.5 374,510.5 373,510.5 373,514.7 372,514.7 372,516.1 371,516.1 371,512.4 370,512.4 370,508.9 369,508.9 369,509.3 368,509.3 368,514.1 367,514.1 367,509.9 366,509.9 366,509.2 365,509.2 365,511.9 364,511.9 364,509.7 363,509.7 363,509.9 362,509.9 362,511.5 361,511.5 361,509.8 360,509.8 360,508.8 359,508.8 359,507.9 358,507.9 358,508.6 357,508.6 357,508.2 356,508.2 356,506.8 355,506.8 355,508.2 354,508.2 354,508.1 353,508.1 353,507.5 352,507.5 352,507.7 351,507.7 351,512.4 350,512.4 350,509.8 349,509.8 349,509.9 348,509.9 348,510.7 347,510.7 347,508.6 346,508.6 346,508.9 345,508.9 345,509.6 344,509.6 344,508.6 343,508.6 343,507.9 342,507.9 342,510.3 341,510.3 341,510.4 340,510.4 340,510.7 339,510.7 339,508.1 338,508.1 338,511.2 337,511.2 337,509.1 336,509.1 336,508.3 335,508.3 335,510.9 334,510.9 334,512.2 333,512.2 333,508.9 332,508.9 332,507.6 331,507.6 331,509.6 330,509.6 330,509.8 329,509.8 329,510.0 328,510.0 328,509.0 327,509.0 327,507.8 326,507.8 326,509.1 325,509.1 325,508.9 324,508.9 324,511.8 323,511.8 323,508.9 322,508.9 322,506.6 321,506.6 321,511.6 320,511.6 320,507.8 319,507.8 319,511.9 318,511.9 318,509.2 317,509.2 317,508.0 316,508.0 316,507.7 315,507.7 315,506.8 314,506.8 314,506.7 313,506.7 313,507.3 312,507.3 312,507.6 311,507.6 311,506.5 310,506.5 310,507.9 309,507.9 309,508.8 308,508.8 308,506.8 307,506.8 307,506.7 306,506.7 306,508.6 305,508.6 305,508.8 304,508.8 304,507.1 303,507.1 303,508.2 302,508.2 302,507.8 301,507.8 301,509.1 300,509.1 300,508.5 299,508.5 299,507.2 298,507.2 298,506.8 297,506.8 297,506.5 296,506.5 296,508.3 295,508.3 295,506.3 294,506.3 294,508.5 293,508.5 293,504.9 292,504.9 292,506.1 291,506.1 291,505.8 290,505.8 290,505.9 289,505.9 289,505.8 288,505.8 288,504.9 287,504.9 287,505.2 286,505.2 286,504.8 285,504.8 285,505.1 284,505.1 284,504.9 283,504.9 283,504.7 282,504.7 282,504.8 281,504.8 281,504.0 280,504.0 280,504.4 279,504.4 279,504.5 278,504.5 278,503.7 277,503.7 277,503.6 276,503.6 276,504.1 275,504.1 275,503.8 274,503.8 274,503.3 273,503.3 273,503.3 272,503.3 272,504.1 271,504.1 271,503.4 270,503.4 270,503.3 269,503.3 269,503.1 268,503.1 268,503.1 267,503.1 267,503.0 266,503.0 266,503.3 265,503.3 265,503.0 264,503.0 264,503.0 263,503.0 263,503.0 262,503.0 262,503.0 261,503.0 261,503.0 260,503.0 260,503.0 259,503.0 259,503.0 258,503.0 258,503.0 257,503.0 257,503.0 256,503.0 256,503.0 255,503.0 255,503.0 254,503.0 254,503.0 253,503.0 253,503.0 252,503.0 252,503.0 251,503.0 251,503.0 250,503.0 250,503.0 249,503.0 249,503.0 248,503.0 248,503.0 247,503.0 247,503.0 246,503.0 246,503.0 245,503.0 245,503.0 244,503.0 244,503.0 243,503.0 243,503.0 242,503.0 242,503.0 241,503.0 241,503.0 240,503.0 240,503.0 239,503.0 239,503.0 238,503.0 238,503.0 237,503.0 237,503.0 236,503.0 236,503.0 235,503.0 235,503.0 234,503.0 234,503.0 233,503.0 233,503.0 232,503.0 232,503.0 231,503.0 231,503.0 230,503.0 230,503.0 229,503.0 229,503.0 228,503.0 228,503.0 227,503.0 227,503.0 226,503.0 226,503.0 225,503.0 225,503.0 224,503.0 224,503.0 223,503.0 223,503.0 222,503.0 222,503.0 221,503.0 221,503.0 220,503.0 220,503.0 219,503.0 219,503.0 218,503.0 218,503.0 217,503.0 217,503.0 216,503.0 216,503.0 215,503.0 215,503.0 214,503.0 214,503.0 213,503.0 213,503.0 212,503.0 212,503.0 211,503.0 211,503.0 210,503.0 210,503.0 209,503.0 209,503.0 208,503.0 208,503.0 207,503.0 207,503.0 206,503.0 206,503.0 205,503.0 205,503.0 204,503.0 204,503.0 203,503.0 203,503.0 202,503.0 202,503.0 201,503.0 201,503.0 200,503.0 200,503.0 199,503.0 199,503.0 198,503.0 198,503.0 197,503.0 197,503.0 196,503.0 196,503.0 195,503.0 195,503.0 194,503.0 194,503.0 193,503.0 193,503.0 192,503.0 192,503.0 191,503.0 191,503.0 190,503.0 190,503.0 189,503.0 189,503.0 188,503.0 188,503.0 187,503.0 187,503.0 186,503.0 186,503.0 185,503.0 185,503.0 184,503.0 184,503.0 183,503.0 183,503.0 182,503.0 182,503.0 181,503.0 181,503.0 180,503.0 180,503.0 179,503.0 179,503.0 178,503.0 178,503.0 177,503.0 177,503.0 176,503.0 176,503.0 175,503.0 175,503.0 174,503.0 174,503.0 173,503.0 173,503.0 172,503.0 172,503.0 171,503.0 171,503.0 170,503.0 170,503.0 169,503.0 169,503.0 168,503.0 168,503.0 167,503.0 167,503.0 166,503.0 166,503.0 165,503.0 165,503.0 164,503.0 164,503.0 163,503.0 163,503.0 162,503.0 162,503.0 161,503.0 161,503.0 160,503.0 160,503.0 159,503.0 159,503.0 158,503.0 158,503.0 157,503.0 157,503.0 156,503.0 156,503.0 155,503.0 155,503.0 154,503.0 154,503.0 153,503.0 153,503.0 152,503.0 152,503.0 151,503.0 151,503.0 150,503.0 150,503.0 149,503.0 149,503.0 148,503.0 148,503.0 147,503.0 147,503.0 146,503.0 146,503.0 145,503.0 145,503.0 144,503.0 144,503.0 143,503.0 143,503.0 142,503.0 142,503.0 141,503.0 141,503.0 140,503.0 140,503.0 139,503.0 139,503.0 138,503.0 138,503.0 137,503.0 137,503.0 136,503.0 136,503.0 135,503.0 135,503.0 134,503.0 134,503.0 133,503.0" fill="#3232c8"/><polygon points="133,502.5 134,502.5 134,502.5 135,502.5 135,502.5 136,502.5 136,502.5 137,502.5 137,502.5 138,502.5 138,502.5 139,502.5 139,502.5 140,502.5 140,502.5 141,502.5 141,502.5 142,502.5 142,502.5 143,502.5 143,502.5 144,502.5 144,502.5 145,502.5 145,502.5 146,502.5 146,502.5 147,502.5 147,502.5 148,502.5 148,502.5 149,502.5 149,502.5 150,502.5 150,502.5 151,502.5 151,502.5 152,502.5 152,502.5 153,502.5 153,502.5 154,502.5 154,502.5 155,502.5 155,502.5 156,502.5 156,502.5 157,502.5 157,502.5 158,502.5 158,502.5 159,502.5 159,502.5 160,502.5 160,502.5 161,502.5 161,502.5 162,502.5 162,502.5 163,502.5 163,502.5 164,502.5 164,502.5 165,502.5 165,502.5 166,502.5 166,502.5 167,502.5 167,502.5 168,502.5 168,502.5 169,502.5 169,502.5 170,502.5 170,502.5 171,502.5 171,502.5 172,502.5 172,502.5 173,502.5 173,502.5 174,502.5 174,502.5 175,502.5 175,502.5 176,502.5 176,502.5 177,502.5 177,502.5 178,502.5 178,502.5 179,502.5 179,502.5 180,502.5 180,502.5 181,502.5 181,502.5 182,502.5 182,502.5 183,502.5 183,502.5 184,502.5 184,502.5 185,502.5 185,502.5 186,502.5 186,502.5 187,502.5 187,502.5 188,502.5 188,502.5 189,502.5 189,502.5 190,502.5 190,502.5 191,502.5 191,502.5 192,502.5 192,502.5 193,502.5 193,502.5 194,502.5 194,502.5 195,502.5 195,502.5 196,502.5 196,502.5 197,502.5 197,502.5 198,502.5 198,502.5 199,502.5 199,502.5 200,502.5 200,502.5 201,502.5 201,502.5 202,502.5 202,502.5 203,502.5 203,502.5 204,502.5 204,502.5 205,502.5 205,502.5 206,502.5 206,502.5 207,502.5 207,502.5 208,502.5 208,502.5 209,502.5 209,502.5 210,502.5 210,502.5 211,502.5 211,502.5 212,502.5 212,502.5 213,502.5 213,502.5 214,502.5 214,502.5 215,502.5 215,502.5 216,502.5 216,502.5 217,502.5 217,502.5 218,502.5 218,502.5 219,502.5 219,502.5 220,502.5 220,502.5 221,502.5 221,502.5 222,502.5 222,502.5 223,502.5 223,502.5 224,502.5 224,502.5 225,502.5 225,502.5 226,502.5 226,502.5 227,502.5 227,502.5 228,502.5 228,502.5 229,502.5 229,502.5 230,502.5 230,502.5 231,502.5 231,502.5 232,502.5 232,502.5 233,502.5 233,502.5 234,502.5 234,502.5 235,502.5 235,502.5 236,502.5 236,502.5 237,502.5 237,502.5 238,502.5 238,502.5 239,502.5 239,502.5 240,502.5 240,502.5 241,502.5 241,502.5 242,502.5 242,502.5 243,502.5 243,502.5 244,502.5 244,502.5 245,502.5 245,502.5 246,502.5 246,502.5 247,502.5 247,502.5 248,502.5 248,502.5 249,502.5 249,502.5 250,502.5 250,502.5 251,502.5 251,502.5 252,502.5 252,502.5 253,502.5 253,502.5 254,502.5 254,502.5 255,502.5 255,502.5 256,502.5 256,502.5 257,502.5 257,502.5 258,502.5 258,502.5 259,502.5 259,502.5 260,502.5 260,502.5 261,502.5 261,502.4 262,502.4 262,502.4 263,502.4 263,502.4 264,502.4 264,502.4 265,502.4 265,502.4 266,502.4 266,502.3 267,502.3 267,502.3 268,502.3 268,502.3 269,502.3 269,502.3 270,502.3 270,502.2 271,502.2 271,502.2 272,502.2 272,502.1 273,502.1 273,502.1 274,502.1 274,502.1 275,502.1 275,502.0 276,502.0 276,502.1 277,502.1 277,501.9 278,501.9 278,501.9 279,501.9 279,501.9 280,501.9 280,501.8 281,501.8 281,501.9 282,501.9 282,501.8 283,501.8 283,501.7 284,501.7 284,501.8 285,501.8 285,501.6 286,501.6 286,501.6 287,501.6 287,501.7 288,501.7 288,501.7 289,501.7 289,501.5 290,501.5 290,501.3 291,501.3 291,501.4 292,501.4 292,501.5 293,501.5 293,501.2 294,501.2 294,501.3 295,501.3 295,501.3 296,501.3 296,501.1 297,501.1 297,501.0 298,501.0 298,501.0 299,501.0 299,501.1 300,501.1 300,500.4 301,500.4 301,500.4 302,500.4 302,500.7 303,500.7 303,500.5 304,500.5 304,500.7 305,500.7 305,500.5 306,500.5 306,500.4 307,500.4 307,500.7 308,500.7 308,500.3 309,500.3 309,500.6 310,500.6 310,500.6 311,500.6 311,500.9 312,500.9 312,500.5 313,500.5 313,500.8 314,500.8 314,500.5 315,500.5 315,500.2 316,500.2 316,500.2 317,500.2 317,500.6 318,500.6 318,500.4 319,500.4 319,500.7 320,500.7 320,500.8 321,500.8 321,500.5 322,500.5 322,500.8 323,500.8 323,500.8 324,500.8 324,500.7 325,500.7 325,499.9 326,499.9 326,500.2 327,500.2 327,500.2 328,500.2 328,500.1 329,500.1 329,500.6 330,500.6 330,500.3 331,500.3 331,500.4 332,500.4 332,499.7 333,499.7 333,500.0 334,500.0 334,499.7 335,499.7 335,499.6 336,499.6 336,500.0 337,500.0 337,500.2 338,500.2 338,500.2 339,500.2 339,500.2 340,500.2 340,499.9 341,499.9 341,500.2 342,500.2 342,500.0 343,500.0 343,500.1 344,500.1 344,500.0 345,500.0 345,500.1 346,500.1 346,500.4 347,500.4 347,500.4 348,500.4 348,500.4 349,500.4 349,500.4 350,500.4 350,500.2 351,500.2 351,500.3 352,500.3 352,500.2 353,500.2 353,500.2 354,500.2 354,500.4 355,500.4 355,500.2 356,500.2 356,500.4 357,500.4 357,500.6 358,500.6 358,500.6 359,500.6 359,500.2 360,500.2 360,499.6 361,499.6 361,499.9 362,499.9 362,500.1 363,500.1 363,500.0 364,500.0 364,500.3 365,500.3 365,500.0 366,500.0 366,500.0 367,500.0 367,500.0 368,500.0 368,500.3 369,500.3 369,500.5 370,500.5 370,500.4 371,500.4 371,499.2 372,499.2 372,498.8 373,498.8 373,499.2 374,499.2 374,499.0 375,499.0 375,499.6 376,499.6 376,499.0 377,499.0 377,499.5 378,499.5 378,499.8 379,499.8 379,499.8 380,499.8 380,500.2 381,500.2 381,499.8 382,499.8 382,499.6 383,499.6 383,500.3 384,500.3 384,499.2 385,499.2 385,499.1 386,499.1 386,499.6 387,499.6 387,499.6 388,499.6 388,499.4 389,499.4 389,499.6 390,499.6 390,499.6 391,499.6 391,499.9 392,499.9 392,499.3 393,499.3 393,499.1 394,499.1 394,499.2 395,499.2 395,499.9 396,499.9 396,499.8 397,499.8 397,499.8 398,499.8 398,500.0 399,500.0 399,500.0 400,500.0 400,500.1 401,500.1 401,499.1 402,499.1 402,499.2 403,499.2 403,498.5 404,498.5 404,498.9 405,498.9 405,499.8 406,499.8 406,499.9 407,499.9 407,499.3 408,499.3 408,499.6 409,499.6 409,499.5 410,499.5 410,500.1 411,500.1 411,500.0 412,500.0 412,499.8 413,499.8 413,499.8 414,499.8 414,500.1 415,500.1 415,500.1 416,500.1 416,498.8 417,498.8 417,499.2 418,499.2 418,499.4 419,499.4 419,499.0 420,499.0 420,499.5 421,499.5 421,499.2 422,499.2 422,499.5 423,499.5 423,499.9 424,499.9 424,499.8 425,499.8 425,499.3 426,499.3 426,499.3 427,499.3 427,499.4 428,499.4 428,499.5 429,499.5 429,499.7 430,499.7 430,499.1 431,499.1 431,498.4 432,498.4 432,499.4 433,499.4 433,498.6 434,498.6 434,498.9 435,498.9 435,499.5 436,499.5 436,499.3 437,499.3 437,497.7 438,497.7 438,498.5 439,498.5 439,498.6 440,498.6 440,499.1 441,499.1 441,499.5 442,499.5 442,499.6 443,499.6 443,499.5 444,499.5 444,499.8 445,499.8 445,499.6 446,499.6 446,499.0 447,499.0 447,499.7 448,499.7 448,498.0 449,498.0 449,497.8 450,497.8 450,498.5 451,498.5 451,499.1 452,499.1 452,498.7 453,498.7 453,498.6 454,498.6 454,498.9 455,498.9 455,499.2 456,499.2 456,498.6 457,498.6 457,498.2 458,498.2 458,498.7 459,498.7 459,499.0 460,499.0 460,498.8 461,498.8 461,499.3 462,499.3 462,499.2 463,499.2 463,499.8 464,499.8 464,498.4 465,498.4 465,498.0 466,498.0 466,498.8 467,498.8 467,498.7 468,498.7 468,499.0 469,499.0 469,498.7 470,498.7 470,498.6 471,498.6 471,498.7 472,498.7 472,498.2 473,498.2 473,498.2 474,498.2 474,499.2 475,499.2 475,499.3 476,499.3 476,498.3 477,498.3 477,498.9 478,498.9 478,498.6 479,498.6 479,498.6 480,498.6 480,499.6 481,499.6 481,499.2 482,499.2 482,499.0 483,499.0 483,498.7 484,498.7 484,499.2 485,499.2 485,498.5 486,498.5 486,499.1 487,499.1 487,498.9 488,498.9 488,499.1 489,499.1 489,499.0 490,499.0 490,499.5 491,499.5 491,499.1 492,499.1 492,499.9 493,499.9 493,499.6 494,499.6 494,499.8 495,499.8 495,497.9 496,497.9 496,497.5 497,497.5 497,497.6 498,497.6 498,498.1 499,498.1 499,498.2 500,498.2 500,498.8 501,498.8 501,499.1 502,499.1 502,498.6 503,498.6 503,498.6 504,498.6 504,498.4 505,498.4 505,498.4 506,498.4 506,498.4 507,498.4 507,498.8 508,498.8 508,498.4 509,498.4 509,499.0 510,499.0 510,499.1 511,499.1 511,497.9 512,497.9 512,497.4 513,497.4 513,498.2 514,498.2 514,498.9 515,498.9 515,498.2 516,498.2 516,498.6 517,498.6 517,499.1 518,499.1 518,499.3 519,499.3 519,497.8 520,497.8 520,497.7 521,497.7 521,497.8 522,497.8 522,498.6 523,498.6 523,498.2 524,498.2 524,498.4 525,498.4 525,498.3 526,498.3 526,498.4 527,498.4 527,499.3 528,499.3 528,498.9 529,498.9 529,498.8 530,498.8 530,498.7 531,498.7 531,498.8 532,498.8 532,498.8 533,498.8 533,498.7 534,498.7 534,498.8 535,498.8 535,497.6 536,497.6 536,498.0 537,498.0 537,498.1 538,498.1 538,498.0 539,498.0 539,498.4 540,498.4 540,499.0 541,499.0 541,498.8 542,498.8 542,499.0 543,499.0 543,499.0 544,499.0 544,498.5 545,498.5 545,498.5 546,498.5 546,498.6 547,498.6 547,499.5 548,499.5 548,499.4 549,499.4 549,497.7 550,497.7 550,498.1 551,498.1 551,498.4 552,498.4 552,499.1 553,499.1 553,499.0 554,499.0 554,498.5 555,498.5 555,499.2 556,499.2 556,499.4 557,499.4 557,498.8 558,498.8 558,498.8 559,498.8 559,498.6 560,498.6 560,498.9 561,498.9 561,499.3 562,499.3 562,499.2 563,499.2 563,499.0 564,499.0 564,499.4 565,499.4 565,499.2 566,499.2 566,499.1 567,499.1 567,499.6 568,499.6 568,499.0 569,499.0 569,499.7 570,499.7 570,499.0 571,499.0 571,499.4 572,499.4 572,499.0 573,499.0 573,498.9 574,498.9 574,499.1 575,499.1 575,498.6 576,498.6 576,499.0 577,499.0 577,499.6 578,499.6 578,499.6 579,499.6 579,498.9 580,498.9 580,499.3 581,499.3 581,499.7 582,499.7 582,498.9 583,498.9 583,499.0 584,499.0 584,499.4 585,499.4 585,499.5 586,499.5 586,499.5 587,499.5 587,497.6 588,497.6 588,497.7 589,497.7 589,497.5 590,497.5 590,498.1 591,498.1 591,498.1 592,498.1 592,497.9 593,497.9 593,498.9 594,498.9 594,498.3 595,498.3 595,498.7 596,498.7 596,499.1 597,499.1 597,498.2 598,498.2 598,498.8 599,498.8 599,498.7 600,498.7 600,498.4 601,498.4 601,498.4 602,498.4 602,498.6 603,498.6 603,498.2 604,498.2 604,499.1 605,499.1 605,499.4 606,499.4 606,498.6 607,498.6 607,497.3 608,497.3 608,497.5 609,497.5 609,497.8 610,497.8 610,498.1 611,498.1 611,498.7 612,498.7 612,498.8 613,498.8 613,499.2 614,499.2 614,498.6 615,498.6 615,498.6 616,498.6 616,498.3 617,498.3 617,498.4 618,498.4 618,499.2 619,499.2 619,498.4 620,498.4 620,499.1 621,499.1 621,498.9 622,498.9 622,498.9 623,498.9 623,499.1 624,499.1 624,499.1 625,499.1 625,499.6 626,499.6 626,499.5 627,499.5 627,499.6 628,499.6 628,498.7 629,498.7 629,498.1 630,498.1 630,498.5 631,498.5 631,499.1 632,499.1 632,499.2 633,499.2 633,498.7 634,498.7 634,499.0 635,499.0 635,499.4 636,499.4 636,498.7 637,498.7 637,498.0 638,498.0 638,497.0 639,497.0 639,497.3 640,497.3 640,497.7 641,497.7 641,498.4 642,498.4 642,497.6 643,497.6 643,498.8 644,498.8 644,498.1 645,498.1 645,498.5 646,498.5 646,498.2 647,498.2 647,498.3 648,498.3 648,498.9 649,498.9 649,498.4 650,498.4 650,498.4 651,498.4 651,498.9 652,498.9 652,499.2 653,499.2 653,497.6 654,497.6 654,498.1 655,498.1 655,497.9 656,497.9 656,498.2 657,498.2 657,498.3 658,498.3 658,498.4 659,498.4 659,498.4 660,498.4 660,499.2 661,499.2 661,498.6 662,498.6 662,499.0 663,499.0 663,498.4 664,498.4 664,498.0 665,498.0 665,498.5 666,498.5 666,498.1 667,498.1 667,498.2 668,498.2 668,498.3 669,498.3 669,499.3 670,499.3 670,499.1 671,499.1 671,498.4 672,498.4 672,498.8 673,498.8 673,498.5 674,498.5 674,499.4 675,499.4 675,498.8 676,498.8 676,499.1 677,499.1 677,499.5 678,499.5 678,499.1 679,499.1 679,497.5 680,497.5 680,498.7 681,498.7 681,498.4 682,498.4 682,498.9 683,498.9 683,498.0 684,498.0 684,499.1 685,499.1 685,498.7 686,498.7 686,498.6 687,498.6 687,498.6 688,498.6 688,498.9 689,498.9 689,498.7 690,498.7 690,498.4 691,498.4 691,498.8 692,498.8 692,498.5 693,498.5 693,498.7 694,498.7 694,499.1 695,499.1 695,499.3 696,499.3 696,498.9 697,498.9 697,498.8 698,498.8 698,499.2 699,499.2 699,499.3 700,499.3 700,498.9 701,498.9 701,498.6 702,498.6 702,499.4 703,499.4 703,498.9 704,498.9 704,499.0 705,499.0 705,499.5 706,499.5 706,499.1 707,499.1 707,499.4 708,499.4 708,499.2 709,499.2 709,498.9 710,498.9 710,498.8 711,498.8 711,498.8 712,498.8 712,498.6 713,498.6 713,498.7 714,498.7 714,499.5 715,499.5 715,498.6 716,498.6 716,499.5 717,499.5 717,498.8 718,498.8 718,499.5 719,499.5 719,498.9 720,498.9 720,499.1 721,499.1 721,499.7 722,499.7 722,499.5 723,499.5 723,499.4 724,499.4 724,499.8 725,499.8 725,497.1 726,497.1 726,498.6 727,498.6 727,498.6 728,498.6 728,498.1 729,498.1 729,498.8 730,498.8 730,499.0 731,499.0 731,499.2 732,499.2 732,498.5 733,498.5 733,499.4 734,499.4 734,499.2 735,499.2 735,499.3 736,499.3 736,497.4 737,497.4 737,497.4 738,497.4 738,498.1 739,498.1 739,498.7 740,498.7 740,498.7 741,498.7 741,498.2 742,498.2 742,498.6 743,498.6 743,499.0 744,499.0 744,498.8 745,498.8 745,499.2 746,499.2 746,498.4 747,498.4 747,498.5 748,498.5 748,498.3 749,498.3 749,498.8 750,498.8 750,497.6 751,497.6 751,498.2 752,498.2 752,498.5 753,498.5 753,498.3 754,498.3 754,498.0 755,498.0 755,498.1 756,498.1 756,499.0 757,499.0 757,498.9 758,498.9 758,498.5 759,498.5 759,498.6 760,498.6 760,498.8 761,498.8 761,498.8 762,498.8 762,498.4 763,498.4 763,498.8 764,498.8 764,498.7 765,498.7 765,498.6 766,498.6 766,498.1 767,498.1 767,498.0 768,498.0 768,497.6 769,497.6 769,498.2 770,498.2 770,498.5 771,498.5 771,498.9 772,498.9 772,498.3 773,498.3 773,498.7 774,498.7 774,498.1 775,498.1 775,498.9 776,498.9 776,498.5 777,498.5 777,498.4 778,498.4 778,498.8 779,498.8 779,499.2 780,499.2 780,499.0 781,499.0 781,498.7 782,498.7 782,497.7 783,497.7 783,497.7 784,497.7 784,497.7 785,497.7 785,497.6 786,497.6 786,498.0 787,498.0 787,497.9 788,497.9 788,498.5 789,498.5 789,498.7 790,498.7 790,498.9 791,498.9 791,498.3 792,498.3 792,499.1 793,499.1 793,498.1 794,498.1 794,498.6 795,498.6 795,498.9 796,498.9 796,498.7 797,498.7 797,498.8 798,498.8 798,499.0 799,499.0 799,498.4 800,498.4 800,499.3 801,499.3 801,498.4 802,498.4 802,498.7 803,498.7 803,499.2 804,499.2 804,499.0 805,499.0 805,499.1 806,499.1 806,497.7 807,497.7 807,498.0 808,498.0 808,498.5 809,498.5 809,498.5 810,498.5 810,498.9 811,498.9 811,498.8 812,498.8 812,498.6 813,498.6 813,498.7 814,498.7 814,499.2 815,499.2 815,499.0 816,499.0 816,499.0 817,499.0 817,498.8 818,498.8 818,499.1 819,499.1 819,499.2 820,499.2 820,497.1 821,497.1 821,497.8 822,497.8 822,497.2 823,497.2 823,498.3 824,498.3 824,497.8 825,497.8 825,498.1 826,498.1 826,498.8 827,498.8 827,497.9 828,497.9 828,498.0 829,498.0 829,497.6 830,497.6 830,497.4 831,497.4 831,497.7 832,497.7 832,498.1 833,498.1 833,497.8 834,497.8 834,498.2 835,498.2 835,497.8 836,497.8 836,497.5 837,497.5 837,497.9 838,497.9 838,498.4 839,498.4 839,498.5 840,498.5 840,498.0 841,498.0 841,498.3 842,498.3 842,499.0 843,499.0 843,498.3 844,498.3 844,498.6 845,498.6 845,498.6 846,498.6 846,498.9 847,498.9 847,498.5 848,498.5 848,498.8 849,498.8 849,498.3 850,498.3 850,498.6 851,498.6 851,497.2 852,497.2 852,498.2 853,498.2 853,498.5 854,498.5 854,498.6 855,498.6 855,497.7 856,497.7 856,498.6 857,498.6 857,498.1 858,498.1 858,499.0 859,499.0 859,497.5 860,497.5 860,497.8 861,497.8 861,498.9 862,498.9 862,498.4 863,498.4 863,498.2 864,498.2 864,498.1 865,498.1 865,498.8 866,498.8 866,498.4 867,498.4 867,499.1 868,499.1 868,499.2 869,499.2 869,499.2 870,499.2 870,499.3 871,499.3 871,497.4 872,497.4 872,497.4 873,497.4 873,497.7 874,497.7 874,498.6 875,498.6 875,506.6 874,506.6 874,507.6 873,507.6 873,507.8 872,507.8 872,507.8 871,507.8 871,505.8 870,505.8 870,506.0 869,506.0 869,506.0 868,506.0 868,506.1 867,506.1 867,506.8 866,506.8 866,506.4 865,506.4 865,507.1 864,507.1 864,507.0 863,507.0 863,506.8 862,506.8 862,506.3 861,506.3 861,507.5 860,507.5 860,507.7 859,507.7 859,506.1 858,506.1 858,507.1 857,507.1 857,506.5 856,506.5 856,507.5 855,507.5 855,506.6 854,506.6 854,506.7 853,506.7 853,507.0 852,507.0 852,508.1 851,508.1 851,506.6 850,506.6 850,506.9 849,506.9 849,506.4 848,506.4 848,506.7 847,506.7 847,506.3 846,506.3 846,506.6 845,506.6 845,506.6 844,506.6 844,506.9 843,506.9 843,506.1 842,506.1 842,506.9 841,506.9 841,507.3 840,507.3 840,506.7 839,506.7 839,506.8 838,506.8 838,507.3 837,507.3 837,507.8 836,507.8 836,507.5 835,507.5 835,507.0 834,507.0 834,507.5 833,507.5 833,507.1 832,507.1 832,507.5 831,507.5 831,507.9 830,507.9 830,507.6 829,507.6 829,507.2 828,507.2 828,507.3 827,507.3 827,506.3 826,506.3 826,507.1 825,507.1 825,507.4 824,507.4 824,506.9 823,506.9 823,508.0 822,508.0 822,507.5 821,507.5 821,508.2 820,508.2 820,506.0 819,506.0 819,506.0 818,506.0 818,506.4 817,506.4 817,506.2 816,506.2 816,506.2 815,506.2 815,506.0 814,506.0 814,506.4 813,506.4 813,506.6 812,506.6 812,506.4 811,506.4 811,506.3 810,506.3 810,506.6 809,506.6 809,506.7 808,506.7 808,507.2 807,507.2 807,507.5 806,507.5 806,506.1 805,506.1 805,506.2 804,506.2 804,506.0 803,506.0 803,506.5 802,506.5 802,506.8 801,506.8 801,505.9 800,505.9 800,506.8 799,506.8 799,506.2 798,506.2 798,506.3 797,506.3 797,506.5 796,506.5 796,506.3 795,506.3 795,506.6 794,506.6 794,507.1 793,507.1 793,506.1 792,506.1 792,506.9 791,506.9 791,506.3 790,506.3 790,506.5 789,506.5 789,506.7 788,506.7 788,507.3 787,507.3 787,507.3 786,507.3 786,507.6 785,507.6 785,507.6 784,507.6 784,507.5 783,507.5 783,507.6 782,507.6 782,506.5 781,506.5 781,506.2 780,506.2 780,506.0 779,506.0 779,506.4 778,506.4 778,506.8 777,506.8 777,506.7 776,506.7 776,506.2 775,506.2 775,507.2 774,507.2 774,506.5 773,506.5 773,506.9 772,506.9 772,506.2 771,506.2 771,506.7 770,506.7 770,507.0 769,507.0 769,507.6 768,507.6 768,507.2 767,507.2 767,507.1 766,507.1 766,506.6 765,506.6 765,506.5 764,506.5 764,506.3 763,506.3 763,506.8 762,506.8 762,506.4 761,506.4 761,506.4 760,506.4 760,506.6 759,506.6 759,506.7 758,506.7 758,506.3 757,506.3 757,506.2 756,506.2 756,507.1 755,507.1 755,507.2 754,507.2 754,506.9 753,506.9 753,506.7 752,506.7 752,507.0 751,507.0 751,507.6 750,507.6 750,506.4 749,506.4 749,506.9 748,506.9 748,506.7 747,506.7 747,506.8 746,506.8 746,505.9 745,505.9 745,506.4 744,506.4 744,506.1 743,506.1 743,506.6 742,506.6 742,507.1 741,507.1 741,506.5 740,506.5 740,506.5 739,506.5 739,507.1 738,507.1 738,507.9 737,507.9 737,507.9 736,507.9 736,505.8 735,505.8 735,506.0 734,506.0 734,505.7 733,505.7 733,506.7 732,506.7 732,506.0 731,506.0 731,506.2 730,506.2 730,506.4 729,506.4 729,507.1 728,507.1 728,506.6 727,506.6 727,506.6 726,506.6 726,508.2 725,508.2 725,505.3 724,505.3 724,505.7 723,505.7 723,505.7 722,505.7 722,505.4 721,505.4 721,506.1 720,506.1 720,506.3 719,506.3 719,505.6 718,505.6 718,506.4 717,506.4 717,505.7 716,505.7 716,506.6 715,506.6 715,505.6 714,505.6 714,506.4 713,506.4 713,506.6 712,506.6 712,506.4 711,506.4 711,506.4 710,506.4 710,506.3 709,506.3 709,505.9 708,505.9 708,505.8 707,505.8 707,506.1 706,506.1 706,505.6 705,505.6 705,506.2 704,506.2 704,506.3 703,506.3 703,505.7 702,505.7 702,506.6 701,506.6 701,506.3 700,506.3 700,505.9 699,505.9 699,506.0 698,506.0 698,506.4 697,506.4 697,506.3 696,506.3 696,505.9 695,505.9 695,506.1 694,506.1 694,506.5 693,506.5 693,506.7 692,506.7 692,506.4 691,506.4 691,506.8 690,506.8 690,506.5 689,506.5 689,506.3 688,506.3 688,506.6 687,506.6 687,506.6 686,506.6 686,506.5 685,506.5 685,506.1 684,506.1 684,507.3 683,507.3 683,506.2 682,506.2 682,506.9 681,506.9 681,506.5 680,506.5 680,507.7 679,507.7 679,506.1 678,506.1 678,505.6 677,505.6 677,506.1 676,506.1 676,506.3 675,506.3 675,505.8 674,505.8 674,506.7 673,506.7 673,506.3 672,506.3 672,506.9 671,506.9 671,506.1 670,506.1 670,505.9 669,505.9 669,506.9 668,506.9 668,507.0 667,507.0 667,507.1 666,507.1 666,506.7 665,506.7 665,507.3 664,507.3 664,506.8 663,506.8 663,506.2 662,506.2 662,506.5 661,506.5 661,506.0 660,506.0 660,506.8 659,506.8 659,506.8 658,506.8 658,506.9 657,506.9 657,507.1 656,507.1 656,507.3 655,507.3 655,507.1 654,507.1 654,507.7 653,507.7 653,506.0 652,506.0 652,506.2 651,506.2 651,506.8 650,506.8 650,506.8 649,506.8 649,506.3 648,506.3 648,506.9 647,506.9 647,507.1 646,507.1 646,506.7 645,506.7 645,507.1 644,507.1 644,506.3 643,506.3 643,507.6 642,507.6 642,506.8 641,506.8 641,507.5 640,507.5 640,507.9 639,507.9 639,508.2 638,508.2 638,507.3 637,507.3 637,506.5 636,506.5 636,505.8 635,505.8 635,506.1 634,506.1 634,506.5 633,506.5 633,506.0 632,506.0 632,506.0 631,506.0 631,506.7 630,506.7 630,507.1 629,507.1 629,506.5 628,506.5 628,505.5 627,505.5 627,505.7 626,505.7 626,505.5 625,505.5 625,506.0 624,506.0 624,506.1 623,506.1 623,506.3 622,506.3 622,506.2 621,506.2 621,506.0 620,506.0 620,506.8 619,506.8 619,506.0 618,506.0 618,506.8 617,506.8 617,506.9 616,506.9 616,506.6 615,506.6 615,506.6 614,506.6 614,506.0 613,506.0 613,506.4 612,506.4 612,506.5 611,506.5 611,507.2 610,507.2 610,507.4 609,507.4 609,507.7 608,507.7 608,507.9 607,507.9 607,506.5 606,506.5 606,505.8 605,505.8 605,506.0 604,506.0 604,507.0 603,507.0 603,506.6 602,506.6 602,506.8 601,506.8 601,506.9 600,506.9 600,506.5 599,506.5 599,506.4 598,506.4 598,507.0 597,507.0 597,506.1 596,506.1 596,506.4 595,506.4 595,506.9 594,506.9 594,506.3 593,506.3 593,507.3 592,507.3 592,507.1 591,507.1 591,507.1 590,507.1 590,507.8 589,507.8 589,507.6 588,507.6 588,507.6 587,507.6 587,505.7 586,505.7 586,505.7 585,505.7 585,505.8 584,505.8 584,506.1 583,506.1 583,506.2 582,506.2 582,505.4 581,505.4 581,505.8 580,505.8 580,506.3 579,506.3 579,505.6 578,505.6 578,505.5 577,505.5 577,506.1 576,506.1 576,506.6 575,506.6 575,506.0 574,506.0 574,506.3 573,506.3 573,506.2 572,506.2 572,505.8 571,505.8 571,506.2 570,506.2 570,505.4 569,505.4 569,506.2 568,506.2 568,505.5 567,505.5 567,506.1 566,506.1 566,506.0 565,506.0 565,505.7 564,505.7 564,506.2 563,506.2 563,506.0 562,506.0 562,505.9 561,505.9 561,506.2 560,506.2 560,506.6 559,506.6 559,506.4 558,506.4 558,506.4 557,506.4 557,505.8 556,505.8 556,505.9 555,505.9 555,506.7 554,506.7 554,506.1 553,506.1 553,506.1 552,506.1 552,506.8 551,506.8 551,507.1 550,507.1 550,507.5 549,507.5 549,505.8 548,505.8 548,505.7 547,505.7 547,506.6 546,506.6 546,506.7 545,506.7 545,506.7 544,506.7 544,506.2 543,506.2 543,506.2 542,506.2 542,506.4 541,506.4 541,506.2 540,506.2 540,506.8 539,506.8 539,507.3 538,507.3 538,507.2 537,507.2 537,507.3 536,507.3 536,507.6 535,507.6 535,506.4 534,506.4 534,506.4 533,506.4 533,506.4 532,506.4 532,506.4 531,506.4 531,506.5 530,506.5 530,506.4 529,506.4 529,506.3 528,506.3 528,505.9 527,505.9 527,506.8 526,506.8 526,506.9 525,506.9 525,506.8 524,506.8 524,507.0 523,507.0 523,506.6 522,506.6 522,507.4 521,507.4 521,507.5 520,507.5 520,507.4 519,507.4 519,505.9 518,505.9 518,506.1 517,506.1 517,506.6 516,506.6 516,507.0 515,507.0 515,506.3 514,506.3 514,507.0 513,507.0 513,507.9 512,507.9 512,507.3 511,507.3 511,506.1 510,506.1 510,506.2 509,506.2 509,506.8 508,506.8 508,506.4 507,506.4 507,506.8 506,506.8 506,506.8 505,506.8 505,506.8 504,506.8 504,506.6 503,506.6 503,506.6 502,506.6 502,506.0 501,506.0 501,506.4 500,506.4 500,507.0 499,507.0 499,507.1 498,507.1 498,507.7 497,507.7 497,507.7 496,507.7 496,507.3 495,507.3 495,505.3 494,505.3 494,505.5 493,505.5 493,505.3 492,505.3 492,506.0 491,506.0 491,505.6 490,505.6 490,506.2 489,506.2 489,506.1 488,506.1 488,506.3 487,506.3 487,506.1 486,506.1 486,506.7 485,506.7 485,505.9 484,505.9 484,506.5 483,506.5 483,506.2 482,506.2 482,506.0 481,506.0 481,505.5 480,505.5 480,506.6 479,506.6 479,506.6 478,506.6 478,506.3 477,506.3 477,506.9 476,506.9 476,505.9 475,505.9 475,506.0 474,506.0 474,507.0 473,507.0 473,507.0 472,507.0 472,506.4 471,506.4 471,506.6 470,506.6 470,506.5 469,506.5 469,506.2 468,506.2 468,506.5 467,506.5 467,506.4 466,506.4 466,507.2 465,507.2 465,506.8 464,506.8 464,505.4 463,505.4 463,506.0 462,506.0 462,505.9 461,505.9 461,506.4 460,506.4 460,506.2 459,506.2 459,506.5 458,506.5 458,507.0 457,507.0 457,506.6 456,506.6 456,506.0 455,506.0 455,506.3 454,506.3 454,506.6 453,506.6 453,506.5 452,506.5 452,506.1 451,506.1 451,506.7 450,506.7 450,507.4 449,507.4 449,507.2 448,507.2 448,505.4 447,505.4 447,506.1 446,506.1 446,505.5 445,505.5 445,505.4 444,505.4 444,505.6 443,505.6 443,505.6 442,505.6 442,505.7 441,505.7 441,506.1 440,506.1 440,506.6 439,506.6 439,506.7 438,506.7 438,507.6 437,507.6 437,505.9 436,505.9 436,505.7 435,505.7 435,506.3 434,506.3 434,506.6 433,506.6 433,505.8 432,505.8 432,506.8 431,506.8 431,506.0 430,506.0 430,505.5 429,505.5 429,505.6 428,505.6 428,505.8 427,505.8 427,505.8 426,505.8 426,505.8 425,505.8 425,505.4 424,505.4 424,505.2 423,505.2 423,505.6 422,505.6 422,506.0 421,506.0 421,505.6 420,505.6 420,506.1 419,506.1 419,505.7 418,505.7 418,506.0 417,506.0 417,506.4 416,506.4 416,505.0 415,505.0 415,505.0 414,505.0 414,505.3 413,505.3 413,505.3 412,505.3 412,505.1 411,505.1 411,505.0 410,505.0 410,505.7 409,505.7 409,505.6 408,505.6 408,505.9 407,505.9 407,505.2 406,505.2 406,505.4 405,505.4 405,506.3 404,506.3 404,506.7 403,506.7 403,505.9 402,505.9 402,506.1 401,506.1 401,505.0 400,505.0 400,505.1 399,505.1 399,505.1 398,505.1 398,505.3 397,505.3 397,505.4 396,505.4 396,505.2 395,505.2 395,506.0 394,506.0 394,506.0 393,506.0 393,505.9 392,505.9 392,505.3 391,505.3 391,505.6 390,505.6 390,505.6 389,505.6 389,505.8 388,505.8 388,505.6 387,505.6 387,505.5 386,505.5 386,506.1 385,506.1 385,506.0 384,506.0 384,504.8 383,504.8 383,505.5 382,505.5 382,505.4 381,505.4 381,505.0 380,505.0 380,505.4 379,505.4 379,505.4 378,505.4 378,505.6 377,505.6 377,506.2 376,506.2 376,505.5 375,505.5 375,506.2 374,506.2 374,506.0 373,506.0 373,506.4 372,506.4 372,506.0 371,506.0 371,504.7 370,504.7 370,504.6 369,504.6 369,504.8 368,504.8 368,505.1 367,505.1 367,505.1 366,505.1 366,505.1 365,505.1 365,504.8 364,504.8 364,505.1 363,505.1 363,505.0 362,505.0 362,505.2 361,505.2 361,505.5 360,505.5 360,504.9 359,504.9 359,504.5 358,504.5 358,504.5 357,504.5 357,504.7 356,504.7 356,504.9 355,504.9 355,504.7 354,504.7 354,504.9 353,504.9 353,504.9 352,504.9 352,504.8 351,504.8 351,504.9 350,504.9 350,504.7 349,504.7 349,504.7 348,504.7 348,504.7 347,504.7 347,504.7 346,504.7 346,505.0 345,505.0 345,505.1 344,505.1 344,505.0 343,505.0 343,505.2 342,505.2 342,505.0 341,505.0 341,505.2 340,505.2 340,504.9 339,504.9 339,505.0 338,505.0 338,504.9 337,504.9 337,505.1 336,505.1 336,505.6 335,505.6 335,505.5 334,505.5 334,505.1 333,505.1 333,505.4 332,505.4 332,504.7 331,504.7 331,504.8 330,504.8 330,504.5 329,504.5 329,505.1 328,505.1 328,504.9 327,504.9 327,504.9 326,504.9 326,505.3 325,505.3 325,504.4 324,504.4 324,504.2 323,504.2 323,504.3 322,504.3 322,504.6 321,504.6 321,504.2 320,504.2 320,504.4 319,504.4 319,504.7 318,504.7 318,504.5 317,504.5 317,504.9 316,504.9 316,504.9 315,504.9 315,504.6 314,504.6 314,504.3 313,504.3 313,504.6 312,504.6 312,504.2 311,504.2 311,504.5 310,504.5 310,504.5 309,504.5 309,504.8 308,504.8 308,504.4 307,504.4 307,504.7 306,504.7 306,504.6 305,504.6 305,504.4 304,504.4 304,504.6 303,504.6 303,504.4 302,504.4 302,504.7 301,504.7 301,504.7 300,504.7 300,504.0 299,504.0 299,504.0 298,504.0 298,504.1 297,504.1 297,504.0 296,504.0 296,503.8 295,503.8 295,503.8 294,503.8 294,503.9 293,503.9 293,503.6 292,503.6 292,503.6 291,503.6 291,503.7 290,503.7 290,503.5 289,503.5 289,503.4 288,503.4 288,503.4 287,503.4 287,503.5 286,503.5 286,503.5 285,503.5 285,503.2 284,503.2 284,503.4 283,503.4 283,503.2 282,503.2 282,503.2 281,503.2 281,503.2 280,503.2 280,503.1 279,503.1 279,503.1 278,503.1 278,503.1 277,503.1 277,503.0 276,503.0 276,503.0 275,503.0 275,503.0 274,503.0 274,502.9 273,502.9 273,502.9 272,502.9 272,502.8 271,502.8 271,502.9 270,502.9 270,502.8 269,502.8 269,502.8 268,502.8 268,502.7 267,502.7 267,502.7 266,502.7 266,502.6 265,502.6 265,502.6 264,502.6 264,502.6 263,502.6 263,502.6 262,502.6 262,502.6 261,502.6 261,502.5 260,502.5 260,502.5 259,502.5 259,502.5 258,502.5 258,502.5 257,502.5 257,502.5 256,502.5 256,502.5 255,502.5 255,502.5 254,502.5 254,502.5 253,502.5 253,502.5 252,502.5 252,502.5 251,502.5 251,502.5 250,502.5 250,502.5 249,502.5 249,502.5 248,502.5 248,502.5 247,502.5 247,502.5 246,502.5 246,502.5 245,502.5 245,502.5 244,502.5 244,502.5 243,502.5 243,502.5 242,502.5 242,502.5 241,502.5 241,502.5 240,502.5 240,502.5 239,502.5 239,502.5 238,502.5 238,502.5 237,502.5 237,502.5 236,502.5 236,502.5 235,502.5 235,502.5 234,502.5 234,502.5 233,502.5 233,502.5 232,502.5 232,502.5 231,502.5 231,502.5 230,502.5 230,502.5 229,502.5 229,502.5 228,502.5 228,502.5 227,502.5 227,502.5 226,502.5 226,502.5 225,502.5 225,502.5 224,502.5 224,502.5 223,502.5 223,502.5 222,502.5 222,502.5 221,502.5 221,502.5 220,502.5 220,502.5 219,502.5 219,502.5 218,502.5 218,502.5 217,502.5 217,502.5 216,502.5 216,502.5 215,502.5 215,502.5 214,502.5 214,502.5 213,502.5 213,502.5 212,502.5 212,502.5 211,502.5 211,502.5 210,502.5 210,502.5 209,502.5 209,502.5 208,502.5 208,502.5 207,502.5 207,502.5 206,502.5 206,502.5 205,502.5 205,502.5 204,502.5 204,502.5 203,502.5 203,502.5 202,502.5 202,502.5 201,502.5 201,502.5 200,502.5 200,502.5 199,502.5 199,502.5 198,502.5 198,502.5 197,502.5 197,502.5 196,502.5 196,502.5 195,502.5 195,502.5 194,502.5 194,502.5 193,502.5 193,502.5 192,502.5 192,502.5 191,502.5 191,502.5 190,502.5 190,502.5 189,502.5 189,502.5 188,502.5 188,502.5 187,502.5 187,502.5 186,502.5 186,502.5 185,502.5 185,502.5 184,502.5 184,502.5 183,502.5 183,502.5 182,502.5 182,502.5 181,502.5 181,502.5 180,502.5 180,502.5 179,502.5 179,502.5 178,502.5 178,502.5 177,502.5 177,502.5 176,502.5 176,502.5 175,502.5 175,502.5 174,502.5 174,502.5 173,502.5 173,502.5 172,502.5 172,502.5 171,502.5 171,502.5 170,502.5 170,502.5 169,502.5 169,502.5 168,502.5 168,502.5 167,502.5 167,502.5 166,502.5 166,502.5 165,502.5 165,502.5 164,502.5 164,502.5 163,502.5 163,502.5 162,502.5 162,502.5 161,502.5 161,502.5 160,502.5 160,502.5 159,502.5 159,502.5 158,502.5 158,502.5 157,502.5 157,502.5 156,502.5 156,502.5 155,502.5 155,502.5 154,502.5 154,502.5 153,502.5 153,502.5 152,502.5 152,502.5 151,502.5 151,502.5 150,502.5 150,502.5 149,502.5 149,502.5 148,502.5 148,502.5 147,502.5 147,502.5 146,502.5 146,502.5 145,502.5 145,502.5 144,502.5 144,502.5 143,502.5 143,502.5 142,502.5 142,502.5 141,502.5 141,502.5 140,502.5 140,502.5 139,502.5 139,502.5 138,502.5 138,502.5 137,502.5 137,502.5 136,502.5 136,502.5 135,502.5 135,502.5 134,502.5 134,502.5 133,502.5" fill="#6464dc"/><rect x="557" y="235" width="1" height="103" fill="#107010"/><rect x="174" y="345" width="1" height="97" fill="#200000"/><rect x="557" y="345" width="1" height="97" fill="#107010"/><rect x="174" y="449" width="1" height="106" fill="#200000"/><rect x="557" y="449" width="1" height="106" fill="#107010"/></svg>
<div style="left:1px;top:559px;width:897px;height:17px;background:#f0f0f0;"></div>
<div style="left:1px;top:559px;width:897px;height:1px;background:#fafafa;"></div>
<div style="left:154px;top:560px;width:354px;height:15px;background:#cdcdcd;"></div>
<svg style="left:141px;top:563px" width="9" height="10"><path d="M7 1 L2.5 4.5 L7 8" fill="none" stroke="#606060" stroke-width="2.2"/></svg>
<svg style="left:869px;top:563px" width="9" height="10"><path d="M1.5 1 L6 4.5 L1.5 8" fill="none" stroke="#606060" stroke-width="2.2"/></svg>
<div style="left:1px;top:576px;width:897px;height:1px;background:#d0d0d0;"></div>
<div style="left:1px;top:577px;width:897px;height:55px;background:#f6f7fc;"></div>
<div style="left:1px;top:577px;width:10px;height:55px;background:#f6f7fc;"></div>
<div style="left:11px;top:577px;width:1px;height:55px;background:#d6d6d6;"></div>
<svg style="left:0;top:0" width="899" height="657"><rect x="5" y="582" width="4" height="1" fill="#c0c0c4"/><rect x="5" y="586" width="4" height="1" fill="#c0c0c4"/><rect x="5" y="590" width="4" height="1" fill="#c0c0c4"/><rect x="5" y="594" width="4" height="1" fill="#c0c0c4"/><rect x="5" y="598" width="4" height="1" fill="#c0c0c4"/><rect x="5" y="602" width="4" height="1" fill="#c0c0c4"/><rect x="5" y="606" width="4" height="1" fill="#c0c0c4"/><rect x="5" y="610" width="4" height="1" fill="#c0c0c4"/><rect x="5" y="614" width="4" height="1" fill="#c0c0c4"/><rect x="5" y="618" width="4" height="1" fill="#c0c0c4"/><rect x="5" y="622" width="4" height="1" fill="#c0c0c4"/><rect x="5" y="626" width="4" height="1" fill="#c0c0c4"/></svg>
<div class="t" style="left:18px;top:588px;font-size:12px;">Project Rate (Hz):</div>
<div class="t" style="left:126px;top:588px;font-size:12px;">Snap-To</div>
<div class="t" style="left:212px;top:588px;font-size:12px;">Audio Position</div>
<div style="left:119px;top:585px;width:1px;height:17px;background:#a0a0a0;"></div>
<div style="left:119px;top:609px;width:1px;height:17px;background:#a0a0a0;"></div>
<div style="left:205px;top:585px;width:1px;height:17px;background:#a0a0a0;"></div>
<div style="left:205px;top:609px;width:1px;height:17px;background:#a0a0a0;"></div>
<div style="left:367px;top:585px;width:1px;height:17px;background:#a0a0a0;"></div>
<div style="left:367px;top:609px;width:1px;height:17px;background:#a0a0a0;"></div>
<div style="left:18px;top:606px;width:80px;height:23px;background:#fff;border:1px solid #7a7a7a;box-sizing:border-box;"></div>
<div class="t" style="left:24px;top:612px;font-size:12px;">44100</div>
<svg style="left:83px;top:614px" width="10" height="6"><path d="M0.5 0.5 L5 5 L9.5 0.5" fill="none" stroke="#333" stroke-width="1"/></svg>
<div style="left:126px;top:606px;width:73px;height:23px;background:#e1e1e1;border:1px solid #adadad;box-sizing:border-box;"></div>
<div style="left:130px;top:606px;width:51px;height:23px;overflow:hidden;"><div class="t" style="left:0;top:6px;font-size:12px;color:#000;">Off</div></div>
<svg style="left:185px;top:614px" width="10" height="6"><path d="M0.5 0.5 L5 5 L9.5 0.5" fill="none" stroke="#333" stroke-width="1"/></svg>
<div style="left:373px;top:582px;width:300px;height:23px;background:#e1e1e1;border:1px solid #adadad;box-sizing:border-box;"></div>
<div style="left:377px;top:582px;width:278px;height:23px;overflow:hidden;"><div class="t" style="left:0;top:6px;font-size:12px;color:#000;">Start and End of Selection</div></div>
<svg style="left:659px;top:590px" width="10" height="6"><path d="M0.5 0.5 L5 5 L9.5 0.5" fill="none" stroke="#333" stroke-width="1"/></svg>
<div style="left:212px;top:606px;width:147px;height:21px;background:#d2d3dc;border-top:2px solid #6a6a6a;border-left:2px solid #6a6a6a;border-bottom:1px solid #f0f0f0;border-right:1px solid #f0f0f0;box-sizing:border-box;"></div>
<div style="left:234.7px;top:608px;width:11.6px;height:18px;background:#b8bac8;"></div>
<div style="left:268.0px;top:608px;width:16.5px;height:18px;background:#b8bac8;"></div>
<div style="left:305.0px;top:608px;width:2.6px;height:18px;background:#b8bac8;"></div>
<div style="left:338.0px;top:608px;width:12.0px;height:18px;background:#b8bac8;"></div>
<div style="left:350px;top:608px;width:8px;height:18px;background:#a4a8b6;"></div>
<svg style="left:350px;top:614px" width="8" height="6"><path d="M0.5 0.5 H7.5 L4 5 Z" fill="#000"/></svg>
<div class="t" style="left:209.6px;top:610.5px;width:20px;text-align:center;font-size:13.5px;color:#2020b4;transform:scaleX(0.86);">0</div>
<div class="t" style="left:219.7px;top:610.5px;width:20px;text-align:center;font-size:13.5px;color:#2020b4;transform:scaleX(0.86);">0</div>
<div class="t" style="left:231.5px;top:610.5px;width:20px;text-align:center;font-size:13.5px;color:#2020b4;transform:scaleX(0.86);">h</div>
<div class="t" style="left:242.5px;top:610.5px;width:20px;text-align:center;font-size:13.5px;color:#2020b4;transform:scaleX(0.86);">0</div>
<div class="t" style="left:252.3px;top:610.5px;width:20px;text-align:center;font-size:13.5px;color:#2020b4;transform:scaleX(0.86);">0</div>
<div class="t" style="left:266.5px;top:610.5px;width:20px;text-align:center;font-size:13.5px;color:#2020b4;transform:scaleX(0.86);">m</div>
<div class="t" style="left:279.5px;top:610.5px;width:20px;text-align:center;font-size:13.5px;color:#2020b4;transform:scaleX(0.86);">3</div>
<div class="t" style="left:289.6px;top:610.5px;width:20px;text-align:center;font-size:13.5px;color:#2020b4;transform:scaleX(0.86);">4</div>
<div class="t" style="left:295.9px;top:610.5px;width:20px;text-align:center;font-size:13.5px;color:#2020b4;transform:scaleX(0.86);">.</div>
<div class="t" style="left:303.0px;top:610.5px;width:20px;text-align:center;font-size:13.5px;color:#2020b4;transform:scaleX(0.86);">3</div>
<div class="t" style="left:311.9px;top:610.5px;width:20px;text-align:center;font-size:13.5px;color:#2020b4;transform:scaleX(0.86);">0</div>
<div class="t" style="left:321.7px;top:610.5px;width:20px;text-align:center;font-size:13.5px;color:#2020b4;transform:scaleX(0.86);">5</div>
<div class="t" style="left:334.0px;top:610.5px;width:20px;text-align:center;font-size:13.5px;color:#2020b4;transform:scaleX(0.86);">s</div>
<div style="left:373px;top:606px;width:147px;height:21px;background:#d2d3dc;border-top:2px solid #6a6a6a;border-left:2px solid #6a6a6a;border-bottom:1px solid #f0f0f0;border-right:1px solid #f0f0f0;box-sizing:border-box;"></div>
<div style="left:395.7px;top:608px;width:11.6px;height:18px;background:#b8bac8;"></div>
<div style="left:429.0px;top:608px;width:16.5px;height:18px;background:#b8bac8;"></div>
<div style="left:466.0px;top:608px;width:2.6px;height:18px;background:#b8bac8;"></div>
<div style="left:499.0px;top:608px;width:12.0px;height:18px;background:#b8bac8;"></div>
<div style="left:511px;top:608px;width:8px;height:18px;background:#a4a8b6;"></div>
<svg style="left:511px;top:614px" width="8" height="6"><path d="M0.5 0.5 H7.5 L4 5 Z" fill="#000"/></svg>
<div class="t" style="left:370.6px;top:610.5px;width:20px;text-align:center;font-size:13.5px;color:#2020b4;transform:scaleX(0.86);">0</div>
<div class="t" style="left:380.7px;top:610.5px;width:20px;text-align:center;font-size:13.5px;color:#2020b4;transform:scaleX(0.86);">0</div>
<div class="t" style="left:392.5px;top:610.5px;width:20px;text-align:center;font-size:13.5px;color:#2020b4;transform:scaleX(0.86);">h</div>
<div class="t" style="left:403.5px;top:610.5px;width:20px;text-align:center;font-size:13.5px;color:#2020b4;transform:scaleX(0.86);">0</div>
<div class="t" style="left:413.3px;top:610.5px;width:20px;text-align:center;font-size:13.5px;color:#2020b4;transform:scaleX(0.86);">0</div>
<div class="t" style="left:427.5px;top:610.5px;width:20px;text-align:center;font-size:13.5px;color:#2020b4;transform:scaleX(0.86);">m</div>
<div class="t" style="left:440.5px;top:610.5px;width:20px;text-align:center;font-size:13.5px;color:#2020b4;transform:scaleX(0.86);">0</div>
<div class="t" style="left:450.6px;top:610.5px;width:20px;text-align:center;font-size:13.5px;color:#2020b4;transform:scaleX(0.86);">3</div>
<div class="t" style="left:456.9px;top:610.5px;width:20px;text-align:center;font-size:13.5px;color:#2020b4;transform:scaleX(0.86);">.</div>
<div class="t" style="left:464.0px;top:610.5px;width:20px;text-align:center;font-size:13.5px;color:#2020b4;transform:scaleX(0.86);">3</div>
<div class="t" style="left:472.9px;top:610.5px;width:20px;text-align:center;font-size:13.5px;color:#2020b4;transform:scaleX(0.86);">2</div>
<div class="t" style="left:482.7px;top:610.5px;width:20px;text-align:center;font-size:13.5px;color:#2020b4;transform:scaleX(0.86);">1</div>
<div class="t" style="left:495.0px;top:610.5px;width:20px;text-align:center;font-size:13.5px;color:#2020b4;transform:scaleX(0.86);">s</div>
<div style="left:527px;top:606px;width:147px;height:21px;background:#d2d3dc;border-top:2px solid #6a6a6a;border-left:2px solid #6a6a6a;border-bottom:1px solid #f0f0f0;border-right:1px solid #f0f0f0;box-sizing:border-box;"></div>
<div style="left:549.7px;top:608px;width:11.6px;height:18px;background:#b8bac8;"></div>
<div style="left:583.0px;top:608px;width:16.5px;height:18px;background:#b8bac8;"></div>
<div style="left:620.0px;top:608px;width:2.6px;height:18px;background:#b8bac8;"></div>
<div style="left:653.0px;top:608px;width:12.0px;height:18px;background:#b8bac8;"></div>
<div style="left:665px;top:608px;width:8px;height:18px;background:#a4a8b6;"></div>
<svg style="left:665px;top:614px" width="8" height="6"><path d="M0.5 0.5 H7.5 L4 5 Z" fill="#000"/></svg>
<div class="t" style="left:524.6px;top:610.5px;width:20px;text-align:center;font-size:13.5px;color:#2020b4;transform:scaleX(0.86);">0</div>
<div class="t" style="left:534.7px;top:610.5px;width:20px;text-align:center;font-size:13.5px;color:#2020b4;transform:scaleX(0.86);">0</div>
<div class="t" style="left:546.5px;top:610.5px;width:20px;text-align:center;font-size:13.5px;color:#2020b4;transform:scaleX(0.86);">h</div>
<div class="t" style="left:557.5px;top:610.5px;width:20px;text-align:center;font-size:13.5px;color:#2020b4;transform:scaleX(0.86);">0</div>
<div class="t" style="left:567.3px;top:610.5px;width:20px;text-align:center;font-size:13.5px;color:#2020b4;transform:scaleX(0.86);">0</div>
<div class="t" style="left:581.5px;top:610.5px;width:20px;text-align:center;font-size:13.5px;color:#2020b4;transform:scaleX(0.86);">m</div>
<div class="t" style="left:594.5px;top:610.5px;width:20px;text-align:center;font-size:13.5px;color:#2020b4;transform:scaleX(0.86);">0</div>
<div class="t" style="left:604.6px;top:610.5px;width:20px;text-align:center;font-size:13.5px;color:#2020b4;transform:scaleX(0.86);">3</div>
<div class="t" style="left:610.9px;top:610.5px;width:20px;text-align:center;font-size:13.5px;color:#2020b4;transform:scaleX(0.86);">.</div>
<div class="t" style="left:618.0px;top:610.5px;width:20px;text-align:center;font-size:13.5px;color:#2020b4;transform:scaleX(0.86);">3</div>
<div class="t" style="left:626.9px;top:610.5px;width:20px;text-align:center;font-size:13.5px;color:#2020b4;transform:scaleX(0.86);">2</div>
<div class="t" style="left:636.7px;top:610.5px;width:20px;text-align:center;font-size:13.5px;color:#2020b4;transform:scaleX(0.86);">1</div>
<div class="t" style="left:649.0px;top:610.5px;width:20px;text-align:center;font-size:13.5px;color:#2020b4;transform:scaleX(0.86);">s</div>
<div style="left:1px;top:632px;width:897px;height:25px;background:#f0f0f0;"></div>
<div style="left:1px;top:632px;width:897px;height:1px;background:#d8d8d8;"></div>
<div style="left:10px;top:636px;width:1px;height:20px;background:#d0d0d0;"></div>
<div style="left:148px;top:636px;width:1px;height:20px;background:#d0d0d0;"></div>
<div style="left:722px;top:636px;width:1px;height:20px;background:#d0d0d0;"></div>
<div class="t" style="left:15px;top:640px;font-size:11.5px;">Playing Paused.</div>
<div class="t" style="left:728px;top:640px;font-size:11.5px;">Actual Rate: 44100</div>
<svg style="left:0;top:0" width="899" height="657"><rect x="894" y="648" width="2" height="2" fill="#b0b0b0"/><rect x="894" y="651" width="2" height="2" fill="#b0b0b0"/><rect x="891" y="651" width="2" height="2" fill="#b0b0b0"/><rect x="894" y="654" width="2" height="2" fill="#b0b0b0"/><rect x="891" y="654" width="2" height="2" fill="#b0b0b0"/><rect x="888" y="654" width="2" height="2" fill="#b0b0b0"/></svg>
<div style="left:0px;top:0px;width:899px;height:657px;border:1px solid #9a9a9a;box-sizing:border-box;"></div>
</body></html>
